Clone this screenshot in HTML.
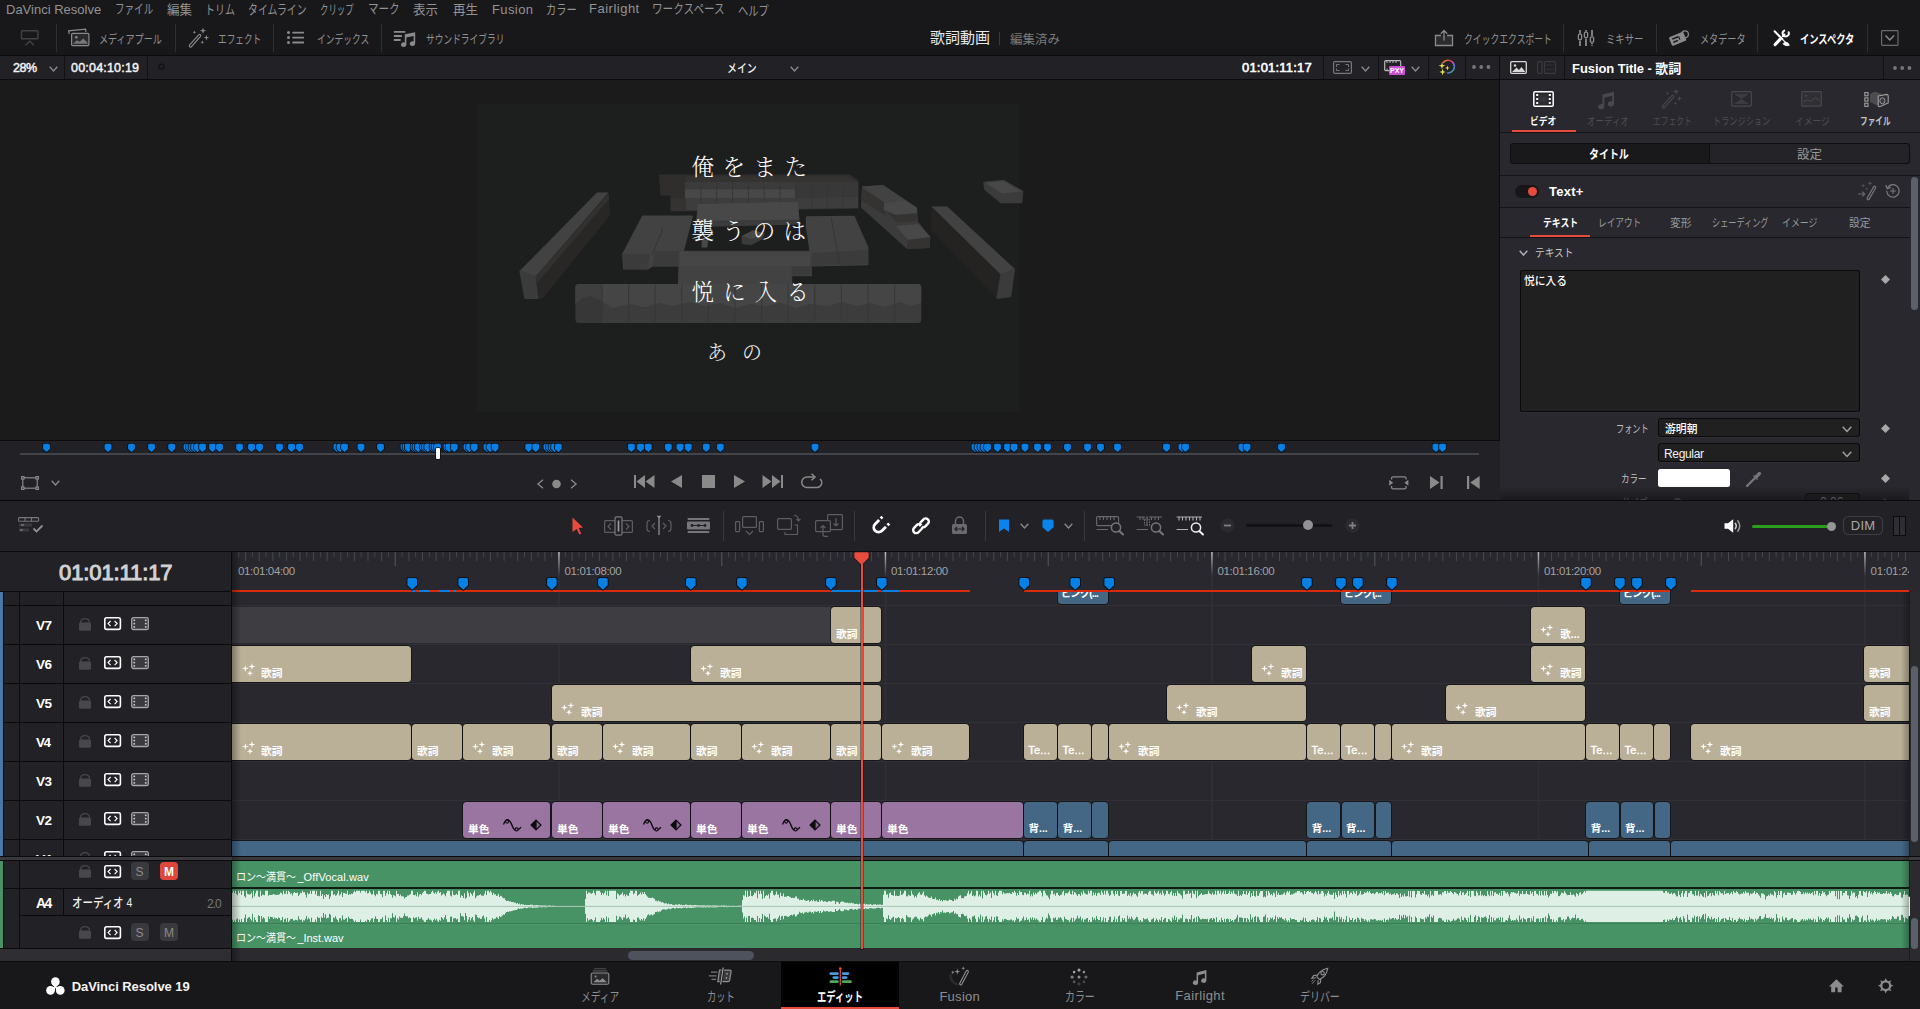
<!DOCTYPE html>
<html lang="ja"><head><meta charset="utf-8"><title>DaVinci Resolve - 歌詞動画</title>
<style>
html,body{margin:0;padding:0;background:#1a1a1a;}
body{width:1920px;height:1009px;overflow:hidden;position:relative;font-family:"Liberation Sans","Noto Sans CJK JP",sans-serif;}
#app{position:absolute;left:0;top:0;width:1920px;height:1009px;overflow:hidden;}
#app div,#app svg,#app span.t{position:absolute;}
#app span.t{white-space:nowrap;display:block;}
#app svg{overflow:visible;}
.clip{border-radius:3px;}
</style></head>
<body><div id="app">
<div style="left:0px;top:0px;width:1920px;height:55px;background:#18181b;"></div>
<div style="left:0px;top:55px;width:1920px;height:1px;background:#0b0b0d;"></div>
<span class="t" id="t1" style="font-size:13px;line-height:21px;height:21px;color:#939393;left:6.00px;top:-1px;transform-origin:0 50%;">DaVinci Resolve</span>
<span class="t" id="t2" style="font-size:13px;line-height:21px;height:21px;color:#939393;left:114.53px;top:-2px;transform-origin:0 50%;transform:scaleX(0.7347);">ファイル</span>
<span class="t" id="t3" style="font-size:13px;line-height:21px;height:21px;color:#939393;left:167.00px;top:-1px;transform-origin:0 50%;transform:scaleX(0.9615);">編集</span>
<span class="t" id="t4" style="font-size:13px;line-height:21px;height:21px;color:#939393;left:204.94px;top:-1px;transform-origin:0 50%;transform:scaleX(0.7647);">トリム</span>
<span class="t" id="t5" style="font-size:13px;line-height:21px;height:21px;color:#939393;left:248.24px;top:-1px;transform-origin:0 50%;transform:scaleX(0.7600);">タイムライン</span>
<span class="t" id="t6" style="font-size:13px;line-height:21px;height:21px;color:#939393;left:320.35px;top:-1px;transform-origin:0 50%;transform:scaleX(0.6471);">クリップ</span>
<span class="t" id="t7" style="font-size:13px;line-height:21px;height:21px;color:#939393;left:368.19px;top:-2px;transform-origin:0 50%;transform:scaleX(0.8108);">マーク</span>
<span class="t" id="t8" style="font-size:13px;line-height:21px;height:21px;color:#939393;left:413.00px;top:-1px;transform-origin:0 50%;transform:scaleX(0.9615);">表示</span>
<span class="t" id="t9" style="font-size:13px;line-height:21px;height:21px;color:#939393;left:453.00px;top:-1px;transform-origin:0 50%;transform:scaleX(0.9615);">再生</span>
<span class="t" id="t10" style="font-size:13px;line-height:21px;height:21px;color:#939393;left:492.00px;top:-1px;transform-origin:0 50%;letter-spacing:0.400px;">Fusion</span>
<span class="t" id="t11" style="font-size:13px;line-height:21px;height:21px;color:#939393;left:546.22px;top:-1px;transform-origin:0 50%;transform:scaleX(0.7838);">カラー</span>
<span class="t" id="t12" style="font-size:13px;line-height:21px;height:21px;color:#939393;left:589.00px;top:-2px;transform-origin:0 50%;letter-spacing:0.500px;">Fairlight</span>
<span class="t" id="t13" style="font-size:13px;line-height:21px;height:21px;color:#939393;left:652.18px;top:-2px;transform-origin:0 50%;transform:scaleX(0.8161);">ワークスペース</span>
<span class="t" id="t14" style="font-size:13px;line-height:21px;height:21px;color:#939393;left:738.21px;top:0px;transform-origin:0 50%;transform:scaleX(0.7895);">ヘルプ</span>
<div style="left:56px;top:24px;width:1px;height:28px;background:#2e2e33;"></div>
<div style="left:175px;top:24px;width:1px;height:28px;background:#2e2e33;"></div>
<div style="left:273px;top:24px;width:1px;height:28px;background:#2e2e33;"></div>
<div style="left:381px;top:24px;width:1px;height:28px;background:#2e2e33;"></div>
<div style="left:1563px;top:24px;width:1px;height:28px;background:#2e2e33;"></div>
<div style="left:1656px;top:24px;width:1px;height:28px;background:#2e2e33;"></div>
<div style="left:1757px;top:24px;width:1px;height:28px;background:#2e2e33;"></div>
<div style="left:1867px;top:24px;width:1px;height:28px;background:#2e2e33;"></div>
<svg style="left:20px;top:29px;" width="20" height="18" viewBox="0 0 20 18"><g fill="none" stroke="#434347" stroke-width="1.4"><rect x="1.5" y="1.7" width="16.5" height="8" rx="0.8"/><path d="M5.5 16.3 L9.8 12.3 L14 16.3"/></g></svg>
<svg style="left:67px;top:28px;" width="23" height="19" viewBox="0 0 23 19"><g fill="none" stroke="#8a8a8a" stroke-width="1.2"><path d="M2.3 6 L1.6 2.8 L18.6 1.2 L18.9 4"/><rect x="4.6" y="5.4" width="17.3" height="12.2" rx="1" fill="#2a2a2e"/><circle cx="9.3" cy="9.2" r="1.3" fill="#8a8a8a" stroke="none"/><path d="M6 15.8 L10 12.2 L12.6 13.8 L16.3 10.6 L20.5 14.8 V15.8 Z" fill="#77777b" stroke="none"/></g></svg>
<span class="t" id="t15" style="font-size:12px;line-height:19px;height:19px;color:#929292;left:99.24px;top:31px;transform-origin:0 50%;transform:scaleX(0.7561);">メディアプール</span>
<svg style="left:188px;top:27px;" width="22" height="22" viewBox="0 0 22 22"><g fill="none" stroke="#8a8a8a" stroke-linecap="round"><path d="M2.6 18.8 L11.6 8.6" stroke-width="3.6"/><path d="M2.6 18.8 L11.6 8.6" stroke="#18181b" stroke-width="1.3"/><path d="M9.3 11.2 L9.4 11.1" stroke-width="3.6" stroke-linecap="butt"/></g><g fill="#8a8a8a"><path d="M15 0.4 L15.8 2.9 L18.3 3.6 L15.8 4.4 L15 6.9 L14.2 4.4 L11.7 3.6 L14.2 2.9 Z"/><path d="M18.4 7.7 L19.1 9.9 L21.3 10.6 L19.1 11.3 L18.4 13.5 L17.7 11.3 L15.5 10.6 L17.7 9.9 Z"/><path d="M6.4 3.5 L6.9 4.8 L8.2 5.2 L6.9 5.7 L6.4 7 L5.9 5.7 L4.6 5.2 L5.9 4.8 Z"/><path d="M14.3 13.4 L14.8 14.8 L16.2 15.3 L14.8 15.8 L14.3 17.2 L13.8 15.8 L12.4 15.3 L13.8 14.8 Z"/></g></svg>
<span class="t" id="t16" style="font-size:12px;line-height:19px;height:19px;color:#929292;left:218.28px;top:31px;transform-origin:0 50%;transform:scaleX(0.7193);">エフェクト</span>
<svg style="left:286px;top:31px;" width="19" height="14" viewBox="0 0 19 14"><g fill="#8a8a8a"><circle cx="2.5" cy="1.6" r="1.5"/><circle cx="2.5" cy="6.6" r="1.5"/><circle cx="2.5" cy="11.5" r="1.5"/><rect x="6.3" y="0.7" width="11.7" height="1.9" rx="0.5"/><rect x="6.3" y="5.7" width="11.7" height="1.9" rx="0.5"/><rect x="6.3" y="10.6" width="11.7" height="1.9" rx="0.5"/></g></svg>
<span class="t" id="t17" style="font-size:12px;line-height:19px;height:19px;color:#929292;left:316.77px;top:31px;transform-origin:0 50%;transform:scaleX(0.7286);">インデックス</span>
<svg style="left:393px;top:30px;" width="23" height="18" viewBox="0 0 23 18"><g fill="#8a8a8a"><rect x="0.8" y="1" width="11.6" height="1.8" rx="0.5"/><rect x="0.8" y="5.1" width="8.2" height="1.8" rx="0.5"/><rect x="0.8" y="9.1" width="6.9" height="1.8" rx="0.5"/><path d="M11.8 4.3 L22.2 2.2 V13.6 A2.7 2.3 0 1 1 20.6 11.5 V5.9 L13.4 7.4 V14.6 A2.7 2.3 0 1 1 11.8 12.5 Z"/></g></svg>
<span class="t" id="t18" style="font-size:12px;line-height:19px;height:19px;color:#929292;left:425.50px;top:31px;transform-origin:0 50%;transform:scaleX(0.7264);">サウンドライブラリ</span>
<span class="t" id="t19" style="font-size:15px;line-height:24px;height:24px;color:#e8e8e8;left:930.00px;top:26px;transform-origin:0 50%;">歌詞動画</span>
<div style="left:999px;top:32px;width:1px;height:13px;background:#3a3a3e;"></div>
<span class="t" id="t20" style="font-size:12.5px;line-height:20px;height:20px;color:#7c7c7c;left:1010.00px;top:30px;transform-origin:0 50%;">編集済み</span>
<svg style="left:1434px;top:29px;" width="20" height="18" viewBox="0 0 20 18"><g fill="none" stroke="#8a8a8a" stroke-width="1.3"><path d="M7 6.5 H1.5 V16.5 H18.5 V6.5 H13" fill="#2b2b2f"/><path d="M10 11.5 V2 M6.8 4.8 L10 1.5 L13.2 4.8"/></g></svg>
<span class="t" id="t21" style="font-size:12px;line-height:19px;height:19px;color:#929292;left:1463.76px;top:31px;transform-origin:0 50%;transform:scaleX(0.7350);">クイックエクスポート</span>
<svg style="left:1577px;top:29px;" width="19" height="18" viewBox="0 0 19 18"><g fill="none" stroke="#8a8a8a" stroke-width="1.3"><path d="M3 1 V4.5 M3 11.5 V17 M9 1 V2.5 M9 9.5 V17 M15 1 V7 M15 14 V15.2 M15 16.3 V17" stroke-width="1.8"/><rect x="1.4" y="5.2" width="3.2" height="5.4" rx="1"/><rect x="7.4" y="3.2" width="3.2" height="5.4" rx="1"/><rect x="13.4" y="7.8" width="3.2" height="5.4" rx="1"/></g></svg>
<span class="t" id="t22" style="font-size:12px;line-height:19px;height:19px;color:#929292;left:1605.94px;top:31px;transform-origin:0 50%;transform:scaleX(0.7778);">ミキサー</span>
<svg style="left:1669px;top:29px;" width="22" height="18" viewBox="0 0 22 18"><g transform="rotate(-22 9 10)"><rect x="1" y="5" width="15.5" height="9.5" rx="1.2" fill="#8a8a8a"/><path d="M3.5 8 H10 M3.5 11.3 H8.5" stroke="#18181b" stroke-width="1.4"/><path d="M10.5 8 V11.3" stroke="#18181b" stroke-width="1.2"/></g><circle cx="16" cy="5.2" r="3.4" fill="none" stroke="#8a8a8a" stroke-width="1.2"/></svg>
<span class="t" id="t23" style="font-size:12px;line-height:19px;height:19px;color:#929292;left:1699.74px;top:31px;transform-origin:0 50%;transform:scaleX(0.7586);">メタデータ</span>
<svg style="left:1772px;top:29px;" width="19" height="18" viewBox="0 0 19 18"><g fill="none" stroke="#fff" stroke-linecap="round"><path d="M2.6 2.2 L10.5 10.3" stroke-width="2"/><path d="M11.5 11.3 L15 14.8" stroke-width="1.2"/><path d="M13 13 Q16.5 13 17.3 16.3 Q14 17.6 11.2 15.2 Z" fill="#fff" stroke-width="0.8"/><path d="M3.2 15.5 L8 10.3" stroke-width="3.2"/><path d="M10.8 7.3 L12.5 5.5" stroke-width="2"/><path d="M16.6 3.2 A3.1 3.1 0 1 1 12.3 1.6" stroke-width="1.9"/></g></svg>
<span class="t" id="t24" style="font-size:12px;line-height:19px;height:19px;color:#ffffff;font-weight:700;left:1800.23px;top:31px;transform-origin:0 50%;transform:scaleX(0.7721);">インスペクタ</span>
<svg style="left:1881px;top:30px;" width="18" height="16" viewBox="0 0 18 16"><g fill="none" stroke="#6a6a6e" stroke-width="1.2"><rect x="0.6" y="0.6" width="16.4" height="14.8" rx="0.8"/><path d="M4.5 5.5 L8.8 10 L13.1 5.5" stroke="#8a8a8a" stroke-width="1.5"/></g></svg>
<div style="left:0px;top:56px;width:1920px;height:23px;background:#212126;"></div>
<div style="left:0px;top:79px;width:1920px;height:1px;background:#0b0b0d;"></div>
<span class="t" id="t25" style="font-size:12.5px;line-height:20px;height:20px;color:#f4f4f4;left:13.00px;top:58px;transform-origin:0 50%;letter-spacing:-0.500px;-webkit-text-stroke:0.45px currentColor;">28%</span>
<svg style="left:49px;top:66px;" width="9" height="6" viewBox="0 0 9 6"><path d="M0.7 0.7 L4.5 5 L8.3 0.7" fill="none" stroke="#8a8a8a" stroke-width="1.4"/></svg>
<div style="left:64px;top:56px;width:1px;height:23px;background:#121214;"></div>
<div style="left:147px;top:56px;width:1px;height:23px;background:#121214;"></div>
<div style="left:1323px;top:56px;width:1px;height:23px;background:#121214;"></div>
<div style="left:1378px;top:56px;width:1px;height:23px;background:#121214;"></div>
<div style="left:1428px;top:56px;width:1px;height:23px;background:#121214;"></div>
<div style="left:1465px;top:56px;width:1px;height:23px;background:#121214;"></div>
<div style="left:1499px;top:56px;width:1px;height:23px;background:#121214;"></div>
<div style="left:1564px;top:56px;width:1px;height:23px;background:#121214;"></div>
<div style="left:1883px;top:56px;width:1px;height:23px;background:#121214;"></div>
<span class="t" id="t26" style="font-size:12.5px;line-height:20px;height:20px;color:#f4f4f4;left:71.00px;top:58px;transform-origin:0 50%;letter-spacing:0.200px;-webkit-text-stroke:0.45px currentColor;">00:04:10:19</span>
<svg style="left:157.5px;top:62.5px;" width="7" height="7" viewBox="0 0 7 7"><circle cx="3.5" cy="3.5" r="2.5" fill="none" stroke="#111113" stroke-width="1.2"/></svg>
<span class="t" id="t27" style="font-size:12px;line-height:19px;height:19px;color:#f0f0f0;font-weight:500;left:727.18px;top:60px;transform-origin:0 50%;transform:scaleX(0.8235);">メイン</span>
<svg style="left:790px;top:66px;" width="9" height="6" viewBox="0 0 9 6"><path d="M0.7 0.7 L4.5 5 L8.3 0.7" fill="none" stroke="#8a8a8a" stroke-width="1.4"/></svg>
<span class="t" id="t28" style="font-size:13px;line-height:21px;height:21px;color:#ffffff;left:1242.00px;top:57px;transform-origin:0 50%;letter-spacing:0.200px;-webkit-text-stroke:0.6px currentColor;">01:01:11:17</span>
<svg style="left:1333px;top:61px;" width="19" height="13" viewBox="0 0 19 13"><g fill="none" stroke="#77777b" stroke-width="1.2"><rect x="0.6" y="0.6" width="17.8" height="11.8" rx="1.2"/><path d="M3.5 6 V3.5 H6.5 M12.5 3.5 H15.5 V6 M15.5 7.5 V9.5 H12.5 M6.5 9.5 H3.5 V7.5" stroke-width="1"/></g></svg>
<svg style="left:1361px;top:66px;" width="9" height="6" viewBox="0 0 9 6"><path d="M0.7 0.7 L4.5 5 L8.3 0.7" fill="none" stroke="#8a8a8a" stroke-width="1.4"/></svg>
<svg style="left:1384px;top:59px;" width="22" height="17" viewBox="0 0 22 17"><g><rect x="0.7" y="1.7" width="16" height="10" rx="1" fill="none" stroke="#b8b8b8" stroke-width="1.2"/><path d="M3 1.7 V4 M6 1.7 V4 M9 1.7 V4 M12 1.7 V4 M3 9.5 V11.7" stroke="#b8b8b8" stroke-width="1"/><rect x="5" y="7" width="16" height="9" rx="1" fill="#c94fd0"/><text x="13" y="14.3" font-size="7" font-weight="700" fill="#fff" text-anchor="middle" font-family="Liberation Sans, sans-serif">PXY</text></g></svg>
<svg style="left:1411px;top:66px;" width="9" height="6" viewBox="0 0 9 6"><path d="M0.7 0.7 L4.5 5 L8.3 0.7" fill="none" stroke="#8a8a8a" stroke-width="1.4"/></svg>
<svg style="left:1438px;top:58px;" width="20" height="18" viewBox="0 0 20 18"><defs><linearGradient id="cg" x1="0" y1="0" x2="1" y2="1"><stop offset="0" stop-color="#f0a030"/><stop offset="0.3" stop-color="#e8403a"/><stop offset="0.55" stop-color="#d050e0"/><stop offset="0.75" stop-color="#4a7be0"/><stop offset="1" stop-color="#3fbf4a"/></linearGradient></defs>
<path d="M5.2 4.6 A6.3 6.3 0 1 1 9.6 14.9" fill="none" stroke="url(#cg)" stroke-width="1.5" stroke-linecap="round"/>
<g fill="#f0e64a"><path d="M4 4.2 L4.8 6.9 L7.5 7.7 L4.8 8.5 L4 11.2 L3.2 8.5 L0.5 7.7 L3.2 6.9 Z"/><path d="M9.4 7.5 L10 9.4 L11.9 10 L10 10.6 L9.4 12.5 L8.8 10.6 L6.9 10 L8.8 9.4 Z"/><path d="M4.6 10.8 L5.4 13.2 L7.8 14 L5.4 14.8 L4.6 17.2 L3.8 14.8 L1.4 14 L3.8 13.2 Z"/></g></svg>
<svg style="left:1472px;top:65px;" width="19" height="4" viewBox="0 0 19 4"><g fill="#77777b"><circle cx="2" cy="2" r="1.9"/><circle cx="9.2" cy="2" r="1.9"/><circle cx="16.4" cy="2" r="1.9"/></g></svg>
<div style="left:0px;top:80px;width:1500px;height:360px;background:#1b1b1b;"></div>
<div style="left:477px;top:104px;width:542px;height:308px;background:#1d1e1e;"></div>
<svg style="left:0px;top:0px;" width="1500" height="440" viewBox="0 0 1500 440"><polygon points="659.7,175.3 850.0,175.3 858.0,181.0 858.0,208.0 671.2,210.8 671.2,194.8 661.0,194.8" fill="#2f2e2c" stroke="#2f2e2c" stroke-width="1.5" stroke-linejoin="round"/><polygon points="686.0,176.5 849.0,176.5 857.0,182.0 686.0,182.0" fill="#343332" /><polygon points="685.0,182.0 795.5,182.0 795.5,198.0 685.0,198.0" fill="#3b3b3b" /><polygon points="685.0,189.6 795.5,189.6 795.5,198.0 685.0,198.0" fill="#484848" /><polygon points="795.5,182.0 858.0,182.0 858.0,196.5 795.5,198.0" fill="#393838" /><polygon points="671.2,198.0 795.5,198.0 858.0,196.5 858.0,208.0 671.2,210.8" fill="#3d3d3d" /><polygon points="671.2,198.0 686.0,198.0 686.0,210.5 671.2,210.8" fill="#343332" /><path d="M701.0 182.5 V209" stroke="#363636" stroke-width="0.9"/><path d="M716.8 182.5 V209" stroke="#363636" stroke-width="0.9"/><path d="M732.6 182.5 V209" stroke="#363636" stroke-width="0.9"/><path d="M748.4 182.5 V209" stroke="#363636" stroke-width="0.9"/><path d="M764.2 182.5 V209" stroke="#363636" stroke-width="0.9"/><path d="M780.0 182.5 V209" stroke="#363636" stroke-width="0.9"/><path d="M795.8 182.5 V209" stroke="#363636" stroke-width="0.9"/><path d="M811.6 182.5 V207" stroke="#363636" stroke-width="0.9"/><path d="M827.4 182.5 V207" stroke="#363636" stroke-width="0.9"/><path d="M843.2 182.5 V207" stroke="#363636" stroke-width="0.9"/><polygon points="698.0,204.0 797.8,201.7 800.0,224.6 695.8,226.9" fill="#3b3b3b" /><polygon points="698.0,204.0 797.8,201.7 799.4,219.5 696.3,221.0" fill="#484848" /><polygon points="862.0,186.6 883.0,185.0 917.0,207.4 917.5,221.0 930.4,237.0 929.4,248.0 907.0,249.0 861.0,207.4" fill="#3b3b3b" /><polygon points="862.0,186.6 883.0,185.0 906.0,200.5 886.0,203.5" fill="#424242" /><polygon points="862.0,188.0 886.0,204.0 886.0,216.0 861.0,200.0" fill="#343332" /><polygon points="884.0,203.0 905.0,200.0 917.0,208.0 917.5,221.0 897.0,223.0 884.0,210.0" fill="#484848" /><polygon points="884.0,210.0 897.0,223.0 917.5,221.0 917.0,213.0 896.0,215.0" fill="#343332" /><polygon points="896.0,226.0 918.0,224.0 930.4,237.0 908.0,240.0" fill="#484848" /><polygon points="908.0,240.0 930.4,237.0 929.4,248.0 907.0,249.0" fill="#343332" /><polygon points="984.0,182.6 1003.8,180.6 1022.6,191.5 1021.6,202.4 1000.8,202.4 985.0,189.5" fill="#3b3b3b" stroke="#3b3b3b" stroke-width="1.5" stroke-linejoin="round"/><polygon points="985.0,182.8 1003.5,181.0 1021.5,191.5 1002.0,193.5" fill="#484848" /><polygon points="519.8,270.8 597.0,192.5 608.6,192.5 535.7,276.7" fill="#424242" /><polygon points="519.8,270.8 535.7,276.7 538.6,298.5 524.8,298.5" fill="#3b3b3b" stroke="#3b3b3b" stroke-width="1" stroke-linejoin="round"/><polygon points="535.7,276.7 608.6,193.5 610.0,215.3 542.6,298.5 538.6,298.5" fill="#282726" /><polygon points="535.7,276.7 608.6,193.5 609.0,199.0 537.0,283.0" fill="#33312f" /><polygon points="931.4,206.4 947.3,206.4 1014.7,268.8 1000.8,274.8" fill="#424242" /><polygon points="931.4,207.4 1000.8,274.8 996.8,298.5 930.4,229.2" fill="#242322" /><polygon points="1000.8,274.8 1014.7,268.8 1010.7,296.6 996.8,298.5" fill="#3b3b3b" stroke="#3b3b3b" stroke-width="1" stroke-linejoin="round"/><polygon points="642.7,216.3 692.2,216.3 679.3,265.8 652.6,265.8 647.6,268.8 623.9,268.8 622.9,254.0" fill="#424242" stroke="#424242" stroke-width="1.5" stroke-linejoin="round"/><polygon points="622.9,254.0 650.0,254.0 647.6,268.8 623.9,268.8" fill="#3b3b3b" /><polygon points="655.0,251.0 682.0,251.0 679.3,265.8 652.6,265.8" fill="#3b3b3b" /><path d="M663 228 L652 255" stroke="#343434" stroke-width="1"/><polygon points="806.6,216.9 854.0,216.6 867.7,247.5 867.7,264.5 812.5,265.8 806.6,227.2" fill="#424242" stroke="#424242" stroke-width="1.5" stroke-linejoin="round"/><polygon points="812.0,253.0 867.7,250.0 867.7,264.5 812.5,265.8" fill="#3b3b3b" /><path d="M831 217 L840 265" stroke="#363636" stroke-width="1"/><polygon points="741.7,236.0 753.1,230.3 764.6,233.8 762.3,239.5 750.8,245.2 741.7,244.0" fill="#3b3b3b" /><polygon points="741.7,236.0 753.1,230.3 764.6,233.8 752.0,239.0" fill="#484848" /><polygon points="701.6,239.5 708.4,239.5 707.3,247.5 701.6,247.5" fill="#484848" /><polygon points="679.5,251.5 810.5,251.5 811.3,275.6 791.5,275.6 791.5,285.0 678.7,285.0" fill="#424242" stroke="#424242" stroke-width="1.5" stroke-linejoin="round"/><polygon points="680.0,252.0 810.0,252.0 810.6,266.0 679.3,266.0" fill="#464646" /><polygon points="791.5,266.0 811.0,266.0 811.3,275.6 791.5,275.6" fill="#3b3b3b" /><rect x="575.4" y="284" width="345.8" height="39" rx="3.5" fill="#3c3c3c"/><path d="M575.4 305 V287.5 Q575.4 284 579 284 H917.7 Q921.2 284 921.2 287.5 V303 L910 306 L900 302 L885 307 L870 303 L858 306 L842 302 L828 306 L810 304 L796 308 L780 303 L766 306 L750 304 L736 308 L720 303 L705 306 L690 302 L672 306 L660 303 L645 307 L630 304 L612 308 L600 300 L590 296 L582 298 Z" fill="#454545"/><path d="M575.4 288 Q575.4 284 579 284 H602 V323 H579 Q575.4 323 575.4 319 Z" fill="#000" fill-opacity="0.08"/><path d="M602.0 284.5 V322.5" stroke="#373737" stroke-width="1"/><path d="M628.6 284.5 V322.5" stroke="#373737" stroke-width="1"/><path d="M655.2 284.5 V322.5" stroke="#373737" stroke-width="1"/><path d="M681.8 284.5 V322.5" stroke="#373737" stroke-width="1"/><path d="M708.4 284.5 V322.5" stroke="#373737" stroke-width="1"/><path d="M735.0 284.5 V322.5" stroke="#373737" stroke-width="1"/><path d="M761.6 284.5 V322.5" stroke="#373737" stroke-width="1"/><path d="M788.2 284.5 V322.5" stroke="#373737" stroke-width="1"/><path d="M814.8 284.5 V322.5" stroke="#373737" stroke-width="1"/><path d="M841.4 284.5 V322.5" stroke="#373737" stroke-width="1"/><path d="M868.0 284.5 V322.5" stroke="#373737" stroke-width="1"/><path d="M894.6 284.5 V322.5" stroke="#373737" stroke-width="1"/></svg>
<span class="t" id="t29" style="font-size:22.5px;line-height:36px;height:36px;color:#ffffff;font-weight:300;font-family:'Liberation Serif','Noto Serif CJK JP','Noto Serif CJK SC',serif;left:691.50px;top:150px;transform-origin:0 50%;letter-spacing:8.500px;">俺をまた</span>
<span class="t" id="t30" style="font-size:22.5px;line-height:36px;height:36px;color:#ffffff;font-weight:300;font-family:'Liberation Serif','Noto Serif CJK JP','Noto Serif CJK SC',serif;left:691.50px;top:214px;transform-origin:0 50%;letter-spacing:8.167px;">襲うのは</span>
<span class="t" id="t31" style="font-size:22.5px;line-height:36px;height:36px;color:#ffffff;font-weight:300;font-family:'Liberation Serif','Noto Serif CJK JP','Noto Serif CJK SC',serif;left:691.50px;top:275px;transform-origin:0 50%;letter-spacing:9.167px;">悦に入る</span>
<span class="t" id="t32" style="font-size:20px;line-height:32px;height:32px;color:#f4f4f4;font-weight:300;font-family:'Liberation Serif','Noto Serif CJK JP','Noto Serif CJK SC',serif;left:707.00px;top:337px;transform-origin:0 50%;letter-spacing:15.000px;">あの</span>
<div style="left:1500px;top:80px;width:420px;height:420px;background:#28282e;"></div>
<div style="left:1499px;top:56px;width:1px;height:445px;background:#0b0b0d;"></div>
<svg style="left:1510px;top:61px;" width="17" height="13" viewBox="0 0 17 13"><g><rect x="0.7" y="0.7" width="15.6" height="11.6" rx="1" fill="none" stroke="#d8d8d8" stroke-width="1.3"/><circle cx="5" cy="4.5" r="1.3" fill="#d8d8d8"/><path d="M2 11 L6.5 6.5 L9 9 L11.5 6 L15 10.5 V11 Z" fill="#d8d8d8"/></g></svg>
<svg style="left:1537px;top:61px;" width="19" height="13" viewBox="0 0 19 13"><g fill="none" stroke="#3a3a3e" stroke-width="1.2"><rect x="0.6" y="0.6" width="4.5" height="11.8" rx="1"/><rect x="7.5" y="0.6" width="11" height="11.8" rx="1"/><path d="M9.5 4 H16.5 M9.5 8.5 H16.5" stroke-dasharray="2 1"/></g></svg>
<span class="t" id="t33" style="font-size:13px;line-height:21px;height:21px;color:#ffffff;font-weight:700;left:1572.00px;top:58px;transform-origin:0 50%;letter-spacing:-0.062px;">Fusion Title - 歌詞</span>
<svg style="left:1893px;top:66px;" width="19" height="4" viewBox="0 0 19 4"><g fill="#77777b"><circle cx="2" cy="2" r="1.9"/><circle cx="9.2" cy="2" r="1.9"/><circle cx="16.4" cy="2" r="1.9"/></g></svg>
<svg style="left:1533px;top:91px;" width="21" height="16" viewBox="0 0 21 16"><defs><radialGradient id="vg" cx="0.5" cy="0.5" r="0.6"><stop offset="0" stop-color="#3a3a3e"/><stop offset="1" stop-color="#222226"/></radialGradient></defs><g><rect x="0.8" y="0.8" width="19.4" height="14.4" rx="1.3" fill="url(#vg)" stroke="#fff" stroke-width="1.5"/><g fill="#fff"><rect x="3.2" y="3" width="2" height="2"/><rect x="3.2" y="7" width="2" height="2"/><rect x="3.2" y="11" width="2" height="2"/><rect x="15.8" y="3" width="2" height="2"/><rect x="15.8" y="7" width="2" height="2"/><rect x="15.8" y="11" width="2" height="2"/></g></g></svg>
<span class="t" id="t34" style="font-size:10.5px;line-height:17px;height:17px;color:#ffffff;font-weight:700;left:1530.37px;top:113px;transform-origin:0 50%;transform:scaleX(0.8333);">ビデオ</span>
<div style="left:1512px;top:130px;width:64px;height:2px;background:#e64b3d;"></div>
<svg style="left:1597px;top:90.5px;" width="19" height="19" viewBox="0 0 19 19"><path d="M5.5 3.6 L17 0.8 V13 A3.1 2.7 0 1 1 15.2 10.6 V4.8 L7.3 6.7 V15.6 A3.1 2.7 0 1 1 5.5 13.2 Z" fill="#48484d"/></svg>
<span class="t" id="t35" style="font-size:10.5px;line-height:17px;height:17px;color:#4e4e53;left:1586.69px;top:113px;transform-origin:0 50%;transform:scaleX(0.8120);">オーディオ</span>
<svg style="left:1661px;top:88px;" width="22" height="22" viewBox="0 0 22 22"><g fill="none" stroke="#48484d" stroke-linecap="round"><path d="M2.6 18.8 L11.6 8.6" stroke-width="3.6"/><path d="M2.6 18.8 L11.6 8.6" stroke="#28282e" stroke-width="1.3"/><path d="M9.3 11.2 L9.4 11.1" stroke-width="3.6" stroke-linecap="butt"/></g><g fill="#48484d"><path d="M15 0.4 L15.8 2.9 L18.3 3.6 L15.8 4.4 L15 6.9 L14.2 4.4 L11.7 3.6 L14.2 2.9 Z"/><path d="M18.4 7.7 L19.1 9.9 L21.3 10.6 L19.1 11.3 L18.4 13.5 L17.7 11.3 L15.5 10.6 L17.7 9.9 Z"/><path d="M6.4 3.5 L6.9 4.8 L8.2 5.2 L6.9 5.7 L6.4 7 L5.9 5.7 L4.6 5.2 L5.9 4.8 Z"/><path d="M14.3 13.4 L14.8 14.8 L16.2 15.3 L14.8 15.8 L14.3 17.2 L13.8 15.8 L12.4 15.3 L13.8 14.8 Z"/></g></svg>
<span class="t" id="t36" style="font-size:10.5px;line-height:17px;height:17px;color:#4e4e53;left:1653.01px;top:113px;transform-origin:0 50%;transform:scaleX(0.7380);">エフェクト</span>
<svg style="left:1731px;top:91px;" width="21" height="16" viewBox="0 0 21 16"><g><rect x="0.7" y="0.7" width="19.6" height="14.4" rx="1" fill="none" stroke="#48484d" stroke-width="1.2"/><path d="M2.8 2.8 H18.2 L10.5 7.9 Z M2.8 13 H18.2 L10.5 7.9 Z" fill="#3b3b40"/></g></svg>
<span class="t" id="t37" style="font-size:10.5px;line-height:17px;height:17px;color:#4e4e53;left:1713.17px;top:113px;transform-origin:0 50%;transform:scaleX(0.7771);">トランジション</span>
<svg style="left:1801px;top:91px;" width="21" height="16" viewBox="0 0 21 16"><g><rect x="0.7" y="0.7" width="19.6" height="14.4" rx="1" fill="#2f2f34" stroke="#48484d" stroke-width="1.2"/><circle cx="5.2" cy="4.8" r="1.1" fill="#48484d"/><path d="M2.6 10.5 L6.5 9.2 L9.5 10.4 L14.5 6.8 L18.5 9.5" fill="none" stroke="#48484d" stroke-width="1"/></g></svg>
<span class="t" id="t38" style="font-size:10.5px;line-height:17px;height:17px;color:#4e4e53;left:1794.87px;top:113px;transform-origin:0 50%;transform:scaleX(0.8300);">イメージ</span>
<svg style="left:1863.5px;top:90.5px;" width="25" height="17" viewBox="0 0 25 17"><g fill="none" stroke="#a0a0a0" stroke-width="1.1"><rect x="0.8" y="1.6" width="3.2" height="3.2"/><rect x="0.8" y="6.9" width="3.2" height="3.2"/><rect x="0.8" y="12.2" width="3.2" height="3.2"/></g><path d="M6 3 L10.5 0.6 L18.5 3.2 L18.5 13 L13 14.6 L6 11 Z" fill="#4c4c50"/><path d="M14.2 5 L22.8 3.4 Q24.2 3.6 24.2 5 V12 L15.6 15.8 Q14.2 15.6 14.2 14.2 Z" fill="#2e2e33" stroke="#a0a0a0" stroke-width="1.1"/><ellipse cx="18.4" cy="9.8" rx="2.6" ry="3" fill="#3a3a3e" stroke="#a0a0a0" stroke-width="0.9"/></svg>
<span class="t" id="t39" style="font-size:10.5px;line-height:17px;height:17px;color:#c4c4c4;font-weight:700;left:1860.27px;top:113px;transform-origin:0 50%;transform:scaleX(0.7268);">ファイル</span>
<div style="left:1500px;top:132px;width:420px;height:1px;background:#141416;"></div>
<div style="left:1510px;top:142.5px;width:400px;height:21.5px;background:#232328;border-radius:3.5px;box-shadow:inset 0 0 0 1px #0e0e10;"></div>
<div style="left:1511px;top:143.5px;width:198px;height:19.5px;background:#19191c;border-radius:2.5px 0 0 2.5px;"></div>
<div style="left:1709px;top:143px;width:1px;height:20.5px;background:#0e0e10;"></div>
<span class="t" id="t40" style="font-size:12px;line-height:19px;height:19px;color:#ffffff;font-weight:700;left:1589.17px;top:146px;transform-origin:0 50%;transform:scaleX(0.8298);">タイトル</span>
<span class="t" id="t41" style="font-size:12px;line-height:19px;height:19px;color:#9a9a9a;left:1797.00px;top:146px;transform-origin:0 50%;transform:scaleX(1.0417);">設定</span>
<div style="left:1500px;top:175px;width:420px;height:1px;background:#141416;"></div>
<div style="left:1515px;top:184.5px;width:24px;height:13.5px;background:#17171a;border-radius:7px;"></div>
<div style="left:1527.5px;top:186.8px;width:9px;height:9px;background:#e64b3d;border-radius:5px;"></div>
<span class="t" id="t42" style="font-size:13px;line-height:21px;height:21px;color:#ffffff;font-weight:700;left:1549.00px;top:181px;transform-origin:0 50%;letter-spacing:0.250px;">Text+</span>
<svg style="left:1857px;top:180px;" width="22" height="22" viewBox="0 0 22 22"><g fill="none" stroke-linecap="round"><path d="M11.2 18.6 L17.6 7.4" stroke="#77777b" stroke-width="3.4"/><path d="M11.2 18.6 L17.6 7.4" stroke="#28282e" stroke-width="1.1"/><path d="M1.5 14 H7.5 M5.5 11.8 L7.7 14 L5.5 16.2" stroke="#6a6a6e" stroke-width="1.2"/></g><g fill="#505055"><path d="M13 0.6 L13.7 2.7 L15.8 3.4 L13.7 4.1 L13 6.2 L12.3 4.1 L10.2 3.4 L12.3 2.7 Z"/><path d="M6.2 3.4 L6.8 5 L8.4 5.6 L6.8 6.2 L6.2 7.8 L5.6 6.2 L4 5.6 L5.6 5 Z"/><path d="M9.8 7 L10.3 8.3 L11.6 8.8 L10.3 9.3 L9.8 10.6 L9.3 9.3 L8 8.8 L9.3 8.3 Z"/></g></svg>
<svg style="left:1885px;top:183px;" width="16" height="16" viewBox="0 0 16 16"><g fill="none" stroke="#77777b" stroke-width="1.3" stroke-linecap="round"><path d="M2.5 5 A6.2 6.2 0 1 1 1.8 8.5"/><path d="M1 2.5 L2.3 5.6 L5.4 4.6" /><path d="M8 5.5 V10.5 M5.5 8 H10.5" stroke-width="1.1"/></g></svg>
<div style="left:1500px;top:207px;width:410px;height:1px;background:#141416;"></div>
<span class="t" id="t43" style="font-size:11px;line-height:18px;height:18px;color:#ffffff;font-weight:700;left:1542.70px;top:214px;transform-origin:0 50%;transform:scaleX(0.8049);">テキスト</span>
<span class="t" id="t44" style="font-size:11px;line-height:18px;height:18px;color:#9a9a9a;left:1598.43px;top:214px;transform-origin:0 50%;transform:scaleX(0.7843);">レイアウト</span>
<span class="t" id="t45" style="font-size:11px;line-height:18px;height:18px;color:#9a9a9a;left:1669.50px;top:214px;transform-origin:0 50%;transform:scaleX(0.9773);">変形</span>
<span class="t" id="t46" style="font-size:11px;line-height:18px;height:18px;color:#9a9a9a;left:1711.76px;top:214px;transform-origin:0 50%;transform:scaleX(0.7400);">シェーディング</span>
<span class="t" id="t47" style="font-size:11px;line-height:18px;height:18px;color:#9a9a9a;left:1782.19px;top:214px;transform-origin:0 50%;transform:scaleX(0.8095);">イメージ</span>
<span class="t" id="t48" style="font-size:11px;line-height:18px;height:18px;color:#9a9a9a;left:1849.00px;top:214px;transform-origin:0 50%;transform:scaleX(0.9773);">設定</span>
<div style="left:1530px;top:235px;width:60px;height:2px;background:#e64b3d;"></div>
<div style="left:1500px;top:237px;width:410px;height:1px;background:#141416;"></div>
<svg style="left:1519px;top:250px;" width="9" height="6" viewBox="0 0 9 6"><path d="M0.7 0.7 L4.5 5 L8.3 0.7" fill="none" stroke="#b0b0b0" stroke-width="1.5"/></svg>
<span class="t" id="t49" style="font-size:11px;line-height:18px;height:18px;color:#c8c8c8;left:1535.12px;top:244px;transform-origin:0 50%;transform:scaleX(0.8780);">テキスト</span>
<div style="left:1520px;top:269.5px;width:340px;height:142.5px;background:#202020;border-radius:2.5px;box-shadow:inset 0 0 0 1px #0a0a0c, 0 1px 0 0 #303036;"></div>
<span class="t" id="t50" style="font-size:11.5px;line-height:18px;height:18px;color:#ffffff;font-weight:500;left:1523.50px;top:272px;transform-origin:0 50%;transform:scaleX(0.9333);">悦に入る</span>
<svg style="left:1881.2px;top:275.0px;" width="9.0" height="9.0" viewBox="0 0 9.0 9.0"><path d="M4.5 0 L9.0 4.5 L4.5 9.0 L0 4.5 Z" fill="#a8a8a8"/></svg>
<span class="t" id="t51" style="font-size:11px;line-height:18px;height:18px;color:#c0c0c0;left:1615.76px;top:420px;transform-origin:0 50%;transform:scaleX(0.7439);">フォント</span>
<div style="left:1657.5px;top:417.9px;width:202.5px;height:19.4px;background:#202020;border-radius:3.5px;box-shadow:inset 0 0 0 1px #0a0a0c, 0 1px 0 0 #303036;"></div>
<span class="t" id="t52" style="font-size:11.5px;line-height:18px;height:18px;color:#ffffff;font-weight:500;left:1665.00px;top:420px;transform-origin:0 50%;transform:scaleX(0.9412);">游明朝</span>
<svg style="left:1842px;top:426px;" width="10" height="6.5" viewBox="0 0 10 6.5"><path d="M0.7 0.7 L5.0 5.5 L9.3 0.7" fill="none" stroke="#a0a0a0" stroke-width="1.5"/></svg>
<svg style="left:1881.2px;top:424.0px;" width="9.0" height="9.0" viewBox="0 0 9.0 9.0"><path d="M4.5 0 L9.0 4.5 L4.5 9.0 L0 4.5 Z" fill="#a8a8a8"/></svg>
<div style="left:1657.5px;top:443px;width:202.5px;height:19.4px;background:#202020;border-radius:3.5px;box-shadow:inset 0 0 0 1px #0a0a0c, 0 1px 0 0 #303036;"></div>
<span class="t" id="t53" style="font-size:12px;line-height:19px;height:19px;color:#f0f0f0;left:1664.00px;top:445px;transform-origin:0 50%;letter-spacing:-0.333px;">Regular</span>
<svg style="left:1842px;top:451px;" width="10" height="6.5" viewBox="0 0 10 6.5"><path d="M0.7 0.7 L5.0 5.5 L9.3 0.7" fill="none" stroke="#a0a0a0" stroke-width="1.5"/></svg>
<span class="t" id="t54" style="font-size:11px;line-height:18px;height:18px;color:#c0c0c0;left:1621.23px;top:470px;transform-origin:0 50%;transform:scaleX(0.7742);">カラー</span>
<div style="left:1657.8px;top:469px;width:72.7px;height:18px;background:#ffffff;border-radius:2.5px;"></div>
<svg style="left:1745px;top:471px;" width="17" height="17" viewBox="0 0 17 17"><g stroke="#77777b" stroke-linecap="round" fill="none"><path d="M2 15 L9.5 7.5" stroke-width="2.4"/><path d="M9 5 L12 8" stroke-width="1.6"/><path d="M11.5 5.5 L14.5 2.5" stroke-width="3.2"/></g></svg>
<svg style="left:1881.2px;top:474.0px;" width="9.0" height="9.0" viewBox="0 0 9.0 9.0"><path d="M4.5 0 L9.0 4.5 L4.5 9.0 L0 4.5 Z" fill="#a8a8a8"/></svg>
<div style="left:1500px;top:486px;width:409px;height:14px;overflow:hidden;">
<div style="left:305px;top:7.3px;width:55px;height:19px;background:#202020;border-radius:3.5px;box-shadow:inset 0 0 0 1px #0a0a0c;"></div>
<span class="t" style="left:320px;top:8px;font-size:12px;line-height:16px;color:#c8c8c8;">0.06</span>
<span class="t" style="left:122px;top:8.5px;font-size:11px;line-height:16px;color:#c0c0c0;transform:scaleX(0.78);transform-origin:0 50%;">サイズ</span>
<div style="left:172.5px;top:11.5px;width:9.5px;height:9.5px;background:#8e8e92;border-radius:5px;"></div>
<div style="left:380.5px;top:13.6px;width:7px;height:7px;background:#a8a8a8;transform:rotate(45deg);"></div>
<div style="left:0px;top:0px;width:409px;height:14px;background:linear-gradient(to bottom, rgba(22,22,25,0), rgba(22,22,25,0.75));"></div>
</div>
<div style="left:1911px;top:177px;width:7px;height:133px;background:#5b606b;border-radius:3.5px;"></div>
<div style="left:0px;top:440px;width:1500px;height:1px;background:#0b0b0d;"></div>
<div style="left:0px;top:441px;width:1500px;height:59px;background:#212126;"></div>
<div style="left:0px;top:500px;width:1920px;height:1px;background:#0b0b0d;"></div>
<div style="left:0px;top:501px;width:1920px;height:50px;background:#212126;"></div>
<div style="left:0px;top:551px;width:1920px;height:1px;background:#0b0b0d;"></div>
<div style="left:20px;top:453.2px;width:1459px;height:1.8px;background:#42444c;"></div>
<svg style="left:0px;top:0px;" width="1500" height="460" viewBox="0 0 1500 460"><path d="M44.6 443.8 H48.4 Q49.9 443.8 49.9 445.3 V448.9 L46.5 452.1 L43.1 448.9 V445.3 Q43.1 443.8 44.6 443.8 Z" fill="#0780e6" stroke="#0a1018" stroke-width="1.7" stroke-linejoin="round" paint-order="stroke"/><path d="M106.1 443.8 H109.9 Q111.4 443.8 111.4 445.3 V448.9 L108.0 452.1 L104.6 448.9 V445.3 Q104.6 443.8 106.1 443.8 Z" fill="#0780e6" stroke="#0a1018" stroke-width="1.7" stroke-linejoin="round" paint-order="stroke"/><path d="M129.6 443.8 H133.4 Q134.9 443.8 134.9 445.3 V448.9 L131.5 452.1 L128.1 448.9 V445.3 Q128.1 443.8 129.6 443.8 Z" fill="#0780e6" stroke="#0a1018" stroke-width="1.7" stroke-linejoin="round" paint-order="stroke"/><path d="M149.6 443.8 H153.4 Q154.9 443.8 154.9 445.3 V448.9 L151.5 452.1 L148.1 448.9 V445.3 Q148.1 443.8 149.6 443.8 Z" fill="#0780e6" stroke="#0a1018" stroke-width="1.7" stroke-linejoin="round" paint-order="stroke"/><path d="M169.8 443.8 H173.6 Q175.1 443.8 175.1 445.3 V448.9 L171.7 452.1 L168.3 448.9 V445.3 Q168.3 443.8 169.8 443.8 Z" fill="#0780e6" stroke="#0a1018" stroke-width="1.7" stroke-linejoin="round" paint-order="stroke"/><path d="M185.1 443.8 H188.9 Q190.4 443.8 190.4 445.3 V448.9 L187.0 452.1 L183.6 448.9 V445.3 Q183.6 443.8 185.1 443.8 Z" fill="#0780e6" stroke="#0a1018" stroke-width="1.7" stroke-linejoin="round" paint-order="stroke"/><path d="M187.6 443.8 H191.4 Q192.9 443.8 192.9 445.3 V448.9 L189.5 452.1 L186.1 448.9 V445.3 Q186.1 443.8 187.6 443.8 Z" fill="#0780e6" stroke="#0a1018" stroke-width="1.7" stroke-linejoin="round" paint-order="stroke"/><path d="M190.1 443.8 H193.9 Q195.4 443.8 195.4 445.3 V448.9 L192.0 452.1 L188.6 448.9 V445.3 Q188.6 443.8 190.1 443.8 Z" fill="#0780e6" stroke="#0a1018" stroke-width="1.7" stroke-linejoin="round" paint-order="stroke"/><path d="M192.6 443.8 H196.4 Q197.9 443.8 197.9 445.3 V448.9 L194.5 452.1 L191.1 448.9 V445.3 Q191.1 443.8 192.6 443.8 Z" fill="#0780e6" stroke="#0a1018" stroke-width="1.7" stroke-linejoin="round" paint-order="stroke"/><path d="M195.6 443.8 H199.4 Q200.9 443.8 200.9 445.3 V448.9 L197.5 452.1 L194.1 448.9 V445.3 Q194.1 443.8 195.6 443.8 Z" fill="#0780e6" stroke="#0a1018" stroke-width="1.7" stroke-linejoin="round" paint-order="stroke"/><path d="M200.6 443.8 H204.4 Q205.9 443.8 205.9 445.3 V448.9 L202.5 452.1 L199.1 448.9 V445.3 Q199.1 443.8 200.6 443.8 Z" fill="#0780e6" stroke="#0a1018" stroke-width="1.7" stroke-linejoin="round" paint-order="stroke"/><path d="M210.6 443.8 H214.4 Q215.9 443.8 215.9 445.3 V448.9 L212.5 452.1 L209.1 448.9 V445.3 Q209.1 443.8 210.6 443.8 Z" fill="#0780e6" stroke="#0a1018" stroke-width="1.7" stroke-linejoin="round" paint-order="stroke"/><path d="M217.6 443.8 H221.4 Q222.9 443.8 222.9 445.3 V448.9 L219.5 452.1 L216.1 448.9 V445.3 Q216.1 443.8 217.6 443.8 Z" fill="#0780e6" stroke="#0a1018" stroke-width="1.7" stroke-linejoin="round" paint-order="stroke"/><path d="M237.6 443.8 H241.4 Q242.9 443.8 242.9 445.3 V448.9 L239.5 452.1 L236.1 448.9 V445.3 Q236.1 443.8 237.6 443.8 Z" fill="#0780e6" stroke="#0a1018" stroke-width="1.7" stroke-linejoin="round" paint-order="stroke"/><path d="M249.6 443.8 H253.4 Q254.9 443.8 254.9 445.3 V448.9 L251.5 452.1 L248.1 448.9 V445.3 Q248.1 443.8 249.6 443.8 Z" fill="#0780e6" stroke="#0a1018" stroke-width="1.7" stroke-linejoin="round" paint-order="stroke"/><path d="M257.6 443.8 H261.4 Q262.9 443.8 262.9 445.3 V448.9 L259.5 452.1 L256.1 448.9 V445.3 Q256.1 443.8 257.6 443.8 Z" fill="#0780e6" stroke="#0a1018" stroke-width="1.7" stroke-linejoin="round" paint-order="stroke"/><path d="M277.6 443.8 H281.4 Q282.9 443.8 282.9 445.3 V448.9 L279.5 452.1 L276.1 448.9 V445.3 Q276.1 443.8 277.6 443.8 Z" fill="#0780e6" stroke="#0a1018" stroke-width="1.7" stroke-linejoin="round" paint-order="stroke"/><path d="M289.6 443.8 H293.4 Q294.9 443.8 294.9 445.3 V448.9 L291.5 452.1 L288.1 448.9 V445.3 Q288.1 443.8 289.6 443.8 Z" fill="#0780e6" stroke="#0a1018" stroke-width="1.7" stroke-linejoin="round" paint-order="stroke"/><path d="M297.6 443.8 H301.4 Q302.9 443.8 302.9 445.3 V448.9 L299.5 452.1 L296.1 448.9 V445.3 Q296.1 443.8 297.6 443.8 Z" fill="#0780e6" stroke="#0a1018" stroke-width="1.7" stroke-linejoin="round" paint-order="stroke"/><path d="M335.1 443.8 H338.9 Q340.4 443.8 340.4 445.3 V448.9 L337.0 452.1 L333.6 448.9 V445.3 Q333.6 443.8 335.1 443.8 Z" fill="#0780e6" stroke="#0a1018" stroke-width="1.7" stroke-linejoin="round" paint-order="stroke"/><path d="M338.1 443.8 H341.9 Q343.4 443.8 343.4 445.3 V448.9 L340.0 452.1 L336.6 448.9 V445.3 Q336.6 443.8 338.1 443.8 Z" fill="#0780e6" stroke="#0a1018" stroke-width="1.7" stroke-linejoin="round" paint-order="stroke"/><path d="M342.6 443.8 H346.4 Q347.9 443.8 347.9 445.3 V448.9 L344.5 452.1 L341.1 448.9 V445.3 Q341.1 443.8 342.6 443.8 Z" fill="#0780e6" stroke="#0a1018" stroke-width="1.7" stroke-linejoin="round" paint-order="stroke"/><path d="M359.1 443.8 H362.9 Q364.4 443.8 364.4 445.3 V448.9 L361.0 452.1 L357.6 448.9 V445.3 Q357.6 443.8 359.1 443.8 Z" fill="#0780e6" stroke="#0a1018" stroke-width="1.7" stroke-linejoin="round" paint-order="stroke"/><path d="M378.6 443.8 H382.4 Q383.9 443.8 383.9 445.3 V448.9 L380.5 452.1 L377.1 448.9 V445.3 Q377.1 443.8 378.6 443.8 Z" fill="#0780e6" stroke="#0a1018" stroke-width="1.7" stroke-linejoin="round" paint-order="stroke"/><path d="M402.1 443.8 H405.9 Q407.4 443.8 407.4 445.3 V448.9 L404.0 452.1 L400.6 448.9 V445.3 Q400.6 443.8 402.1 443.8 Z" fill="#0780e6" stroke="#0a1018" stroke-width="1.7" stroke-linejoin="round" paint-order="stroke"/><path d="M404.1 443.8 H407.9 Q409.4 443.8 409.4 445.3 V448.9 L406.0 452.1 L402.6 448.9 V445.3 Q402.6 443.8 404.1 443.8 Z" fill="#0780e6" stroke="#0a1018" stroke-width="1.7" stroke-linejoin="round" paint-order="stroke"/><path d="M406.4 443.8 H410.2 Q411.7 443.8 411.7 445.3 V448.9 L408.3 452.1 L404.9 448.9 V445.3 Q404.9 443.8 406.4 443.8 Z" fill="#0780e6" stroke="#0a1018" stroke-width="1.7" stroke-linejoin="round" paint-order="stroke"/><path d="M412.1 443.8 H415.9 Q417.4 443.8 417.4 445.3 V448.9 L414.0 452.1 L410.6 448.9 V445.3 Q410.6 443.8 412.1 443.8 Z" fill="#0780e6" stroke="#0a1018" stroke-width="1.7" stroke-linejoin="round" paint-order="stroke"/><path d="M414.1 443.8 H417.9 Q419.4 443.8 419.4 445.3 V448.9 L416.0 452.1 L412.6 448.9 V445.3 Q412.6 443.8 414.1 443.8 Z" fill="#0780e6" stroke="#0a1018" stroke-width="1.7" stroke-linejoin="round" paint-order="stroke"/><path d="M416.4 443.8 H420.2 Q421.7 443.8 421.7 445.3 V448.9 L418.3 452.1 L414.9 448.9 V445.3 Q414.9 443.8 416.4 443.8 Z" fill="#0780e6" stroke="#0a1018" stroke-width="1.7" stroke-linejoin="round" paint-order="stroke"/><path d="M421.6 443.8 H425.4 Q426.9 443.8 426.9 445.3 V448.9 L423.5 452.1 L420.1 448.9 V445.3 Q420.1 443.8 421.6 443.8 Z" fill="#0780e6" stroke="#0a1018" stroke-width="1.7" stroke-linejoin="round" paint-order="stroke"/><path d="M423.6 443.8 H427.4 Q428.9 443.8 428.9 445.3 V448.9 L425.5 452.1 L422.1 448.9 V445.3 Q422.1 443.8 423.6 443.8 Z" fill="#0780e6" stroke="#0a1018" stroke-width="1.7" stroke-linejoin="round" paint-order="stroke"/><path d="M425.9 443.8 H429.7 Q431.2 443.8 431.2 445.3 V448.9 L427.8 452.1 L424.4 448.9 V445.3 Q424.4 443.8 425.9 443.8 Z" fill="#0780e6" stroke="#0a1018" stroke-width="1.7" stroke-linejoin="round" paint-order="stroke"/><path d="M431.1 443.8 H434.9 Q436.4 443.8 436.4 445.3 V448.9 L433.0 452.1 L429.6 448.9 V445.3 Q429.6 443.8 431.1 443.8 Z" fill="#0780e6" stroke="#0a1018" stroke-width="1.7" stroke-linejoin="round" paint-order="stroke"/><path d="M433.1 443.8 H436.9 Q438.4 443.8 438.4 445.3 V448.9 L435.0 452.1 L431.6 448.9 V445.3 Q431.6 443.8 433.1 443.8 Z" fill="#0780e6" stroke="#0a1018" stroke-width="1.7" stroke-linejoin="round" paint-order="stroke"/><path d="M435.6 443.8 H439.4 Q440.9 443.8 440.9 445.3 V448.9 L437.5 452.1 L434.1 448.9 V445.3 Q434.1 443.8 435.6 443.8 Z" fill="#0780e6" stroke="#0a1018" stroke-width="1.7" stroke-linejoin="round" paint-order="stroke"/><path d="M445.1 443.8 H448.9 Q450.4 443.8 450.4 445.3 V448.9 L447.0 452.1 L443.6 448.9 V445.3 Q443.6 443.8 445.1 443.8 Z" fill="#0780e6" stroke="#0a1018" stroke-width="1.7" stroke-linejoin="round" paint-order="stroke"/><path d="M447.1 443.8 H450.9 Q452.4 443.8 452.4 445.3 V448.9 L449.0 452.1 L445.6 448.9 V445.3 Q445.6 443.8 447.1 443.8 Z" fill="#0780e6" stroke="#0a1018" stroke-width="1.7" stroke-linejoin="round" paint-order="stroke"/><path d="M452.3 443.8 H456.1 Q457.6 443.8 457.6 445.3 V448.9 L454.2 452.1 L450.8 448.9 V445.3 Q450.8 443.8 452.3 443.8 Z" fill="#0780e6" stroke="#0a1018" stroke-width="1.7" stroke-linejoin="round" paint-order="stroke"/><path d="M465.1 443.8 H468.9 Q470.4 443.8 470.4 445.3 V448.9 L467.0 452.1 L463.6 448.9 V445.3 Q463.6 443.8 465.1 443.8 Z" fill="#0780e6" stroke="#0a1018" stroke-width="1.7" stroke-linejoin="round" paint-order="stroke"/><path d="M467.6 443.8 H471.4 Q472.9 443.8 472.9 445.3 V448.9 L469.5 452.1 L466.1 448.9 V445.3 Q466.1 443.8 467.6 443.8 Z" fill="#0780e6" stroke="#0a1018" stroke-width="1.7" stroke-linejoin="round" paint-order="stroke"/><path d="M472.3 443.8 H476.1 Q477.6 443.8 477.6 445.3 V448.9 L474.2 452.1 L470.8 448.9 V445.3 Q470.8 443.8 472.3 443.8 Z" fill="#0780e6" stroke="#0a1018" stroke-width="1.7" stroke-linejoin="round" paint-order="stroke"/><path d="M485.1 443.8 H488.9 Q490.4 443.8 490.4 445.3 V448.9 L487.0 452.1 L483.6 448.9 V445.3 Q483.6 443.8 485.1 443.8 Z" fill="#0780e6" stroke="#0a1018" stroke-width="1.7" stroke-linejoin="round" paint-order="stroke"/><path d="M488.1 443.8 H491.9 Q493.4 443.8 493.4 445.3 V448.9 L490.0 452.1 L486.6 448.9 V445.3 Q486.6 443.8 488.1 443.8 Z" fill="#0780e6" stroke="#0a1018" stroke-width="1.7" stroke-linejoin="round" paint-order="stroke"/><path d="M493.1 443.8 H496.9 Q498.4 443.8 498.4 445.3 V448.9 L495.0 452.1 L491.6 448.9 V445.3 Q491.6 443.8 493.1 443.8 Z" fill="#0780e6" stroke="#0a1018" stroke-width="1.7" stroke-linejoin="round" paint-order="stroke"/><path d="M526.8 443.8 H530.6 Q532.1 443.8 532.1 445.3 V448.9 L528.7 452.1 L525.3 448.9 V445.3 Q525.3 443.8 526.8 443.8 Z" fill="#0780e6" stroke="#0a1018" stroke-width="1.7" stroke-linejoin="round" paint-order="stroke"/><path d="M533.9 443.8 H537.7 Q539.2 443.8 539.2 445.3 V448.9 L535.8 452.1 L532.4 448.9 V445.3 Q532.4 443.8 533.9 443.8 Z" fill="#0780e6" stroke="#0a1018" stroke-width="1.7" stroke-linejoin="round" paint-order="stroke"/><path d="M545.1 443.8 H548.9 Q550.4 443.8 550.4 445.3 V448.9 L547.0 452.1 L543.6 448.9 V445.3 Q543.6 443.8 545.1 443.8 Z" fill="#0780e6" stroke="#0a1018" stroke-width="1.7" stroke-linejoin="round" paint-order="stroke"/><path d="M547.6 443.8 H551.4 Q552.9 443.8 552.9 445.3 V448.9 L549.5 452.1 L546.1 448.9 V445.3 Q546.1 443.8 547.6 443.8 Z" fill="#0780e6" stroke="#0a1018" stroke-width="1.7" stroke-linejoin="round" paint-order="stroke"/><path d="M550.1 443.8 H553.9 Q555.4 443.8 555.4 445.3 V448.9 L552.0 452.1 L548.6 448.9 V445.3 Q548.6 443.8 550.1 443.8 Z" fill="#0780e6" stroke="#0a1018" stroke-width="1.7" stroke-linejoin="round" paint-order="stroke"/><path d="M552.6 443.8 H556.4 Q557.9 443.8 557.9 445.3 V448.9 L554.5 452.1 L551.1 448.9 V445.3 Q551.1 443.8 552.6 443.8 Z" fill="#0780e6" stroke="#0a1018" stroke-width="1.7" stroke-linejoin="round" paint-order="stroke"/><path d="M556.4 443.8 H560.2 Q561.7 443.8 561.7 445.3 V448.9 L558.3 452.1 L554.9 448.9 V445.3 Q554.9 443.8 556.4 443.8 Z" fill="#0780e6" stroke="#0a1018" stroke-width="1.7" stroke-linejoin="round" paint-order="stroke"/><path d="M629.4 443.8 H633.2 Q634.7 443.8 634.7 445.3 V448.9 L631.3 452.1 L627.9 448.9 V445.3 Q627.9 443.8 629.4 443.8 Z" fill="#0780e6" stroke="#0a1018" stroke-width="1.7" stroke-linejoin="round" paint-order="stroke"/><path d="M638.6 443.8 H642.4 Q643.9 443.8 643.9 445.3 V448.9 L640.5 452.1 L637.1 448.9 V445.3 Q637.1 443.8 638.6 443.8 Z" fill="#0780e6" stroke="#0a1018" stroke-width="1.7" stroke-linejoin="round" paint-order="stroke"/><path d="M646.4 443.8 H650.2 Q651.7 443.8 651.7 445.3 V448.9 L648.3 452.1 L644.9 448.9 V445.3 Q644.9 443.8 646.4 443.8 Z" fill="#0780e6" stroke="#0a1018" stroke-width="1.7" stroke-linejoin="round" paint-order="stroke"/><path d="M666.4 443.8 H670.2 Q671.7 443.8 671.7 445.3 V448.9 L668.3 452.1 L664.9 448.9 V445.3 Q664.9 443.8 666.4 443.8 Z" fill="#0780e6" stroke="#0a1018" stroke-width="1.7" stroke-linejoin="round" paint-order="stroke"/><path d="M678.1 443.8 H681.9 Q683.4 443.8 683.4 445.3 V448.9 L680.0 452.1 L676.6 448.9 V445.3 Q676.6 443.8 678.1 443.8 Z" fill="#0780e6" stroke="#0a1018" stroke-width="1.7" stroke-linejoin="round" paint-order="stroke"/><path d="M686.4 443.8 H690.2 Q691.7 443.8 691.7 445.3 V448.9 L688.3 452.1 L684.9 448.9 V445.3 Q684.9 443.8 686.4 443.8 Z" fill="#0780e6" stroke="#0a1018" stroke-width="1.7" stroke-linejoin="round" paint-order="stroke"/><path d="M704.4 443.8 H708.2 Q709.7 443.8 709.7 445.3 V448.9 L706.3 452.1 L702.9 448.9 V445.3 Q702.9 443.8 704.4 443.8 Z" fill="#0780e6" stroke="#0a1018" stroke-width="1.7" stroke-linejoin="round" paint-order="stroke"/><path d="M718.4 443.8 H722.2 Q723.7 443.8 723.7 445.3 V448.9 L720.3 452.1 L716.9 448.9 V445.3 Q716.9 443.8 718.4 443.8 Z" fill="#0780e6" stroke="#0a1018" stroke-width="1.7" stroke-linejoin="round" paint-order="stroke"/><path d="M813.1 443.8 H816.9 Q818.4 443.8 818.4 445.3 V448.9 L815.0 452.1 L811.6 448.9 V445.3 Q811.6 443.8 813.1 443.8 Z" fill="#0780e6" stroke="#0a1018" stroke-width="1.7" stroke-linejoin="round" paint-order="stroke"/><path d="M973.1 443.8 H976.9 Q978.4 443.8 978.4 445.3 V448.9 L975.0 452.1 L971.6 448.9 V445.3 Q971.6 443.8 973.1 443.8 Z" fill="#0780e6" stroke="#0a1018" stroke-width="1.7" stroke-linejoin="round" paint-order="stroke"/><path d="M976.1 443.8 H979.9 Q981.4 443.8 981.4 445.3 V448.9 L978.0 452.1 L974.6 448.9 V445.3 Q974.6 443.8 976.1 443.8 Z" fill="#0780e6" stroke="#0a1018" stroke-width="1.7" stroke-linejoin="round" paint-order="stroke"/><path d="M979.1 443.8 H982.9 Q984.4 443.8 984.4 445.3 V448.9 L981.0 452.1 L977.6 448.9 V445.3 Q977.6 443.8 979.1 443.8 Z" fill="#0780e6" stroke="#0a1018" stroke-width="1.7" stroke-linejoin="round" paint-order="stroke"/><path d="M982.1 443.8 H985.9 Q987.4 443.8 987.4 445.3 V448.9 L984.0 452.1 L980.6 448.9 V445.3 Q980.6 443.8 982.1 443.8 Z" fill="#0780e6" stroke="#0a1018" stroke-width="1.7" stroke-linejoin="round" paint-order="stroke"/><path d="M985.6 443.8 H989.4 Q990.9 443.8 990.9 445.3 V448.9 L987.5 452.1 L984.1 448.9 V445.3 Q984.1 443.8 985.6 443.8 Z" fill="#0780e6" stroke="#0a1018" stroke-width="1.7" stroke-linejoin="round" paint-order="stroke"/><path d="M995.6 443.8 H999.4 Q1000.9 443.8 1000.9 445.3 V448.9 L997.5 452.1 L994.1 448.9 V445.3 Q994.1 443.8 995.6 443.8 Z" fill="#0780e6" stroke="#0a1018" stroke-width="1.7" stroke-linejoin="round" paint-order="stroke"/><path d="M1005.6 443.8 H1009.4 Q1010.9 443.8 1010.9 445.3 V448.9 L1007.5 452.1 L1004.1 448.9 V445.3 Q1004.1 443.8 1005.6 443.8 Z" fill="#0780e6" stroke="#0a1018" stroke-width="1.7" stroke-linejoin="round" paint-order="stroke"/><path d="M1012.1 443.8 H1015.9 Q1017.4 443.8 1017.4 445.3 V448.9 L1014.0 452.1 L1010.6 448.9 V445.3 Q1010.6 443.8 1012.1 443.8 Z" fill="#0780e6" stroke="#0a1018" stroke-width="1.7" stroke-linejoin="round" paint-order="stroke"/><path d="M1023.1 443.8 H1026.9 Q1028.4 443.8 1028.4 445.3 V448.9 L1025.0 452.1 L1021.6 448.9 V445.3 Q1021.6 443.8 1023.1 443.8 Z" fill="#0780e6" stroke="#0a1018" stroke-width="1.7" stroke-linejoin="round" paint-order="stroke"/><path d="M1035.6 443.8 H1039.4 Q1040.9 443.8 1040.9 445.3 V448.9 L1037.5 452.1 L1034.1 448.9 V445.3 Q1034.1 443.8 1035.6 443.8 Z" fill="#0780e6" stroke="#0a1018" stroke-width="1.7" stroke-linejoin="round" paint-order="stroke"/><path d="M1045.6 443.8 H1049.4 Q1050.9 443.8 1050.9 445.3 V448.9 L1047.5 452.1 L1044.1 448.9 V445.3 Q1044.1 443.8 1045.6 443.8 Z" fill="#0780e6" stroke="#0a1018" stroke-width="1.7" stroke-linejoin="round" paint-order="stroke"/><path d="M1065.6 443.8 H1069.4 Q1070.9 443.8 1070.9 445.3 V448.9 L1067.5 452.1 L1064.1 448.9 V445.3 Q1064.1 443.8 1065.6 443.8 Z" fill="#0780e6" stroke="#0a1018" stroke-width="1.7" stroke-linejoin="round" paint-order="stroke"/><path d="M1085.6 443.8 H1089.4 Q1090.9 443.8 1090.9 445.3 V448.9 L1087.5 452.1 L1084.1 448.9 V445.3 Q1084.1 443.8 1085.6 443.8 Z" fill="#0780e6" stroke="#0a1018" stroke-width="1.7" stroke-linejoin="round" paint-order="stroke"/><path d="M1098.6 443.8 H1102.4 Q1103.9 443.8 1103.9 445.3 V448.9 L1100.5 452.1 L1097.1 448.9 V445.3 Q1097.1 443.8 1098.6 443.8 Z" fill="#0780e6" stroke="#0a1018" stroke-width="1.7" stroke-linejoin="round" paint-order="stroke"/><path d="M1115.6 443.8 H1119.4 Q1120.9 443.8 1120.9 445.3 V448.9 L1117.5 452.1 L1114.1 448.9 V445.3 Q1114.1 443.8 1115.6 443.8 Z" fill="#0780e6" stroke="#0a1018" stroke-width="1.7" stroke-linejoin="round" paint-order="stroke"/><path d="M1164.6 443.8 H1168.4 Q1169.9 443.8 1169.9 445.3 V448.9 L1166.5 452.1 L1163.1 448.9 V445.3 Q1163.1 443.8 1164.6 443.8 Z" fill="#0780e6" stroke="#0a1018" stroke-width="1.7" stroke-linejoin="round" paint-order="stroke"/><path d="M1180.1 443.8 H1183.9 Q1185.4 443.8 1185.4 445.3 V448.9 L1182.0 452.1 L1178.6 448.9 V445.3 Q1178.6 443.8 1180.1 443.8 Z" fill="#0780e6" stroke="#0a1018" stroke-width="1.7" stroke-linejoin="round" paint-order="stroke"/><path d="M1183.6 443.8 H1187.4 Q1188.9 443.8 1188.9 445.3 V448.9 L1185.5 452.1 L1182.1 448.9 V445.3 Q1182.1 443.8 1183.6 443.8 Z" fill="#0780e6" stroke="#0a1018" stroke-width="1.7" stroke-linejoin="round" paint-order="stroke"/><path d="M1240.1 443.8 H1243.9 Q1245.4 443.8 1245.4 445.3 V448.9 L1242.0 452.1 L1238.6 448.9 V445.3 Q1238.6 443.8 1240.1 443.8 Z" fill="#0780e6" stroke="#0a1018" stroke-width="1.7" stroke-linejoin="round" paint-order="stroke"/><path d="M1245.1 443.8 H1248.9 Q1250.4 443.8 1250.4 445.3 V448.9 L1247.0 452.1 L1243.6 448.9 V445.3 Q1243.6 443.8 1245.1 443.8 Z" fill="#0780e6" stroke="#0a1018" stroke-width="1.7" stroke-linejoin="round" paint-order="stroke"/><path d="M1279.6 443.8 H1283.4 Q1284.9 443.8 1284.9 445.3 V448.9 L1281.5 452.1 L1278.1 448.9 V445.3 Q1278.1 443.8 1279.6 443.8 Z" fill="#0780e6" stroke="#0a1018" stroke-width="1.7" stroke-linejoin="round" paint-order="stroke"/><path d="M1434.1 443.8 H1437.9 Q1439.4 443.8 1439.4 445.3 V448.9 L1436.0 452.1 L1432.6 448.9 V445.3 Q1432.6 443.8 1434.1 443.8 Z" fill="#0780e6" stroke="#0a1018" stroke-width="1.7" stroke-linejoin="round" paint-order="stroke"/><path d="M1440.6 443.8 H1444.4 Q1445.9 443.8 1445.9 445.3 V448.9 L1442.5 452.1 L1439.1 448.9 V445.3 Q1439.1 443.8 1440.6 443.8 Z" fill="#0780e6" stroke="#0a1018" stroke-width="1.7" stroke-linejoin="round" paint-order="stroke"/></svg>
<div style="left:436px;top:447.6px;width:4.2px;height:11.4px;background:#ffffff;border-radius:1px;box-shadow:0 0 0 0.8px #101012;"></div>
<svg style="left:21px;top:476px;" width="18" height="14" viewBox="0 0 18 14"><g fill="none" stroke="#8a8a8a" stroke-width="1.2"><rect x="1.8" y="1.8" width="14.4" height="10.4"/><g fill="#212126"><rect x="0.6" y="0.6" width="2.4" height="2.4"/><rect x="15" y="0.6" width="2.4" height="2.4"/><rect x="0.6" y="11" width="2.4" height="2.4"/><rect x="15" y="11" width="2.4" height="2.4"/></g></g></svg>
<svg style="left:51px;top:480px;" width="9" height="6" viewBox="0 0 9 6"><path d="M0.7 0.7 L4.5 5 L8.3 0.7" fill="none" stroke="#8a8a8a" stroke-width="1.3"/></svg>
<svg style="left:537px;top:479px;" width="40" height="10" viewBox="0 0 40 10"><g fill="none" stroke="#8a8a8a" stroke-width="1.3"><path d="M6 0.7 L0.9 5 L6 9.3"/><path d="M34 0.7 L39.1 5 L34 9.3"/></g><circle cx="19.5" cy="5" r="4.3" fill="#8a8a8a"/></svg>
<svg style="left:634px;top:475px;" width="21" height="13" viewBox="0 0 21 13"><g fill="#8a8a8a"><rect x="0" y="0" width="2" height="13"/><path d="M11 0 V13 L2.5 6.5 Z M20.5 0 V13 L11.5 6.5 Z"/></g></svg>
<svg style="left:671px;top:475px;" width="11" height="13" viewBox="0 0 11 13"><path d="M11 0 V13 L0 6.5 Z" fill="#8a8a8a"/></svg>
<div style="left:702px;top:475px;width:13px;height:13px;background:#8a8a8a;"></div>
<svg style="left:734px;top:475px;" width="11" height="13" viewBox="0 0 11 13"><path d="M0 0 V13 L11 6.5 Z" fill="#8a8a8a"/></svg>
<svg style="left:762px;top:475px;" width="21" height="13" viewBox="0 0 21 13"><g fill="#8a8a8a"><rect x="19" y="0" width="2" height="13"/><path d="M0.5 0 V13 L9.5 6.5 Z M10 0 V13 L18.5 6.5 Z"/></g></svg>
<svg style="left:801px;top:473px;" width="22" height="16" viewBox="0 0 22 16"><g fill="none" stroke="#8a8a8a" stroke-width="1.5"><path d="M13 4 H6 A4.5 4.5 0 0 0 6 14.5 H16 A4.8 4.8 0 0 0 19 6"/><path d="M10.5 0.8 L14 4 L10.5 7.2"/></g></svg>
<svg style="left:1388.8px;top:475.6px;" width="20" height="14" viewBox="0 0 20 14"><g fill="none" stroke="#8a8a8a" stroke-width="1.3"><path d="M2.6 3.6 V2.2 Q2.6 0.8 4 0.8 H15.6 Q17 0.8 17 2.2 V3.6 M2.6 10 V11.4 Q2.6 12.8 4 12.8 H15.6 Q17 12.8 17 11.4 V10"/></g><path d="M0.2 3.8 L4.2 6.8 L0.2 9.8 Z M19.4 3.8 L15.4 6.8 L19.4 9.8 Z" fill="#8a8a8a"/></svg>
<svg style="left:1429.5px;top:476px;" width="13" height="13" viewBox="0 0 13 13"><g fill="#8a8a8a"><path d="M0 0 V13 L9.5 6.5 Z"/><rect x="10.5" y="0" width="2.2" height="13"/></g></svg>
<svg style="left:1466.5px;top:476px;" width="13" height="13" viewBox="0 0 13 13"><g fill="#8a8a8a"><rect x="0" y="0" width="2.2" height="13"/><path d="M12.7 0 V13 L3.2 6.5 Z"/></g></svg>
<svg style="left:18px;top:517px;" width="26" height="17" viewBox="0 0 26 17"><g fill="none" stroke="#77777b" stroke-width="1.1"><rect x="0.6" y="0.6" width="20" height="3.6" rx="0.8"/><path d="M7 0.6 V4.2 M13.5 0.6 V4.2"/><path d="M1 8 H14 M1 13 H11" stroke-width="3" stroke="#3a3a3e"/><path d="M3 8 H6 M2 13 H5" stroke="#909090" stroke-width="1"/><path d="M15.5 11.5 L18.5 14.5 L24.5 8.5" stroke="#909090" stroke-width="1.8"/></g></svg>
<svg style="left:572px;top:517px;" width="12" height="18" viewBox="0 0 12 18"><path d="M0.5 0.5 L11 10.5 L6.6 11 L9.3 16.5 L7.3 17.4 L4.7 11.9 L0.5 15 Z" fill="#e64b3d"/></svg>
<svg style="left:604px;top:516px;" width="29" height="20" viewBox="0 0 29 20"><g fill="none" stroke="#5e5e62" stroke-width="1.2"><rect x="0.6" y="4.6" width="27.8" height="11.8" rx="1"/><rect x="11" y="0.8" width="7" height="18.4" rx="1.5" fill="#212126" stroke="#7a7a7e"/><path d="M14.5 4.5 V15.5" stroke="#a0a0a0" stroke-width="1.6"/><path d="M7 7.5 L4 10.5 L7 13.5 M22 7.5 L25 10.5 L22 13.5"/></g></svg>
<svg style="left:646px;top:515px;" width="26" height="21" viewBox="0 0 26 21"><g fill="none" stroke="#5e5e62" stroke-width="1.2"><path d="M4 5.5 Q1 5.5 1 8.5 V13.5 Q1 16.5 4 16.5 M22 5.5 Q25 5.5 25 8.5 V13.5 Q25 16.5 22 16.5"/><path d="M13 2 V20" stroke="#909090" stroke-width="1.3"/><path d="M10.5 0.8 H15.5 L13 3.5 Z" fill="#909090" stroke="none"/><path d="M9 8 L6 11 L9 14 M17 8 L20 11 L17 14"/></g></svg>
<svg style="left:687px;top:518px;" width="23" height="15" viewBox="0 0 23 15"><g fill="#77777b"><rect x="0.5" y="0" width="22" height="2" rx="1"/><rect x="0.5" y="13" width="22" height="2" rx="1"/><rect x="0" y="3.5" width="23" height="8" rx="1"/></g><g fill="#212126"><circle cx="5" cy="7.5" r="1.4"/><circle cx="11.5" cy="7.5" r="1.4"/><circle cx="18" cy="7.5" r="1.4"/><rect x="5" y="7" width="13" height="1"/></g></svg>
<div style="left:723px;top:511px;width:1px;height:30px;background:#38383d;"></div>
<svg style="left:735px;top:516px;" width="29" height="20" viewBox="0 0 29 20"><g fill="none" stroke="#5e5e62" stroke-width="1.2"><rect x="7.6" y="0.6" width="13.8" height="10.8" rx="1"/><rect x="0.6" y="5.6" width="4" height="10" rx="0.8"/><rect x="24.4" y="5.6" width="4" height="10" rx="0.8"/><path d="M11 15 L14.5 18.5 L18 15"/></g></svg>
<svg style="left:777px;top:514px;" width="24" height="22" viewBox="0 0 24 22"><g fill="none" stroke="#5e5e62" stroke-width="1.2"><rect x="0.6" y="4.6" width="13.8" height="10.8" rx="1"/><path d="M8 18 V20.5 H20.5 V11 H17.5"/><path d="M17 1.5 Q21.5 1.5 21.5 6.5 M19.5 5 L21.5 7 L23.4 5"/></g></svg>
<svg style="left:815px;top:514px;" width="29" height="23" viewBox="0 0 29 23"><g fill="none" stroke="#5e5e62" stroke-width="1.2"><rect x="12.6" y="0.6" width="14.8" height="15" rx="1"/><rect x="0.6" y="6.6" width="14.8" height="11" rx="1" fill="#212126"/><path d="M8 21 V11.5 M5.5 14 L8 11.5 L10.5 14 M8 21 Q8 22.4 11 22.4 H13"/><path d="M21 4 V12 M18.5 9.5 L21 12 L23.5 9.5"/></g></svg>
<div style="left:854px;top:511px;width:1px;height:30px;background:#38383d;"></div>
<svg style="left:868px;top:516px;" width="22" height="22" viewBox="0 0 22 22"><g transform="rotate(45 11 11)" fill="none" stroke="#ffffff" stroke-width="2.8"><path d="M6.2 6 V11.6 A4.8 4.8 0 0 0 15.8 11.6 V6"/><path d="M6.2 1.4 V3.8 M15.8 1.4 V3.8"/></g></svg>
<svg style="left:910.5px;top:516.5px;" width="20" height="18" viewBox="0 0 20 18"><g fill="none" stroke="#ffffff" stroke-width="2.4"><rect x="1.6" y="8.6" width="10" height="6.2" rx="3.1" transform="rotate(-46 6.6 11.7)"/><rect x="8.4" y="2.8" width="10" height="6.2" rx="3.1" transform="rotate(-46 13.4 5.9)"/></g><path d="M8.2 11.6 L11.6 8" stroke="#212126" stroke-width="1.3"/></svg>
<svg style="left:951px;top:516px;" width="17" height="19" viewBox="0 0 17 19"><g><path d="M4.5 8 V5 A4 4 0 0 1 12.5 5 V8" fill="none" stroke="#6a6a6e" stroke-width="1.5"/><rect x="1" y="8" width="15" height="10" rx="1.5" fill="#6a6a6e"/><path d="M4 13 H13 M6 11 L4 13 L6 15 M11 11 L13 13 L11 15" stroke="#212126" stroke-width="1.2" fill="none"/></g></svg>
<div style="left:985px;top:511px;width:1px;height:30px;background:#38383d;"></div>
<svg style="left:998px;top:519px;" width="12" height="14" viewBox="0 0 12 14"><path d="M1 0.5 H11 V13 L6 9.5 L1 13 Z" fill="#0a84ec"/></svg>
<svg style="left:1020px;top:523px;" width="9" height="6" viewBox="0 0 9 6"><path d="M0.7 0.7 L4.5 5 L8.3 0.7" fill="none" stroke="#8a8a8a" stroke-width="1.3"/></svg>
<svg style="left:1042px;top:519px;" width="12" height="14" viewBox="0 0 12 14"><path d="M2.0 0.5 H10.0 Q11.5 0.5 11.5 2.0 V8.2 L6.0 13.0 L0.5 8.2 V2.0 Q0.5 0.5 2.0 0.5 Z" fill="#0a84ec"/></svg>
<svg style="left:1064px;top:523px;" width="9" height="6" viewBox="0 0 9 6"><path d="M0.7 0.7 L4.5 5 L8.3 0.7" fill="none" stroke="#8a8a8a" stroke-width="1.3"/></svg>
<div style="left:1084px;top:511px;width:1px;height:30px;background:#38383d;"></div>
<svg style="left:1096px;top:516px;" width="29" height="20" viewBox="0 0 29 20"><g fill="none" stroke="#6a6a6e" stroke-width="1.1"><rect x="0.6" y="0.6" width="22" height="9" rx="1"/><path d="M4 0.6 V4 M7.5 0.6 V4 M11 0.6 V4 M14.5 0.6 V4 M18 0.6 V4 M0.6 13.5 H12"/></g><circle cx="20" cy="11.5" r="4.6" fill="#212126" stroke="#77777b" stroke-width="1.5"/><path d="M23.3 15 L27 18.5" stroke="#77777b" stroke-width="2" stroke-linecap="round"/></svg>
<svg style="left:1136px;top:516px;" width="29" height="20" viewBox="0 0 29 20"><g fill="none" stroke="#6a6a6e" stroke-width="1.1"><path d="M0.6 1 H9 M13 1 H26 M11 0 V10 M4 1 V4 M7 1 V4 M15.5 1 V4 M19 1 V4 M22.5 1 V4 M0.6 13.5 H12" stroke-dasharray="0"/><rect x="8.5" y="3" width="5" height="6" stroke-dasharray="1.5 1"/></g><circle cx="20" cy="11.5" r="4.6" fill="#212126" stroke="#77777b" stroke-width="1.5"/><path d="M23.3 15 L27 18.5" stroke="#77777b" stroke-width="2" stroke-linecap="round"/></svg>
<svg style="left:1176px;top:516px;" width="29" height="20" viewBox="0 0 29 20"><g fill="none" stroke="#b0b0b0" stroke-width="1.1"><path d="M0.6 1 H26 M3 1 V4.5 M6.5 1 V4.5 M10 1 V4.5 M13.5 1 V4.5 M17 1 V4.5 M20.5 1 V4.5 M24 1 V4.5 M0.6 13.5 H12"/></g><circle cx="20" cy="11.5" r="4.6" fill="#212126" stroke="#f0f0f0" stroke-width="1.5"/><path d="M23.3 15 L27 18.5" stroke="#f0f0f0" stroke-width="2" stroke-linecap="round"/></svg>
<svg style="left:1219.5px;top:517.5px;" width="15" height="15" viewBox="0 0 15 15"><circle cx="7.5" cy="7.5" r="7.2" fill="#2a2a2f"/><path d="M4 7.5 H11" stroke="#808084" stroke-width="1.8"/></svg>
<div style="left:1246px;top:523.7px;width:86px;height:3px;background:#131315;border-radius:1.5px;"></div>
<div style="left:1303px;top:520px;width:10px;height:10px;background:#929296;border-radius:5px;"></div>
<svg style="left:1344.5px;top:517.5px;" width="15" height="15" viewBox="0 0 15 15"><circle cx="7.5" cy="7.5" r="7.2" fill="#2a2a2f"/><path d="M4 7.5 H11 M7.5 4 V11" stroke="#808084" stroke-width="1.8"/></svg>
<svg style="left:1723.5px;top:518.5px;" width="18" height="14" viewBox="0 0 18 14"><g><path d="M0.5 4.2 H4 L9.2 0.3 V13.7 L4 9.8 H0.5 Z" fill="#ffffff"/><path d="M11.3 4.3 Q13.3 7 11.3 9.7" fill="none" stroke="#c8c8c8" stroke-width="1.5" stroke-linecap="round"/><path d="M13.8 1.8 Q17.6 7 13.8 12.2" fill="none" stroke="#9a9a9a" stroke-width="1.5" stroke-linecap="round"/></g></svg>
<div style="left:1752px;top:524.6px;width:76px;height:3.4px;background:#28a01e;border-radius:1.7px;"></div>
<div style="left:1826.7px;top:521.6px;width:9.4px;height:9.4px;background:#969696;border-radius:5px;"></div>
<div style="left:1843.2px;top:516px;width:39.6px;height:18.7px;background:transparent;border-radius:5.5px;box-shadow:inset 0 0 0 1px #3e3e44;"></div>
<span class="t" id="t55" style="font-size:13px;line-height:21px;height:21px;color:#a8a8a8;left:1850.80px;top:515px;transform-origin:0 50%;letter-spacing:0.200px;">DIM</span>
<div style="left:1893px;top:516px;width:13px;height:19.5px;background:#2e2e34;box-shadow:inset 0 0 0 1px #0c0c0e;"></div>
<div style="left:1899px;top:516px;width:1px;height:19.5px;background:#0c0c0e;"></div>
<div style="left:0px;top:552px;width:232px;height:397px;background:#212126;"></div>
<div style="left:232px;top:552px;width:1677px;height:397px;background:#28282e;"></div>
<div style="left:1909px;top:552px;width:11px;height:410px;background:#2a2a2f;"></div>
<div style="left:1909px;top:552px;width:11px;height:40px;background:#28282e;"></div>
<div style="left:1909px;top:592px;width:1px;height:370px;background:#1c1c20;"></div>
<div style="left:231px;top:552px;width:1px;height:410px;background:#0b0b0d;"></div>
<span class="t" id="t56" style="font-size:22px;line-height:35px;height:35px;color:#d2d2d2;left:59.00px;top:555px;transform-origin:0 50%;letter-spacing:-0.100px;-webkit-text-stroke:1px currentColor;">01:01:11:17</span>
<div style="left:0px;top:591px;width:232px;height:1px;background:#0b0b0d;"></div>
<svg style="left:0px;top:0px;" width="1909" height="860" viewBox="0 0 1909 860"><defs><linearGradient id="mtg" x1="0" y1="0" x2="0" y2="1"><stop offset="0" stop-color="#c0c0c4"/><stop offset="0.5" stop-color="#77777c"/><stop offset="1" stop-color="#303036"/></linearGradient></defs><path d="M238.8 552 V557" stroke="#4a4f54" stroke-width="0.8"/><path d="M245.6 552 V561" stroke="#4d5257" stroke-width="0.8"/><path d="M252.4 552 V557" stroke="#4a4f54" stroke-width="0.8"/><path d="M259.2 552 V561" stroke="#4d5257" stroke-width="0.8"/><path d="M266.0 552 V557" stroke="#4a4f54" stroke-width="0.8"/><path d="M272.8 552 V561" stroke="#4d5257" stroke-width="0.8"/><path d="M279.6 552 V557" stroke="#4a4f54" stroke-width="0.8"/><path d="M286.4 552 V561" stroke="#4d5257" stroke-width="0.8"/><path d="M293.2 552 V557" stroke="#4a4f54" stroke-width="0.8"/><path d="M300.0 552 V561" stroke="#4d5257" stroke-width="0.8"/><path d="M306.8 552 V557" stroke="#4a4f54" stroke-width="0.8"/><path d="M313.6 552 V561" stroke="#4d5257" stroke-width="0.8"/><path d="M320.4 552 V557" stroke="#4a4f54" stroke-width="0.8"/><path d="M327.2 552 V561" stroke="#4d5257" stroke-width="0.8"/><path d="M334.0 552 V557" stroke="#4a4f54" stroke-width="0.8"/><path d="M340.8 552 V561" stroke="#4d5257" stroke-width="0.8"/><path d="M347.6 552 V557" stroke="#4a4f54" stroke-width="0.8"/><path d="M354.4 552 V561" stroke="#4d5257" stroke-width="0.8"/><path d="M361.2 552 V557" stroke="#4a4f54" stroke-width="0.8"/><path d="M368.0 552 V561" stroke="#4d5257" stroke-width="0.8"/><path d="M374.8 552 V557" stroke="#4a4f54" stroke-width="0.8"/><path d="M381.6 552 V561" stroke="#4d5257" stroke-width="0.8"/><path d="M388.4 552 V557" stroke="#4a4f54" stroke-width="0.8"/><path d="M395.2 552 V566" stroke="#5a6066" stroke-width="0.9"/><path d="M402.1 552 V557" stroke="#4a4f54" stroke-width="0.8"/><path d="M408.9 552 V561" stroke="#4d5257" stroke-width="0.8"/><path d="M415.7 552 V557" stroke="#4a4f54" stroke-width="0.8"/><path d="M422.5 552 V561" stroke="#4d5257" stroke-width="0.8"/><path d="M429.3 552 V557" stroke="#4a4f54" stroke-width="0.8"/><path d="M436.1 552 V561" stroke="#4d5257" stroke-width="0.8"/><path d="M442.9 552 V557" stroke="#4a4f54" stroke-width="0.8"/><path d="M449.7 552 V561" stroke="#4d5257" stroke-width="0.8"/><path d="M456.5 552 V557" stroke="#4a4f54" stroke-width="0.8"/><path d="M463.3 552 V561" stroke="#4d5257" stroke-width="0.8"/><path d="M470.1 552 V557" stroke="#4a4f54" stroke-width="0.8"/><path d="M476.9 552 V561" stroke="#4d5257" stroke-width="0.8"/><path d="M483.7 552 V557" stroke="#4a4f54" stroke-width="0.8"/><path d="M490.5 552 V561" stroke="#4d5257" stroke-width="0.8"/><path d="M497.3 552 V557" stroke="#4a4f54" stroke-width="0.8"/><path d="M504.1 552 V561" stroke="#4d5257" stroke-width="0.8"/><path d="M510.9 552 V557" stroke="#4a4f54" stroke-width="0.8"/><path d="M517.7 552 V561" stroke="#4d5257" stroke-width="0.8"/><path d="M524.5 552 V557" stroke="#4a4f54" stroke-width="0.8"/><path d="M531.3 552 V561" stroke="#4d5257" stroke-width="0.8"/><path d="M538.1 552 V557" stroke="#4a4f54" stroke-width="0.8"/><path d="M544.9 552 V561" stroke="#4d5257" stroke-width="0.8"/><path d="M551.7 552 V557" stroke="#4a4f54" stroke-width="0.8"/><rect x="558.2" y="552" width="1.5" height="24" fill="url(#mtg)"/><path d="M559.0 576 V591" stroke="#303036" stroke-width="1.5"/><path d="M559.0 592 V856" stroke="#2f2f35" stroke-width="1.7"/><path d="M565.3 552 V557" stroke="#4a4f54" stroke-width="0.8"/><path d="M572.1 552 V561" stroke="#4d5257" stroke-width="0.8"/><path d="M578.9 552 V557" stroke="#4a4f54" stroke-width="0.8"/><path d="M585.7 552 V561" stroke="#4d5257" stroke-width="0.8"/><path d="M592.5 552 V557" stroke="#4a4f54" stroke-width="0.8"/><path d="M599.3 552 V561" stroke="#4d5257" stroke-width="0.8"/><path d="M606.1 552 V557" stroke="#4a4f54" stroke-width="0.8"/><path d="M612.9 552 V561" stroke="#4d5257" stroke-width="0.8"/><path d="M619.7 552 V557" stroke="#4a4f54" stroke-width="0.8"/><path d="M626.5 552 V561" stroke="#4d5257" stroke-width="0.8"/><path d="M633.3 552 V557" stroke="#4a4f54" stroke-width="0.8"/><path d="M640.1 552 V561" stroke="#4d5257" stroke-width="0.8"/><path d="M646.9 552 V557" stroke="#4a4f54" stroke-width="0.8"/><path d="M653.7 552 V561" stroke="#4d5257" stroke-width="0.8"/><path d="M660.5 552 V557" stroke="#4a4f54" stroke-width="0.8"/><path d="M667.3 552 V561" stroke="#4d5257" stroke-width="0.8"/><path d="M674.1 552 V557" stroke="#4a4f54" stroke-width="0.8"/><path d="M680.9 552 V561" stroke="#4d5257" stroke-width="0.8"/><path d="M687.7 552 V557" stroke="#4a4f54" stroke-width="0.8"/><path d="M694.5 552 V561" stroke="#4d5257" stroke-width="0.8"/><path d="M701.3 552 V557" stroke="#4a4f54" stroke-width="0.8"/><path d="M708.1 552 V561" stroke="#4d5257" stroke-width="0.8"/><path d="M714.9 552 V557" stroke="#4a4f54" stroke-width="0.8"/><path d="M721.8 552 V566" stroke="#5a6066" stroke-width="0.9"/><path d="M728.6 552 V557" stroke="#4a4f54" stroke-width="0.8"/><path d="M735.4 552 V561" stroke="#4d5257" stroke-width="0.8"/><path d="M742.2 552 V557" stroke="#4a4f54" stroke-width="0.8"/><path d="M749.0 552 V561" stroke="#4d5257" stroke-width="0.8"/><path d="M755.8 552 V557" stroke="#4a4f54" stroke-width="0.8"/><path d="M762.6 552 V561" stroke="#4d5257" stroke-width="0.8"/><path d="M769.4 552 V557" stroke="#4a4f54" stroke-width="0.8"/><path d="M776.2 552 V561" stroke="#4d5257" stroke-width="0.8"/><path d="M783.0 552 V557" stroke="#4a4f54" stroke-width="0.8"/><path d="M789.8 552 V561" stroke="#4d5257" stroke-width="0.8"/><path d="M796.6 552 V557" stroke="#4a4f54" stroke-width="0.8"/><path d="M803.4 552 V561" stroke="#4d5257" stroke-width="0.8"/><path d="M810.2 552 V557" stroke="#4a4f54" stroke-width="0.8"/><path d="M817.0 552 V561" stroke="#4d5257" stroke-width="0.8"/><path d="M823.8 552 V557" stroke="#4a4f54" stroke-width="0.8"/><path d="M830.6 552 V561" stroke="#4d5257" stroke-width="0.8"/><path d="M837.4 552 V557" stroke="#4a4f54" stroke-width="0.8"/><path d="M844.2 552 V561" stroke="#4d5257" stroke-width="0.8"/><path d="M851.0 552 V557" stroke="#4a4f54" stroke-width="0.8"/><path d="M857.8 552 V561" stroke="#4d5257" stroke-width="0.8"/><path d="M864.6 552 V557" stroke="#4a4f54" stroke-width="0.8"/><path d="M871.4 552 V561" stroke="#4d5257" stroke-width="0.8"/><path d="M878.2 552 V557" stroke="#4a4f54" stroke-width="0.8"/><rect x="884.7" y="552" width="1.5" height="24" fill="url(#mtg)"/><path d="M885.5 576 V591" stroke="#303036" stroke-width="1.5"/><path d="M885.5 592 V856" stroke="#2f2f35" stroke-width="1.7"/><path d="M891.8 552 V557" stroke="#4a4f54" stroke-width="0.8"/><path d="M898.6 552 V561" stroke="#4d5257" stroke-width="0.8"/><path d="M905.4 552 V557" stroke="#4a4f54" stroke-width="0.8"/><path d="M912.2 552 V561" stroke="#4d5257" stroke-width="0.8"/><path d="M919.0 552 V557" stroke="#4a4f54" stroke-width="0.8"/><path d="M925.8 552 V561" stroke="#4d5257" stroke-width="0.8"/><path d="M932.6 552 V557" stroke="#4a4f54" stroke-width="0.8"/><path d="M939.4 552 V561" stroke="#4d5257" stroke-width="0.8"/><path d="M946.2 552 V557" stroke="#4a4f54" stroke-width="0.8"/><path d="M953.0 552 V561" stroke="#4d5257" stroke-width="0.8"/><path d="M959.8 552 V557" stroke="#4a4f54" stroke-width="0.8"/><path d="M966.6 552 V561" stroke="#4d5257" stroke-width="0.8"/><path d="M973.4 552 V557" stroke="#4a4f54" stroke-width="0.8"/><path d="M980.2 552 V561" stroke="#4d5257" stroke-width="0.8"/><path d="M987.0 552 V557" stroke="#4a4f54" stroke-width="0.8"/><path d="M993.8 552 V561" stroke="#4d5257" stroke-width="0.8"/><path d="M1000.6 552 V557" stroke="#4a4f54" stroke-width="0.8"/><path d="M1007.4 552 V561" stroke="#4d5257" stroke-width="0.8"/><path d="M1014.2 552 V557" stroke="#4a4f54" stroke-width="0.8"/><path d="M1021.0 552 V561" stroke="#4d5257" stroke-width="0.8"/><path d="M1027.8 552 V557" stroke="#4a4f54" stroke-width="0.8"/><path d="M1034.6 552 V561" stroke="#4d5257" stroke-width="0.8"/><path d="M1041.4 552 V557" stroke="#4a4f54" stroke-width="0.8"/><path d="M1048.2 552 V566" stroke="#5a6066" stroke-width="0.9"/><path d="M1055.1 552 V557" stroke="#4a4f54" stroke-width="0.8"/><path d="M1061.9 552 V561" stroke="#4d5257" stroke-width="0.8"/><path d="M1068.7 552 V557" stroke="#4a4f54" stroke-width="0.8"/><path d="M1075.5 552 V561" stroke="#4d5257" stroke-width="0.8"/><path d="M1082.3 552 V557" stroke="#4a4f54" stroke-width="0.8"/><path d="M1089.1 552 V561" stroke="#4d5257" stroke-width="0.8"/><path d="M1095.9 552 V557" stroke="#4a4f54" stroke-width="0.8"/><path d="M1102.7 552 V561" stroke="#4d5257" stroke-width="0.8"/><path d="M1109.5 552 V557" stroke="#4a4f54" stroke-width="0.8"/><path d="M1116.3 552 V561" stroke="#4d5257" stroke-width="0.8"/><path d="M1123.1 552 V557" stroke="#4a4f54" stroke-width="0.8"/><path d="M1129.9 552 V561" stroke="#4d5257" stroke-width="0.8"/><path d="M1136.7 552 V557" stroke="#4a4f54" stroke-width="0.8"/><path d="M1143.5 552 V561" stroke="#4d5257" stroke-width="0.8"/><path d="M1150.3 552 V557" stroke="#4a4f54" stroke-width="0.8"/><path d="M1157.1 552 V561" stroke="#4d5257" stroke-width="0.8"/><path d="M1163.9 552 V557" stroke="#4a4f54" stroke-width="0.8"/><path d="M1170.7 552 V561" stroke="#4d5257" stroke-width="0.8"/><path d="M1177.5 552 V557" stroke="#4a4f54" stroke-width="0.8"/><path d="M1184.3 552 V561" stroke="#4d5257" stroke-width="0.8"/><path d="M1191.1 552 V557" stroke="#4a4f54" stroke-width="0.8"/><path d="M1197.9 552 V561" stroke="#4d5257" stroke-width="0.8"/><path d="M1204.7 552 V557" stroke="#4a4f54" stroke-width="0.8"/><rect x="1211.2" y="552" width="1.5" height="24" fill="url(#mtg)"/><path d="M1212.0 576 V591" stroke="#303036" stroke-width="1.5"/><path d="M1212.0 592 V856" stroke="#2f2f35" stroke-width="1.7"/><path d="M1218.3 552 V557" stroke="#4a4f54" stroke-width="0.8"/><path d="M1225.1 552 V561" stroke="#4d5257" stroke-width="0.8"/><path d="M1231.9 552 V557" stroke="#4a4f54" stroke-width="0.8"/><path d="M1238.7 552 V561" stroke="#4d5257" stroke-width="0.8"/><path d="M1245.5 552 V557" stroke="#4a4f54" stroke-width="0.8"/><path d="M1252.3 552 V561" stroke="#4d5257" stroke-width="0.8"/><path d="M1259.1 552 V557" stroke="#4a4f54" stroke-width="0.8"/><path d="M1265.9 552 V561" stroke="#4d5257" stroke-width="0.8"/><path d="M1272.7 552 V557" stroke="#4a4f54" stroke-width="0.8"/><path d="M1279.5 552 V561" stroke="#4d5257" stroke-width="0.8"/><path d="M1286.3 552 V557" stroke="#4a4f54" stroke-width="0.8"/><path d="M1293.1 552 V561" stroke="#4d5257" stroke-width="0.8"/><path d="M1299.9 552 V557" stroke="#4a4f54" stroke-width="0.8"/><path d="M1306.7 552 V561" stroke="#4d5257" stroke-width="0.8"/><path d="M1313.5 552 V557" stroke="#4a4f54" stroke-width="0.8"/><path d="M1320.3 552 V561" stroke="#4d5257" stroke-width="0.8"/><path d="M1327.1 552 V557" stroke="#4a4f54" stroke-width="0.8"/><path d="M1333.9 552 V561" stroke="#4d5257" stroke-width="0.8"/><path d="M1340.7 552 V557" stroke="#4a4f54" stroke-width="0.8"/><path d="M1347.5 552 V561" stroke="#4d5257" stroke-width="0.8"/><path d="M1354.3 552 V557" stroke="#4a4f54" stroke-width="0.8"/><path d="M1361.1 552 V561" stroke="#4d5257" stroke-width="0.8"/><path d="M1367.9 552 V557" stroke="#4a4f54" stroke-width="0.8"/><path d="M1374.8 552 V566" stroke="#5a6066" stroke-width="0.9"/><path d="M1381.6 552 V557" stroke="#4a4f54" stroke-width="0.8"/><path d="M1388.4 552 V561" stroke="#4d5257" stroke-width="0.8"/><path d="M1395.2 552 V557" stroke="#4a4f54" stroke-width="0.8"/><path d="M1402.0 552 V561" stroke="#4d5257" stroke-width="0.8"/><path d="M1408.8 552 V557" stroke="#4a4f54" stroke-width="0.8"/><path d="M1415.6 552 V561" stroke="#4d5257" stroke-width="0.8"/><path d="M1422.4 552 V557" stroke="#4a4f54" stroke-width="0.8"/><path d="M1429.2 552 V561" stroke="#4d5257" stroke-width="0.8"/><path d="M1436.0 552 V557" stroke="#4a4f54" stroke-width="0.8"/><path d="M1442.8 552 V561" stroke="#4d5257" stroke-width="0.8"/><path d="M1449.6 552 V557" stroke="#4a4f54" stroke-width="0.8"/><path d="M1456.4 552 V561" stroke="#4d5257" stroke-width="0.8"/><path d="M1463.2 552 V557" stroke="#4a4f54" stroke-width="0.8"/><path d="M1470.0 552 V561" stroke="#4d5257" stroke-width="0.8"/><path d="M1476.8 552 V557" stroke="#4a4f54" stroke-width="0.8"/><path d="M1483.6 552 V561" stroke="#4d5257" stroke-width="0.8"/><path d="M1490.4 552 V557" stroke="#4a4f54" stroke-width="0.8"/><path d="M1497.2 552 V561" stroke="#4d5257" stroke-width="0.8"/><path d="M1504.0 552 V557" stroke="#4a4f54" stroke-width="0.8"/><path d="M1510.8 552 V561" stroke="#4d5257" stroke-width="0.8"/><path d="M1517.6 552 V557" stroke="#4a4f54" stroke-width="0.8"/><path d="M1524.4 552 V561" stroke="#4d5257" stroke-width="0.8"/><path d="M1531.2 552 V557" stroke="#4a4f54" stroke-width="0.8"/><rect x="1537.7" y="552" width="1.5" height="24" fill="url(#mtg)"/><path d="M1538.5 576 V591" stroke="#303036" stroke-width="1.5"/><path d="M1538.5 592 V856" stroke="#2f2f35" stroke-width="1.7"/><path d="M1544.8 552 V557" stroke="#4a4f54" stroke-width="0.8"/><path d="M1551.6 552 V561" stroke="#4d5257" stroke-width="0.8"/><path d="M1558.4 552 V557" stroke="#4a4f54" stroke-width="0.8"/><path d="M1565.2 552 V561" stroke="#4d5257" stroke-width="0.8"/><path d="M1572.0 552 V557" stroke="#4a4f54" stroke-width="0.8"/><path d="M1578.8 552 V561" stroke="#4d5257" stroke-width="0.8"/><path d="M1585.6 552 V557" stroke="#4a4f54" stroke-width="0.8"/><path d="M1592.4 552 V561" stroke="#4d5257" stroke-width="0.8"/><path d="M1599.2 552 V557" stroke="#4a4f54" stroke-width="0.8"/><path d="M1606.0 552 V561" stroke="#4d5257" stroke-width="0.8"/><path d="M1612.8 552 V557" stroke="#4a4f54" stroke-width="0.8"/><path d="M1619.6 552 V561" stroke="#4d5257" stroke-width="0.8"/><path d="M1626.4 552 V557" stroke="#4a4f54" stroke-width="0.8"/><path d="M1633.2 552 V561" stroke="#4d5257" stroke-width="0.8"/><path d="M1640.0 552 V557" stroke="#4a4f54" stroke-width="0.8"/><path d="M1646.8 552 V561" stroke="#4d5257" stroke-width="0.8"/><path d="M1653.6 552 V557" stroke="#4a4f54" stroke-width="0.8"/><path d="M1660.4 552 V561" stroke="#4d5257" stroke-width="0.8"/><path d="M1667.2 552 V557" stroke="#4a4f54" stroke-width="0.8"/><path d="M1674.0 552 V561" stroke="#4d5257" stroke-width="0.8"/><path d="M1680.8 552 V557" stroke="#4a4f54" stroke-width="0.8"/><path d="M1687.6 552 V561" stroke="#4d5257" stroke-width="0.8"/><path d="M1694.4 552 V557" stroke="#4a4f54" stroke-width="0.8"/><path d="M1701.2 552 V566" stroke="#5a6066" stroke-width="0.9"/><path d="M1708.1 552 V557" stroke="#4a4f54" stroke-width="0.8"/><path d="M1714.9 552 V561" stroke="#4d5257" stroke-width="0.8"/><path d="M1721.7 552 V557" stroke="#4a4f54" stroke-width="0.8"/><path d="M1728.5 552 V561" stroke="#4d5257" stroke-width="0.8"/><path d="M1735.3 552 V557" stroke="#4a4f54" stroke-width="0.8"/><path d="M1742.1 552 V561" stroke="#4d5257" stroke-width="0.8"/><path d="M1748.9 552 V557" stroke="#4a4f54" stroke-width="0.8"/><path d="M1755.7 552 V561" stroke="#4d5257" stroke-width="0.8"/><path d="M1762.5 552 V557" stroke="#4a4f54" stroke-width="0.8"/><path d="M1769.3 552 V561" stroke="#4d5257" stroke-width="0.8"/><path d="M1776.1 552 V557" stroke="#4a4f54" stroke-width="0.8"/><path d="M1782.9 552 V561" stroke="#4d5257" stroke-width="0.8"/><path d="M1789.7 552 V557" stroke="#4a4f54" stroke-width="0.8"/><path d="M1796.5 552 V561" stroke="#4d5257" stroke-width="0.8"/><path d="M1803.3 552 V557" stroke="#4a4f54" stroke-width="0.8"/><path d="M1810.1 552 V561" stroke="#4d5257" stroke-width="0.8"/><path d="M1816.9 552 V557" stroke="#4a4f54" stroke-width="0.8"/><path d="M1823.7 552 V561" stroke="#4d5257" stroke-width="0.8"/><path d="M1830.5 552 V557" stroke="#4a4f54" stroke-width="0.8"/><path d="M1837.3 552 V561" stroke="#4d5257" stroke-width="0.8"/><path d="M1844.1 552 V557" stroke="#4a4f54" stroke-width="0.8"/><path d="M1850.9 552 V561" stroke="#4d5257" stroke-width="0.8"/><path d="M1857.7 552 V557" stroke="#4a4f54" stroke-width="0.8"/><rect x="1864.2" y="552" width="1.5" height="24" fill="url(#mtg)"/><path d="M1865.0 576 V591" stroke="#303036" stroke-width="1.5"/><path d="M1865.0 592 V856" stroke="#2f2f35" stroke-width="1.7"/><path d="M1871.3 552 V557" stroke="#4a4f54" stroke-width="0.8"/><path d="M1878.1 552 V561" stroke="#4d5257" stroke-width="0.8"/><path d="M1884.9 552 V557" stroke="#4a4f54" stroke-width="0.8"/><path d="M1891.7 552 V561" stroke="#4d5257" stroke-width="0.8"/><path d="M1898.5 552 V557" stroke="#4a4f54" stroke-width="0.8"/><path d="M1905.3 552 V561" stroke="#4d5257" stroke-width="0.8"/></svg>
<span class="t" id="t57" style="font-size:11.5px;line-height:18px;height:18px;color:#a2a2a2;left:238.00px;top:562px;transform-origin:0 50%;letter-spacing:-0.350px;">01:01:04:00</span>
<span class="t" id="t58" style="font-size:11.5px;line-height:18px;height:18px;color:#a2a2a2;left:564.50px;top:562px;transform-origin:0 50%;letter-spacing:-0.350px;">01:01:08:00</span>
<span class="t" id="t59" style="font-size:11.5px;line-height:18px;height:18px;color:#a2a2a2;left:891.00px;top:562px;transform-origin:0 50%;letter-spacing:-0.350px;">01:01:12:00</span>
<span class="t" id="t60" style="font-size:11.5px;line-height:18px;height:18px;color:#a2a2a2;left:1217.50px;top:562px;transform-origin:0 50%;letter-spacing:-0.350px;">01:01:16:00</span>
<span class="t" id="t61" style="font-size:11.5px;line-height:18px;height:18px;color:#a2a2a2;left:1544.00px;top:562px;transform-origin:0 50%;letter-spacing:-0.350px;">01:01:20:00</span>
<div style="left:1860px;top:560px;width:49px;height:24px;overflow:hidden;"><span class="t" style="left:10.5px;top:2px;font-size:11.5px;line-height:18px;color:#a2a2a2;letter-spacing:-0.2px;">01:01:24:00</span></div>
<div style="left:232px;top:605px;width:1677px;height:1px;background:#303036;"></div>
<div style="left:0px;top:605px;width:231px;height:1px;background:#0b0b0d;"></div>
<div style="left:0px;top:644px;width:231px;height:1px;background:#0b0b0d;"></div>
<div style="left:232px;top:644px;width:1677px;height:1px;background:#303036;"></div>
<div style="left:0px;top:683px;width:231px;height:1px;background:#0b0b0d;"></div>
<div style="left:232px;top:683px;width:1677px;height:1px;background:#303036;"></div>
<div style="left:0px;top:722px;width:231px;height:1px;background:#0b0b0d;"></div>
<div style="left:232px;top:722px;width:1677px;height:1px;background:#303036;"></div>
<div style="left:0px;top:761px;width:231px;height:1px;background:#0b0b0d;"></div>
<div style="left:232px;top:761px;width:1677px;height:1px;background:#303036;"></div>
<div style="left:0px;top:800px;width:231px;height:1px;background:#0b0b0d;"></div>
<div style="left:232px;top:800px;width:1677px;height:1px;background:#303036;"></div>
<div style="left:0px;top:839px;width:231px;height:1px;background:#0b0b0d;"></div>
<div style="left:232px;top:839px;width:1677px;height:1px;background:#303036;"></div>
<div style="left:0;top:592px;width:231px;height:264px;overflow:hidden;">
<div style="left:0px;top:0px;width:3px;height:264px;background:#4679a8;"></div>
<div style="left:3px;top:0px;width:1px;height:264px;background:#0b0b0d;"></div>
<div style="left:19px;top:0px;width:1px;height:264px;background:#0b0b0d;"></div>
<div style="left:63px;top:0px;width:1px;height:264px;background:#0b0b0d;"></div>
<svg style="left:79px;top:25.5px;" width="13" height="14" viewBox="0 0 13 14"><g><path d="M1.6 5 V4 A4.4 3.4 0 0 1 10.4 4 V4.6" fill="none" stroke="#48484c" stroke-width="1.3"/><rect x="0" y="4.6" width="12" height="8.2" rx="1.4" fill="#48484c"/></g></svg>
<svg style="left:104px;top:25px;" width="18" height="14" viewBox="0 0 18 14"><g><rect x="0.8" y="0.8" width="15.6" height="11.6" rx="1.8" fill="none" stroke="#ffffff" stroke-width="1.6"/><path d="M6.6 4 L4.1 6.6 L6.6 9.2 M10.6 4 L13.1 6.6 L10.6 9.2" fill="none" stroke="#ffffff" stroke-width="1.2"/></g></svg>
<svg style="left:131px;top:25px;" width="18" height="14" viewBox="0 0 18 14"><g><rect x="0.7" y="0.7" width="16.6" height="11.8" rx="1.6" fill="#3a3a3f" stroke="#a6a6a6" stroke-width="1.3"/><g fill="#c8c8c8"><rect x="2.4" y="2.5" width="1.7" height="1.6"/><rect x="2.4" y="5.8" width="1.7" height="1.6"/><rect x="2.4" y="9.1" width="1.7" height="1.6"/><rect x="13.9" y="2.5" width="1.7" height="1.6"/><rect x="13.9" y="5.8" width="1.7" height="1.6"/><rect x="13.9" y="9.1" width="1.7" height="1.6"/></g></g></svg>
<svg style="left:79px;top:64.5px;" width="13" height="14" viewBox="0 0 13 14"><g><path d="M1.6 5 V4 A4.4 3.4 0 0 1 10.4 4 V4.6" fill="none" stroke="#48484c" stroke-width="1.3"/><rect x="0" y="4.6" width="12" height="8.2" rx="1.4" fill="#48484c"/></g></svg>
<svg style="left:104px;top:64px;" width="18" height="14" viewBox="0 0 18 14"><g><rect x="0.8" y="0.8" width="15.6" height="11.6" rx="1.8" fill="none" stroke="#ffffff" stroke-width="1.6"/><path d="M6.6 4 L4.1 6.6 L6.6 9.2 M10.6 4 L13.1 6.6 L10.6 9.2" fill="none" stroke="#ffffff" stroke-width="1.2"/></g></svg>
<svg style="left:131px;top:64px;" width="18" height="14" viewBox="0 0 18 14"><g><rect x="0.7" y="0.7" width="16.6" height="11.8" rx="1.6" fill="#3a3a3f" stroke="#a6a6a6" stroke-width="1.3"/><g fill="#c8c8c8"><rect x="2.4" y="2.5" width="1.7" height="1.6"/><rect x="2.4" y="5.8" width="1.7" height="1.6"/><rect x="2.4" y="9.1" width="1.7" height="1.6"/><rect x="13.9" y="2.5" width="1.7" height="1.6"/><rect x="13.9" y="5.8" width="1.7" height="1.6"/><rect x="13.9" y="9.1" width="1.7" height="1.6"/></g></g></svg>
<svg style="left:79px;top:103.5px;" width="13" height="14" viewBox="0 0 13 14"><g><path d="M1.6 5 V4 A4.4 3.4 0 0 1 10.4 4 V4.6" fill="none" stroke="#48484c" stroke-width="1.3"/><rect x="0" y="4.6" width="12" height="8.2" rx="1.4" fill="#48484c"/></g></svg>
<svg style="left:104px;top:103px;" width="18" height="14" viewBox="0 0 18 14"><g><rect x="0.8" y="0.8" width="15.6" height="11.6" rx="1.8" fill="none" stroke="#ffffff" stroke-width="1.6"/><path d="M6.6 4 L4.1 6.6 L6.6 9.2 M10.6 4 L13.1 6.6 L10.6 9.2" fill="none" stroke="#ffffff" stroke-width="1.2"/></g></svg>
<svg style="left:131px;top:103px;" width="18" height="14" viewBox="0 0 18 14"><g><rect x="0.7" y="0.7" width="16.6" height="11.8" rx="1.6" fill="#3a3a3f" stroke="#a6a6a6" stroke-width="1.3"/><g fill="#c8c8c8"><rect x="2.4" y="2.5" width="1.7" height="1.6"/><rect x="2.4" y="5.8" width="1.7" height="1.6"/><rect x="2.4" y="9.1" width="1.7" height="1.6"/><rect x="13.9" y="2.5" width="1.7" height="1.6"/><rect x="13.9" y="5.8" width="1.7" height="1.6"/><rect x="13.9" y="9.1" width="1.7" height="1.6"/></g></g></svg>
<svg style="left:79px;top:142.5px;" width="13" height="14" viewBox="0 0 13 14"><g><path d="M1.6 5 V4 A4.4 3.4 0 0 1 10.4 4 V4.6" fill="none" stroke="#48484c" stroke-width="1.3"/><rect x="0" y="4.6" width="12" height="8.2" rx="1.4" fill="#48484c"/></g></svg>
<svg style="left:104px;top:142px;" width="18" height="14" viewBox="0 0 18 14"><g><rect x="0.8" y="0.8" width="15.6" height="11.6" rx="1.8" fill="none" stroke="#ffffff" stroke-width="1.6"/><path d="M6.6 4 L4.1 6.6 L6.6 9.2 M10.6 4 L13.1 6.6 L10.6 9.2" fill="none" stroke="#ffffff" stroke-width="1.2"/></g></svg>
<svg style="left:131px;top:142px;" width="18" height="14" viewBox="0 0 18 14"><g><rect x="0.7" y="0.7" width="16.6" height="11.8" rx="1.6" fill="#3a3a3f" stroke="#a6a6a6" stroke-width="1.3"/><g fill="#c8c8c8"><rect x="2.4" y="2.5" width="1.7" height="1.6"/><rect x="2.4" y="5.8" width="1.7" height="1.6"/><rect x="2.4" y="9.1" width="1.7" height="1.6"/><rect x="13.9" y="2.5" width="1.7" height="1.6"/><rect x="13.9" y="5.8" width="1.7" height="1.6"/><rect x="13.9" y="9.1" width="1.7" height="1.6"/></g></g></svg>
<svg style="left:79px;top:181.5px;" width="13" height="14" viewBox="0 0 13 14"><g><path d="M1.6 5 V4 A4.4 3.4 0 0 1 10.4 4 V4.6" fill="none" stroke="#48484c" stroke-width="1.3"/><rect x="0" y="4.6" width="12" height="8.2" rx="1.4" fill="#48484c"/></g></svg>
<svg style="left:104px;top:181px;" width="18" height="14" viewBox="0 0 18 14"><g><rect x="0.8" y="0.8" width="15.6" height="11.6" rx="1.8" fill="none" stroke="#ffffff" stroke-width="1.6"/><path d="M6.6 4 L4.1 6.6 L6.6 9.2 M10.6 4 L13.1 6.6 L10.6 9.2" fill="none" stroke="#ffffff" stroke-width="1.2"/></g></svg>
<svg style="left:131px;top:181px;" width="18" height="14" viewBox="0 0 18 14"><g><rect x="0.7" y="0.7" width="16.6" height="11.8" rx="1.6" fill="#3a3a3f" stroke="#a6a6a6" stroke-width="1.3"/><g fill="#c8c8c8"><rect x="2.4" y="2.5" width="1.7" height="1.6"/><rect x="2.4" y="5.8" width="1.7" height="1.6"/><rect x="2.4" y="9.1" width="1.7" height="1.6"/><rect x="13.9" y="2.5" width="1.7" height="1.6"/><rect x="13.9" y="5.8" width="1.7" height="1.6"/><rect x="13.9" y="9.1" width="1.7" height="1.6"/></g></g></svg>
<svg style="left:79px;top:220.5px;" width="13" height="14" viewBox="0 0 13 14"><g><path d="M1.6 5 V4 A4.4 3.4 0 0 1 10.4 4 V4.6" fill="none" stroke="#48484c" stroke-width="1.3"/><rect x="0" y="4.6" width="12" height="8.2" rx="1.4" fill="#48484c"/></g></svg>
<svg style="left:104px;top:220px;" width="18" height="14" viewBox="0 0 18 14"><g><rect x="0.8" y="0.8" width="15.6" height="11.6" rx="1.8" fill="none" stroke="#ffffff" stroke-width="1.6"/><path d="M6.6 4 L4.1 6.6 L6.6 9.2 M10.6 4 L13.1 6.6 L10.6 9.2" fill="none" stroke="#ffffff" stroke-width="1.2"/></g></svg>
<svg style="left:131px;top:220px;" width="18" height="14" viewBox="0 0 18 14"><g><rect x="0.7" y="0.7" width="16.6" height="11.8" rx="1.6" fill="#3a3a3f" stroke="#a6a6a6" stroke-width="1.3"/><g fill="#c8c8c8"><rect x="2.4" y="2.5" width="1.7" height="1.6"/><rect x="2.4" y="5.8" width="1.7" height="1.6"/><rect x="2.4" y="9.1" width="1.7" height="1.6"/><rect x="13.9" y="2.5" width="1.7" height="1.6"/><rect x="13.9" y="5.8" width="1.7" height="1.6"/><rect x="13.9" y="9.1" width="1.7" height="1.6"/></g></g></svg>
<svg style="left:79px;top:259.5px;" width="13" height="14" viewBox="0 0 13 14"><g><path d="M1.6 5 V4 A4.4 3.4 0 0 1 10.4 4 V4.6" fill="none" stroke="#48484c" stroke-width="1.3"/><rect x="0" y="4.6" width="12" height="8.2" rx="1.4" fill="#48484c"/></g></svg>
<svg style="left:104px;top:259px;" width="18" height="14" viewBox="0 0 18 14"><g><rect x="0.8" y="0.8" width="15.6" height="11.6" rx="1.8" fill="none" stroke="#ffffff" stroke-width="1.6"/><path d="M6.6 4 L4.1 6.6 L6.6 9.2 M10.6 4 L13.1 6.6 L10.6 9.2" fill="none" stroke="#ffffff" stroke-width="1.2"/></g></svg>
<svg style="left:131px;top:259px;" width="18" height="14" viewBox="0 0 18 14"><g><rect x="0.7" y="0.7" width="16.6" height="11.8" rx="1.6" fill="#3a3a3f" stroke="#a6a6a6" stroke-width="1.3"/><g fill="#c8c8c8"><rect x="2.4" y="2.5" width="1.7" height="1.6"/><rect x="2.4" y="5.8" width="1.7" height="1.6"/><rect x="2.4" y="9.1" width="1.7" height="1.6"/><rect x="13.9" y="2.5" width="1.7" height="1.6"/><rect x="13.9" y="5.8" width="1.7" height="1.6"/><rect x="13.9" y="9.1" width="1.7" height="1.6"/></g></g></svg>
</div>
<div style="left:0;top:592px;width:231px;height:264px;overflow:hidden;">
<!--labels-->
</div>
<span class="t" id="t62" style="font-size:13.5px;line-height:22px;height:22px;color:#ffffff;font-weight:700;left:36.00px;top:615px;transform-origin:0 50%;letter-spacing:-0.500px;">V7</span>
<span class="t" id="t63" style="font-size:13.5px;line-height:22px;height:22px;color:#ffffff;font-weight:700;left:36.00px;top:654px;transform-origin:0 50%;letter-spacing:-0.500px;">V6</span>
<span class="t" id="t64" style="font-size:13.5px;line-height:22px;height:22px;color:#ffffff;font-weight:700;left:36.00px;top:693px;transform-origin:0 50%;letter-spacing:-0.500px;">V5</span>
<span class="t" id="t65" style="font-size:13.5px;line-height:22px;height:22px;color:#ffffff;font-weight:700;left:36.00px;top:732px;transform-origin:0 50%;letter-spacing:-1.500px;">V4</span>
<span class="t" id="t66" style="font-size:13.5px;line-height:22px;height:22px;color:#ffffff;font-weight:700;left:36.00px;top:771px;transform-origin:0 50%;letter-spacing:-0.500px;">V3</span>
<span class="t" id="t67" style="font-size:13.5px;line-height:22px;height:22px;color:#ffffff;font-weight:700;left:36.00px;top:810px;transform-origin:0 50%;letter-spacing:-0.500px;">V2</span>
<div style="left:30px;top:850px;width:30px;height:6px;overflow:hidden;">
<span class="t" style="left:6px;top:-0.5px;font-size:14px;line-height:20px;font-weight:700;color:#fff;">V1</span></div>
<div style="left:232px;top:607px;width:599px;height:36px;background:#3d3d42;"></div>
<div style="left:831px;top:607px;width:49.7px;height:36px;background:#bab098;border-radius:3.5px;box-shadow:0 0 0 0.7px #111113;"></div>
<span class="t" id="t68" style="font-size:10.5px;line-height:17px;height:17px;color:#fff;font-weight:700;left:835.50px;top:626px;transform-origin:0 50%;transform:scaleX(1.0238);">歌詞</span>
<div style="left:1531.3px;top:607px;width:53.4px;height:36px;background:#bab098;border-radius:3.5px;box-shadow:0 0 0 0.7px #111113;"></div>
<svg style="left:1540.1px;top:624.3px;" width="14" height="14" viewBox="0 0 14 14"><g fill="#ffffff"><path d="M9.9 0.10000000000000009 L10.65 2.75 L13.3 3.5 L10.65 4.25 L9.9 6.9 L9.15 4.25 L6.5 3.5 L9.15 2.75 Z"/><path d="M3.4 2.3 L4.15 4.85 L6.699999999999999 5.6 L4.15 6.35 L3.4 8.899999999999999 L2.65 6.35 L0.10000000000000009 5.6 L2.65 4.85 Z"/><path d="M8.0 7.200000000000001 L8.75 9.55 L11.1 10.3 L8.75 11.05 L8.0 13.4 L7.25 11.05 L4.9 10.3 L7.25 9.55 Z"/></g></svg>
<span class="t" id="t69" style="font-size:10.5px;line-height:17px;height:17px;color:#fff;font-weight:700;left:1560.30px;top:626px;transform-origin:0 50%;">歌...</span>
<div style="left:232px;top:646px;width:179px;height:36px;background:#bab098;border-radius:0 3.5px 3.5px 0;box-shadow:0 0 0 0.7px #111113;"></div>
<svg style="left:242.3px;top:663.3px;" width="14" height="14" viewBox="0 0 14 14"><g fill="#ffffff"><path d="M9.9 0.10000000000000009 L10.65 2.75 L13.3 3.5 L10.65 4.25 L9.9 6.9 L9.15 4.25 L6.5 3.5 L9.15 2.75 Z"/><path d="M3.4 2.3 L4.15 4.85 L6.699999999999999 5.6 L4.15 6.35 L3.4 8.899999999999999 L2.65 6.35 L0.10000000000000009 5.6 L2.65 4.85 Z"/><path d="M8.0 7.200000000000001 L8.75 9.55 L11.1 10.3 L8.75 11.05 L8.0 13.4 L7.25 11.05 L4.9 10.3 L7.25 9.55 Z"/></g></svg>
<span class="t" id="t70" style="font-size:10.5px;line-height:17px;height:17px;color:#fff;font-weight:700;left:261.00px;top:665px;transform-origin:0 50%;transform:scaleX(1.0238);">歌詞</span>
<div style="left:691px;top:646px;width:189.7px;height:36px;background:#bab098;border-radius:3.5px;box-shadow:0 0 0 0.7px #111113;"></div>
<svg style="left:699.8px;top:663.3px;" width="14" height="14" viewBox="0 0 14 14"><g fill="#ffffff"><path d="M9.9 0.10000000000000009 L10.65 2.75 L13.3 3.5 L10.65 4.25 L9.9 6.9 L9.15 4.25 L6.5 3.5 L9.15 2.75 Z"/><path d="M3.4 2.3 L4.15 4.85 L6.699999999999999 5.6 L4.15 6.35 L3.4 8.899999999999999 L2.65 6.35 L0.10000000000000009 5.6 L2.65 4.85 Z"/><path d="M8.0 7.200000000000001 L8.75 9.55 L11.1 10.3 L8.75 11.05 L8.0 13.4 L7.25 11.05 L4.9 10.3 L7.25 9.55 Z"/></g></svg>
<span class="t" id="t71" style="font-size:10.5px;line-height:17px;height:17px;color:#fff;font-weight:700;left:720.00px;top:665px;transform-origin:0 50%;transform:scaleX(1.0238);">歌詞</span>
<div style="left:1252px;top:646px;width:53.7px;height:36px;background:#bab098;border-radius:3.5px;box-shadow:0 0 0 0.7px #111113;"></div>
<svg style="left:1260.8px;top:663.3px;" width="14" height="14" viewBox="0 0 14 14"><g fill="#ffffff"><path d="M9.9 0.10000000000000009 L10.65 2.75 L13.3 3.5 L10.65 4.25 L9.9 6.9 L9.15 4.25 L6.5 3.5 L9.15 2.75 Z"/><path d="M3.4 2.3 L4.15 4.85 L6.699999999999999 5.6 L4.15 6.35 L3.4 8.899999999999999 L2.65 6.35 L0.10000000000000009 5.6 L2.65 4.85 Z"/><path d="M8.0 7.200000000000001 L8.75 9.55 L11.1 10.3 L8.75 11.05 L8.0 13.4 L7.25 11.05 L4.9 10.3 L7.25 9.55 Z"/></g></svg>
<span class="t" id="t72" style="font-size:10.5px;line-height:17px;height:17px;color:#fff;font-weight:700;left:1281.00px;top:665px;transform-origin:0 50%;transform:scaleX(1.0238);">歌詞</span>
<div style="left:1531.3px;top:646px;width:53.4px;height:36px;background:#bab098;border-radius:3.5px;box-shadow:0 0 0 0.7px #111113;"></div>
<svg style="left:1540.1px;top:663.3px;" width="14" height="14" viewBox="0 0 14 14"><g fill="#ffffff"><path d="M9.9 0.10000000000000009 L10.65 2.75 L13.3 3.5 L10.65 4.25 L9.9 6.9 L9.15 4.25 L6.5 3.5 L9.15 2.75 Z"/><path d="M3.4 2.3 L4.15 4.85 L6.699999999999999 5.6 L4.15 6.35 L3.4 8.899999999999999 L2.65 6.35 L0.10000000000000009 5.6 L2.65 4.85 Z"/><path d="M8.0 7.200000000000001 L8.75 9.55 L11.1 10.3 L8.75 11.05 L8.0 13.4 L7.25 11.05 L4.9 10.3 L7.25 9.55 Z"/></g></svg>
<span class="t" id="t73" style="font-size:10.5px;line-height:17px;height:17px;color:#fff;font-weight:700;left:1560.30px;top:665px;transform-origin:0 50%;transform:scaleX(1.0238);">歌詞</span>
<div style="left:1864px;top:646px;width:45px;height:36px;background:#bab098;border-radius:3.5px 0 0 3.5px;box-shadow:0 0 0 0.7px #111113;"></div>
<span class="t" id="t74" style="font-size:10.5px;line-height:17px;height:17px;color:#fff;font-weight:700;left:1868.50px;top:665px;transform-origin:0 50%;transform:scaleX(1.0238);">歌詞</span>
<div style="left:552.3px;top:685px;width:328.4px;height:36px;background:#bab098;border-radius:3.5px;box-shadow:0 0 0 0.7px #111113;"></div>
<svg style="left:561.0999999999999px;top:702.3px;" width="14" height="14" viewBox="0 0 14 14"><g fill="#ffffff"><path d="M9.9 0.10000000000000009 L10.65 2.75 L13.3 3.5 L10.65 4.25 L9.9 6.9 L9.15 4.25 L6.5 3.5 L9.15 2.75 Z"/><path d="M3.4 2.3 L4.15 4.85 L6.699999999999999 5.6 L4.15 6.35 L3.4 8.899999999999999 L2.65 6.35 L0.10000000000000009 5.6 L2.65 4.85 Z"/><path d="M8.0 7.200000000000001 L8.75 9.55 L11.1 10.3 L8.75 11.05 L8.0 13.4 L7.25 11.05 L4.9 10.3 L7.25 9.55 Z"/></g></svg>
<span class="t" id="t75" style="font-size:10.5px;line-height:17px;height:17px;color:#fff;font-weight:700;left:581.30px;top:704px;transform-origin:0 50%;transform:scaleX(1.0238);">歌詞</span>
<div style="left:1167px;top:685px;width:138.7px;height:36px;background:#bab098;border-radius:3.5px;box-shadow:0 0 0 0.7px #111113;"></div>
<svg style="left:1175.8px;top:702.3px;" width="14" height="14" viewBox="0 0 14 14"><g fill="#ffffff"><path d="M9.9 0.10000000000000009 L10.65 2.75 L13.3 3.5 L10.65 4.25 L9.9 6.9 L9.15 4.25 L6.5 3.5 L9.15 2.75 Z"/><path d="M3.4 2.3 L4.15 4.85 L6.699999999999999 5.6 L4.15 6.35 L3.4 8.899999999999999 L2.65 6.35 L0.10000000000000009 5.6 L2.65 4.85 Z"/><path d="M8.0 7.200000000000001 L8.75 9.55 L11.1 10.3 L8.75 11.05 L8.0 13.4 L7.25 11.05 L4.9 10.3 L7.25 9.55 Z"/></g></svg>
<span class="t" id="t76" style="font-size:10.5px;line-height:17px;height:17px;color:#fff;font-weight:700;left:1196.00px;top:704px;transform-origin:0 50%;transform:scaleX(1.0238);">歌詞</span>
<div style="left:1446px;top:685px;width:138.7px;height:36px;background:#bab098;border-radius:3.5px;box-shadow:0 0 0 0.7px #111113;"></div>
<svg style="left:1454.8px;top:702.3px;" width="14" height="14" viewBox="0 0 14 14"><g fill="#ffffff"><path d="M9.9 0.10000000000000009 L10.65 2.75 L13.3 3.5 L10.65 4.25 L9.9 6.9 L9.15 4.25 L6.5 3.5 L9.15 2.75 Z"/><path d="M3.4 2.3 L4.15 4.85 L6.699999999999999 5.6 L4.15 6.35 L3.4 8.899999999999999 L2.65 6.35 L0.10000000000000009 5.6 L2.65 4.85 Z"/><path d="M8.0 7.200000000000001 L8.75 9.55 L11.1 10.3 L8.75 11.05 L8.0 13.4 L7.25 11.05 L4.9 10.3 L7.25 9.55 Z"/></g></svg>
<span class="t" id="t77" style="font-size:10.5px;line-height:17px;height:17px;color:#fff;font-weight:700;left:1475.00px;top:704px;transform-origin:0 50%;transform:scaleX(1.0238);">歌詞</span>
<div style="left:1864px;top:685px;width:45px;height:36px;background:#bab098;border-radius:3.5px 0 0 3.5px;box-shadow:0 0 0 0.7px #111113;"></div>
<span class="t" id="t78" style="font-size:10.5px;line-height:17px;height:17px;color:#fff;font-weight:700;left:1868.50px;top:704px;transform-origin:0 50%;transform:scaleX(1.0238);">歌詞</span>
<div style="left:232px;top:724px;width:179px;height:36px;background:#bab098;border-radius:0 3.5px 3.5px 0;box-shadow:0 0 0 0.7px #111113;"></div>
<svg style="left:242.3px;top:741.3px;" width="14" height="14" viewBox="0 0 14 14"><g fill="#ffffff"><path d="M9.9 0.10000000000000009 L10.65 2.75 L13.3 3.5 L10.65 4.25 L9.9 6.9 L9.15 4.25 L6.5 3.5 L9.15 2.75 Z"/><path d="M3.4 2.3 L4.15 4.85 L6.699999999999999 5.6 L4.15 6.35 L3.4 8.899999999999999 L2.65 6.35 L0.10000000000000009 5.6 L2.65 4.85 Z"/><path d="M8.0 7.200000000000001 L8.75 9.55 L11.1 10.3 L8.75 11.05 L8.0 13.4 L7.25 11.05 L4.9 10.3 L7.25 9.55 Z"/></g></svg>
<span class="t" id="t79" style="font-size:10.5px;line-height:17px;height:17px;color:#fff;font-weight:700;left:261.00px;top:743px;transform-origin:0 50%;transform:scaleX(1.0238);">歌詞</span>
<div style="left:412.3px;top:724px;width:49.4px;height:36px;background:#bab098;border-radius:3.5px;box-shadow:0 0 0 0.7px #111113;"></div>
<span class="t" id="t80" style="font-size:10.5px;line-height:17px;height:17px;color:#fff;font-weight:700;left:416.80px;top:743px;transform-origin:0 50%;transform:scaleX(1.0238);">歌詞</span>
<div style="left:463.3px;top:724px;width:87.0px;height:36px;background:#bab098;border-radius:3.5px;box-shadow:0 0 0 0.7px #111113;"></div>
<svg style="left:472.1px;top:741.3px;" width="14" height="14" viewBox="0 0 14 14"><g fill="#ffffff"><path d="M9.9 0.10000000000000009 L10.65 2.75 L13.3 3.5 L10.65 4.25 L9.9 6.9 L9.15 4.25 L6.5 3.5 L9.15 2.75 Z"/><path d="M3.4 2.3 L4.15 4.85 L6.699999999999999 5.6 L4.15 6.35 L3.4 8.899999999999999 L2.65 6.35 L0.10000000000000009 5.6 L2.65 4.85 Z"/><path d="M8.0 7.200000000000001 L8.75 9.55 L11.1 10.3 L8.75 11.05 L8.0 13.4 L7.25 11.05 L4.9 10.3 L7.25 9.55 Z"/></g></svg>
<span class="t" id="t81" style="font-size:10.5px;line-height:17px;height:17px;color:#fff;font-weight:700;left:492.30px;top:743px;transform-origin:0 50%;transform:scaleX(1.0238);">歌詞</span>
<div style="left:552.3px;top:724px;width:49.4px;height:36px;background:#bab098;border-radius:3.5px;box-shadow:0 0 0 0.7px #111113;"></div>
<span class="t" id="t82" style="font-size:10.5px;line-height:17px;height:17px;color:#fff;font-weight:700;left:556.80px;top:743px;transform-origin:0 50%;transform:scaleX(1.0238);">歌詞</span>
<div style="left:603.3px;top:724px;width:86.7px;height:36px;background:#bab098;border-radius:3.5px;box-shadow:0 0 0 0.7px #111113;"></div>
<svg style="left:612.0999999999999px;top:741.3px;" width="14" height="14" viewBox="0 0 14 14"><g fill="#ffffff"><path d="M9.9 0.10000000000000009 L10.65 2.75 L13.3 3.5 L10.65 4.25 L9.9 6.9 L9.15 4.25 L6.5 3.5 L9.15 2.75 Z"/><path d="M3.4 2.3 L4.15 4.85 L6.699999999999999 5.6 L4.15 6.35 L3.4 8.899999999999999 L2.65 6.35 L0.10000000000000009 5.6 L2.65 4.85 Z"/><path d="M8.0 7.200000000000001 L8.75 9.55 L11.1 10.3 L8.75 11.05 L8.0 13.4 L7.25 11.05 L4.9 10.3 L7.25 9.55 Z"/></g></svg>
<span class="t" id="t83" style="font-size:10.5px;line-height:17px;height:17px;color:#fff;font-weight:700;left:632.30px;top:743px;transform-origin:0 50%;transform:scaleX(1.0238);">歌詞</span>
<div style="left:691px;top:724px;width:49.7px;height:36px;background:#bab098;border-radius:3.5px;box-shadow:0 0 0 0.7px #111113;"></div>
<span class="t" id="t84" style="font-size:10.5px;line-height:17px;height:17px;color:#fff;font-weight:700;left:695.50px;top:743px;transform-origin:0 50%;transform:scaleX(1.0238);">歌詞</span>
<div style="left:742.3px;top:724px;width:87.4px;height:36px;background:#bab098;border-radius:3.5px;box-shadow:0 0 0 0.7px #111113;"></div>
<svg style="left:751.0999999999999px;top:741.3px;" width="14" height="14" viewBox="0 0 14 14"><g fill="#ffffff"><path d="M9.9 0.10000000000000009 L10.65 2.75 L13.3 3.5 L10.65 4.25 L9.9 6.9 L9.15 4.25 L6.5 3.5 L9.15 2.75 Z"/><path d="M3.4 2.3 L4.15 4.85 L6.699999999999999 5.6 L4.15 6.35 L3.4 8.899999999999999 L2.65 6.35 L0.10000000000000009 5.6 L2.65 4.85 Z"/><path d="M8.0 7.200000000000001 L8.75 9.55 L11.1 10.3 L8.75 11.05 L8.0 13.4 L7.25 11.05 L4.9 10.3 L7.25 9.55 Z"/></g></svg>
<span class="t" id="t85" style="font-size:10.5px;line-height:17px;height:17px;color:#fff;font-weight:700;left:771.30px;top:743px;transform-origin:0 50%;transform:scaleX(1.0238);">歌詞</span>
<div style="left:831px;top:724px;width:49.7px;height:36px;background:#bab098;border-radius:3.5px;box-shadow:0 0 0 0.7px #111113;"></div>
<span class="t" id="t86" style="font-size:10.5px;line-height:17px;height:17px;color:#fff;font-weight:700;left:835.50px;top:743px;transform-origin:0 50%;transform:scaleX(1.0238);">歌詞</span>
<div style="left:882.3px;top:724px;width:86.7px;height:36px;background:#bab098;border-radius:3.5px;box-shadow:0 0 0 0.7px #111113;"></div>
<svg style="left:891.0999999999999px;top:741.3px;" width="14" height="14" viewBox="0 0 14 14"><g fill="#ffffff"><path d="M9.9 0.10000000000000009 L10.65 2.75 L13.3 3.5 L10.65 4.25 L9.9 6.9 L9.15 4.25 L6.5 3.5 L9.15 2.75 Z"/><path d="M3.4 2.3 L4.15 4.85 L6.699999999999999 5.6 L4.15 6.35 L3.4 8.899999999999999 L2.65 6.35 L0.10000000000000009 5.6 L2.65 4.85 Z"/><path d="M8.0 7.200000000000001 L8.75 9.55 L11.1 10.3 L8.75 11.05 L8.0 13.4 L7.25 11.05 L4.9 10.3 L7.25 9.55 Z"/></g></svg>
<span class="t" id="t87" style="font-size:10.5px;line-height:17px;height:17px;color:#fff;font-weight:700;left:911.30px;top:743px;transform-origin:0 50%;transform:scaleX(1.0238);">歌詞</span>
<div style="left:1024px;top:724px;width:32.7px;height:36px;background:#bab098;border-radius:3.5px;box-shadow:0 0 0 0.7px #111113;"></div>
<span class="t" id="t88" style="font-size:11px;line-height:18px;height:18px;color:#fff;left:1028.20px;top:741px;transform-origin:0 50%;letter-spacing:0.250px;-webkit-text-stroke:0.35px currentColor;">Te...</span>
<div style="left:1058.3px;top:724px;width:32.4px;height:36px;background:#bab098;border-radius:3.5px;box-shadow:0 0 0 0.7px #111113;"></div>
<span class="t" id="t89" style="font-size:11px;line-height:18px;height:18px;color:#fff;left:1062.50px;top:741px;transform-origin:0 50%;letter-spacing:0.250px;-webkit-text-stroke:0.35px currentColor;">Te...</span>
<div style="left:1092.3px;top:724px;width:15.4px;height:36px;background:#bab098;border-radius:3.5px;box-shadow:0 0 0 0.7px #111113;"></div>
<div style="left:1109.3px;top:724px;width:196.4px;height:36px;background:#bab098;border-radius:3.5px;box-shadow:0 0 0 0.7px #111113;"></div>
<svg style="left:1118.1px;top:741.3px;" width="14" height="14" viewBox="0 0 14 14"><g fill="#ffffff"><path d="M9.9 0.10000000000000009 L10.65 2.75 L13.3 3.5 L10.65 4.25 L9.9 6.9 L9.15 4.25 L6.5 3.5 L9.15 2.75 Z"/><path d="M3.4 2.3 L4.15 4.85 L6.699999999999999 5.6 L4.15 6.35 L3.4 8.899999999999999 L2.65 6.35 L0.10000000000000009 5.6 L2.65 4.85 Z"/><path d="M8.0 7.200000000000001 L8.75 9.55 L11.1 10.3 L8.75 11.05 L8.0 13.4 L7.25 11.05 L4.9 10.3 L7.25 9.55 Z"/></g></svg>
<span class="t" id="t90" style="font-size:10.5px;line-height:17px;height:17px;color:#fff;font-weight:700;left:1138.30px;top:743px;transform-origin:0 50%;transform:scaleX(1.0238);">歌詞</span>
<div style="left:1307.3px;top:724px;width:32.7px;height:36px;background:#bab098;border-radius:3.5px;box-shadow:0 0 0 0.7px #111113;"></div>
<span class="t" id="t91" style="font-size:11px;line-height:18px;height:18px;color:#fff;left:1311.50px;top:741px;transform-origin:0 50%;letter-spacing:0.250px;-webkit-text-stroke:0.35px currentColor;">Te...</span>
<div style="left:1341.3px;top:724px;width:32.4px;height:36px;background:#bab098;border-radius:3.5px;box-shadow:0 0 0 0.7px #111113;"></div>
<span class="t" id="t92" style="font-size:11px;line-height:18px;height:18px;color:#fff;left:1345.50px;top:741px;transform-origin:0 50%;letter-spacing:0.250px;-webkit-text-stroke:0.35px currentColor;">Te...</span>
<div style="left:1375.3px;top:724px;width:15.4px;height:36px;background:#bab098;border-radius:3.5px;box-shadow:0 0 0 0.7px #111113;"></div>
<div style="left:1392.3px;top:724px;width:192.4px;height:36px;background:#bab098;border-radius:3.5px;box-shadow:0 0 0 0.7px #111113;"></div>
<svg style="left:1401.1px;top:741.3px;" width="14" height="14" viewBox="0 0 14 14"><g fill="#ffffff"><path d="M9.9 0.10000000000000009 L10.65 2.75 L13.3 3.5 L10.65 4.25 L9.9 6.9 L9.15 4.25 L6.5 3.5 L9.15 2.75 Z"/><path d="M3.4 2.3 L4.15 4.85 L6.699999999999999 5.6 L4.15 6.35 L3.4 8.899999999999999 L2.65 6.35 L0.10000000000000009 5.6 L2.65 4.85 Z"/><path d="M8.0 7.200000000000001 L8.75 9.55 L11.1 10.3 L8.75 11.05 L8.0 13.4 L7.25 11.05 L4.9 10.3 L7.25 9.55 Z"/></g></svg>
<span class="t" id="t93" style="font-size:10.5px;line-height:17px;height:17px;color:#fff;font-weight:700;left:1421.30px;top:743px;transform-origin:0 50%;transform:scaleX(1.0238);">歌詞</span>
<div style="left:1586.3px;top:724px;width:32.4px;height:36px;background:#bab098;border-radius:3.5px;box-shadow:0 0 0 0.7px #111113;"></div>
<span class="t" id="t94" style="font-size:11px;line-height:18px;height:18px;color:#fff;left:1590.50px;top:741px;transform-origin:0 50%;letter-spacing:0.250px;-webkit-text-stroke:0.35px currentColor;">Te...</span>
<div style="left:1620.3px;top:724px;width:32.4px;height:36px;background:#bab098;border-radius:3.5px;box-shadow:0 0 0 0.7px #111113;"></div>
<span class="t" id="t95" style="font-size:11px;line-height:18px;height:18px;color:#fff;left:1624.50px;top:741px;transform-origin:0 50%;letter-spacing:0.250px;-webkit-text-stroke:0.35px currentColor;">Te...</span>
<div style="left:1654.3px;top:724px;width:15.4px;height:36px;background:#bab098;border-radius:3.5px;box-shadow:0 0 0 0.7px #111113;"></div>
<div style="left:1691px;top:724px;width:218px;height:36px;background:#bab098;border-radius:3.5px 0 0 3.5px;box-shadow:0 0 0 0.7px #111113;"></div>
<svg style="left:1699.8px;top:741.3px;" width="14" height="14" viewBox="0 0 14 14"><g fill="#ffffff"><path d="M9.9 0.10000000000000009 L10.65 2.75 L13.3 3.5 L10.65 4.25 L9.9 6.9 L9.15 4.25 L6.5 3.5 L9.15 2.75 Z"/><path d="M3.4 2.3 L4.15 4.85 L6.699999999999999 5.6 L4.15 6.35 L3.4 8.899999999999999 L2.65 6.35 L0.10000000000000009 5.6 L2.65 4.85 Z"/><path d="M8.0 7.200000000000001 L8.75 9.55 L11.1 10.3 L8.75 11.05 L8.0 13.4 L7.25 11.05 L4.9 10.3 L7.25 9.55 Z"/></g></svg>
<span class="t" id="t96" style="font-size:10.5px;line-height:17px;height:17px;color:#fff;font-weight:700;left:1720.00px;top:743px;transform-origin:0 50%;transform:scaleX(1.0238);">歌詞</span>
<div style="left:463.3px;top:802px;width:87.0px;height:36px;background:#9b75a1;border-radius:3.5px;box-shadow:0 0 0 0.7px #111113;"></div>
<span class="t" id="t97" style="font-size:10.5px;line-height:17px;height:17px;color:#fff;font-weight:700;left:467.80px;top:821px;transform-origin:0 50%;transform:scaleX(1.0238);">単色</span>
<svg style="left:503.3px;top:817.5px;" width="19" height="15" viewBox="0 0 19 15"><g fill="none" stroke="#0c0c0e" stroke-width="1.4" stroke-linecap="round"><path d="M0.8 6 Q2.6 1.6 4.6 1.8 Q7 2 9 7.2 Q11 12.6 13.4 12.4 Q15.4 12.2 17.6 9.6"/><circle cx="4.1" cy="3.6" r="1.5" fill="#9b75a1" stroke-width="1.1"/><circle cx="13.6" cy="11.4" r="1.5" fill="#9b75a1" stroke-width="1.1"/></g></svg>
<svg style="left:530.1px;top:819.2px;" width="12" height="12" viewBox="0 0 12 12"><path d="M6 0.2 L11.8 6 L6 11.8 L0.2 6 Z" fill="#0c0c0e"/><path d="M6.6 2.6 L10 6 L6.6 9.4 Z" fill="#8a6890"/></svg>
<div style="left:552.3px;top:802px;width:49.4px;height:36px;background:#9b75a1;border-radius:3.5px;box-shadow:0 0 0 0.7px #111113;"></div>
<span class="t" id="t98" style="font-size:10.5px;line-height:17px;height:17px;color:#fff;font-weight:700;left:556.80px;top:821px;transform-origin:0 50%;transform:scaleX(1.0238);">単色</span>
<div style="left:603.3px;top:802px;width:86.7px;height:36px;background:#9b75a1;border-radius:3.5px;box-shadow:0 0 0 0.7px #111113;"></div>
<span class="t" id="t99" style="font-size:10.5px;line-height:17px;height:17px;color:#fff;font-weight:700;left:607.80px;top:821px;transform-origin:0 50%;transform:scaleX(1.0238);">単色</span>
<svg style="left:643.3px;top:817.5px;" width="19" height="15" viewBox="0 0 19 15"><g fill="none" stroke="#0c0c0e" stroke-width="1.4" stroke-linecap="round"><path d="M0.8 6 Q2.6 1.6 4.6 1.8 Q7 2 9 7.2 Q11 12.6 13.4 12.4 Q15.4 12.2 17.6 9.6"/><circle cx="4.1" cy="3.6" r="1.5" fill="#9b75a1" stroke-width="1.1"/><circle cx="13.6" cy="11.4" r="1.5" fill="#9b75a1" stroke-width="1.1"/></g></svg>
<svg style="left:670.0999999999999px;top:819.2px;" width="12" height="12" viewBox="0 0 12 12"><path d="M6 0.2 L11.8 6 L6 11.8 L0.2 6 Z" fill="#0c0c0e"/><path d="M6.6 2.6 L10 6 L6.6 9.4 Z" fill="#8a6890"/></svg>
<div style="left:691px;top:802px;width:49.7px;height:36px;background:#9b75a1;border-radius:3.5px;box-shadow:0 0 0 0.7px #111113;"></div>
<span class="t" id="t100" style="font-size:10.5px;line-height:17px;height:17px;color:#fff;font-weight:700;left:695.50px;top:821px;transform-origin:0 50%;transform:scaleX(1.0238);">単色</span>
<div style="left:742.3px;top:802px;width:87.4px;height:36px;background:#9b75a1;border-radius:3.5px;box-shadow:0 0 0 0.7px #111113;"></div>
<span class="t" id="t101" style="font-size:10.5px;line-height:17px;height:17px;color:#fff;font-weight:700;left:746.80px;top:821px;transform-origin:0 50%;transform:scaleX(1.0238);">単色</span>
<svg style="left:782.3px;top:817.5px;" width="19" height="15" viewBox="0 0 19 15"><g fill="none" stroke="#0c0c0e" stroke-width="1.4" stroke-linecap="round"><path d="M0.8 6 Q2.6 1.6 4.6 1.8 Q7 2 9 7.2 Q11 12.6 13.4 12.4 Q15.4 12.2 17.6 9.6"/><circle cx="4.1" cy="3.6" r="1.5" fill="#9b75a1" stroke-width="1.1"/><circle cx="13.6" cy="11.4" r="1.5" fill="#9b75a1" stroke-width="1.1"/></g></svg>
<svg style="left:809.0999999999999px;top:819.2px;" width="12" height="12" viewBox="0 0 12 12"><path d="M6 0.2 L11.8 6 L6 11.8 L0.2 6 Z" fill="#0c0c0e"/><path d="M6.6 2.6 L10 6 L6.6 9.4 Z" fill="#8a6890"/></svg>
<div style="left:831px;top:802px;width:49.7px;height:36px;background:#9b75a1;border-radius:3.5px;box-shadow:0 0 0 0.7px #111113;"></div>
<span class="t" id="t102" style="font-size:10.5px;line-height:17px;height:17px;color:#fff;font-weight:700;left:835.50px;top:821px;transform-origin:0 50%;transform:scaleX(1.0238);">単色</span>
<div style="left:882.3px;top:802px;width:140.4px;height:36px;background:#9b75a1;border-radius:3.5px;box-shadow:0 0 0 0.7px #111113;"></div>
<span class="t" id="t103" style="font-size:10.5px;line-height:17px;height:17px;color:#fff;font-weight:700;left:886.80px;top:821px;transform-origin:0 50%;transform:scaleX(1.0238);">単色</span>
<div style="left:1024px;top:802px;width:32.7px;height:36px;background:#446786;border-radius:3.5px;box-shadow:0 0 0 0.7px #111113;"></div>
<span class="t" id="t104" style="font-size:10.5px;line-height:17px;height:17px;color:#fff;font-weight:700;left:1028.50px;top:820px;transform-origin:0 50%;">背...</span>
<div style="left:1058.3px;top:802px;width:32.4px;height:36px;background:#446786;border-radius:3.5px;box-shadow:0 0 0 0.7px #111113;"></div>
<span class="t" id="t105" style="font-size:10.5px;line-height:17px;height:17px;color:#fff;font-weight:700;left:1062.80px;top:820px;transform-origin:0 50%;">背...</span>
<div style="left:1092.3px;top:802px;width:15.4px;height:36px;background:#446786;border-radius:3.5px;box-shadow:0 0 0 0.7px #111113;"></div>
<div style="left:1307.3px;top:802px;width:32.7px;height:36px;background:#446786;border-radius:3.5px;box-shadow:0 0 0 0.7px #111113;"></div>
<span class="t" id="t106" style="font-size:10.5px;line-height:17px;height:17px;color:#fff;font-weight:700;left:1311.80px;top:820px;transform-origin:0 50%;">背...</span>
<div style="left:1341.6px;top:802px;width:32.4px;height:36px;background:#446786;border-radius:3.5px;box-shadow:0 0 0 0.7px #111113;"></div>
<span class="t" id="t107" style="font-size:10.5px;line-height:17px;height:17px;color:#fff;font-weight:700;left:1346.10px;top:820px;transform-origin:0 50%;">背...</span>
<div style="left:1375.6px;top:802px;width:15.4px;height:36px;background:#446786;border-radius:3.5px;box-shadow:0 0 0 0.7px #111113;"></div>
<div style="left:1586.3px;top:802px;width:32.7px;height:36px;background:#446786;border-radius:3.5px;box-shadow:0 0 0 0.7px #111113;"></div>
<span class="t" id="t108" style="font-size:10.5px;line-height:17px;height:17px;color:#fff;font-weight:700;left:1590.80px;top:820px;transform-origin:0 50%;">背...</span>
<div style="left:1620.6px;top:802px;width:32.4px;height:36px;background:#446786;border-radius:3.5px;box-shadow:0 0 0 0.7px #111113;"></div>
<span class="t" id="t109" style="font-size:10.5px;line-height:17px;height:17px;color:#fff;font-weight:700;left:1625.10px;top:820px;transform-origin:0 50%;">背...</span>
<div style="left:1654.6px;top:802px;width:15.4px;height:36px;background:#446786;border-radius:3.5px;box-shadow:0 0 0 0.7px #111113;"></div>
<div style="left:232px;top:839px;width:1677px;height:17px;overflow:hidden;">
<div style="left:0px;top:2px;width:790.7px;height:36px;background:#446786;border-radius:0 3.5px 0 0;box-shadow:0 0 0 0.7px #111113;"></div>
<div style="left:792px;top:2px;width:83.7px;height:36px;background:#446786;border-radius:3.5px 3.5px 0 0;box-shadow:0 0 0 0.7px #111113;"></div>
<div style="left:877.3px;top:2px;width:196.4px;height:36px;background:#446786;border-radius:3.5px 3.5px 0 0;box-shadow:0 0 0 0.7px #111113;"></div>
<div style="left:1075.3px;top:2px;width:83.4px;height:36px;background:#446786;border-radius:3.5px 3.5px 0 0;box-shadow:0 0 0 0.7px #111113;"></div>
<div style="left:1160.3px;top:2px;width:195.4px;height:36px;background:#446786;border-radius:3.5px 3.5px 0 0;box-shadow:0 0 0 0.7px #111113;"></div>
<div style="left:1357.3px;top:2px;width:80.4px;height:36px;background:#446786;border-radius:3.5px 3.5px 0 0;box-shadow:0 0 0 0.7px #111113;"></div>
<div style="left:1439.3px;top:2px;width:243.7px;height:36px;background:#446786;border-radius:3.5px 3.5px 0 0;box-shadow:0 0 0 0.7px #111113;"></div>
</div>
<div style="left:232px;top:592px;width:1677px;height:13px;overflow:hidden;">
<div style="left:826.3px;top:-24px;width:49.4px;height:36px;background:#446786;border-radius:3.5px;box-shadow:0 0 0 0.7px #111113;"></div>
<span class="t" style="left:828.9px;top:-6.4px;font-size:10.2px;line-height:16px;font-weight:700;color:#fff;letter-spacing:-0.75px;">ピンク(...</span>
<div style="left:1109.3px;top:-24px;width:49.4px;height:36px;background:#446786;border-radius:3.5px;box-shadow:0 0 0 0.7px #111113;"></div>
<span class="t" style="left:1111.9px;top:-6.4px;font-size:10.2px;line-height:16px;font-weight:700;color:#fff;letter-spacing:-0.75px;">ピンク(...</span>
<div style="left:1388.3px;top:-24px;width:49.4px;height:36px;background:#446786;border-radius:3.5px;box-shadow:0 0 0 0.7px #111113;"></div>
<span class="t" style="left:1390.9px;top:-6.4px;font-size:10.2px;line-height:16px;font-weight:700;color:#fff;letter-spacing:-0.75px;">ピンク(...</span>
</div>
<div style="left:232px;top:590.3px;width:738px;height:2px;background:#dc2b0c;"></div>
<div style="left:1024px;top:590.3px;width:646px;height:2px;background:#dc2b0c;"></div>
<div style="left:1691px;top:590.3px;width:218px;height:2px;background:#dc2b0c;"></div>
<div style="left:411.5px;top:590.3px;width:3.5px;height:2px;background:#0780e6;"></div>
<div style="left:419px;top:590.3px;width:10.5px;height:2px;background:#0780e6;"></div>
<div style="left:439px;top:590.3px;width:10.5px;height:2px;background:#0780e6;"></div>
<div style="left:453px;top:590.3px;width:3px;height:2px;background:#0780e6;"></div>
<div style="left:830.8px;top:590.3px;width:47.200000000000045px;height:2px;background:#0780e6;"></div>
<div style="left:881.8px;top:590.3px;width:17.200000000000045px;height:2px;background:#0780e6;"></div>
<svg style="left:0px;top:0px;" width="1909" height="600" viewBox="0 0 1909 600"><path d="M408.9 578 H415.5 Q417.0 578 417.0 579.5 V585.3 L412.2 589.8 L407.4 585.3 V579.5 Q407.4 578 408.9 578 Z" fill="#0780e6" stroke="#0b0e13" stroke-width="1.8" stroke-linejoin="round" paint-order="stroke"/><path d="M459.9 578 H466.5 Q468.0 578 468.0 579.5 V585.3 L463.2 589.8 L458.4 585.3 V579.5 Q458.4 578 459.9 578 Z" fill="#0780e6" stroke="#0b0e13" stroke-width="1.8" stroke-linejoin="round" paint-order="stroke"/><path d="M548.6 578 H555.2 Q556.7 578 556.7 579.5 V585.3 L551.9 589.8 L547.1 585.3 V579.5 Q547.1 578 548.6 578 Z" fill="#0780e6" stroke="#0b0e13" stroke-width="1.8" stroke-linejoin="round" paint-order="stroke"/><path d="M599.6 578 H606.2 Q607.7 578 607.7 579.5 V585.3 L602.9 589.8 L598.1 585.3 V579.5 Q598.1 578 599.6 578 Z" fill="#0780e6" stroke="#0b0e13" stroke-width="1.8" stroke-linejoin="round" paint-order="stroke"/><path d="M687.5 578 H694.1 Q695.6 578 695.6 579.5 V585.3 L690.8 589.8 L686.0 585.3 V579.5 Q686.0 578 687.5 578 Z" fill="#0780e6" stroke="#0b0e13" stroke-width="1.8" stroke-linejoin="round" paint-order="stroke"/><path d="M738.6 578 H745.2 Q746.7 578 746.7 579.5 V585.3 L741.9 589.8 L737.1 585.3 V579.5 Q737.1 578 738.6 578 Z" fill="#0780e6" stroke="#0b0e13" stroke-width="1.8" stroke-linejoin="round" paint-order="stroke"/><path d="M827.6 578 H834.2 Q835.7 578 835.7 579.5 V585.3 L830.9 589.8 L826.1 585.3 V579.5 Q826.1 578 827.6 578 Z" fill="#0780e6" stroke="#0b0e13" stroke-width="1.8" stroke-linejoin="round" paint-order="stroke"/><path d="M878.5 578 H885.1 Q886.6 578 886.6 579.5 V585.3 L881.8 589.8 L877.0 585.3 V579.5 Q877.0 578 878.5 578 Z" fill="#0780e6" stroke="#0b0e13" stroke-width="1.8" stroke-linejoin="round" paint-order="stroke"/><path d="M1020.9 578 H1027.5 Q1029.0 578 1029.0 579.5 V585.3 L1024.2 589.8 L1019.4 585.3 V579.5 Q1019.4 578 1020.9 578 Z" fill="#0780e6" stroke="#0b0e13" stroke-width="1.8" stroke-linejoin="round" paint-order="stroke"/><path d="M1071.9 578 H1078.5 Q1080.0 578 1080.0 579.5 V585.3 L1075.2 589.8 L1070.4 585.3 V579.5 Q1070.4 578 1071.9 578 Z" fill="#0780e6" stroke="#0b0e13" stroke-width="1.8" stroke-linejoin="round" paint-order="stroke"/><path d="M1105.9 578 H1112.5 Q1114.0 578 1114.0 579.5 V585.3 L1109.2 589.8 L1104.4 585.3 V579.5 Q1104.4 578 1105.9 578 Z" fill="#0780e6" stroke="#0b0e13" stroke-width="1.8" stroke-linejoin="round" paint-order="stroke"/><path d="M1303.6 578 H1310.2 Q1311.7 578 1311.7 579.5 V585.3 L1306.9 589.8 L1302.1 585.3 V579.5 Q1302.1 578 1303.6 578 Z" fill="#0780e6" stroke="#0b0e13" stroke-width="1.8" stroke-linejoin="round" paint-order="stroke"/><path d="M1337.6 578 H1344.2 Q1345.7 578 1345.7 579.5 V585.3 L1340.9 589.8 L1336.1 585.3 V579.5 Q1336.1 578 1337.6 578 Z" fill="#0780e6" stroke="#0b0e13" stroke-width="1.8" stroke-linejoin="round" paint-order="stroke"/><path d="M1354.6 578 H1361.2 Q1362.7 578 1362.7 579.5 V585.3 L1357.9 589.8 L1353.1 585.3 V579.5 Q1353.1 578 1354.6 578 Z" fill="#0780e6" stroke="#0b0e13" stroke-width="1.8" stroke-linejoin="round" paint-order="stroke"/><path d="M1388.6 578 H1395.2 Q1396.7 578 1396.7 579.5 V585.3 L1391.9 589.8 L1387.1 585.3 V579.5 Q1387.1 578 1388.6 578 Z" fill="#0780e6" stroke="#0b0e13" stroke-width="1.8" stroke-linejoin="round" paint-order="stroke"/><path d="M1582.7 578 H1589.3 Q1590.8 578 1590.8 579.5 V585.3 L1586.0 589.8 L1581.2 585.3 V579.5 Q1581.2 578 1582.7 578 Z" fill="#0780e6" stroke="#0b0e13" stroke-width="1.8" stroke-linejoin="round" paint-order="stroke"/><path d="M1616.6 578 H1623.2 Q1624.7 578 1624.7 579.5 V585.3 L1619.9 589.8 L1615.1 585.3 V579.5 Q1615.1 578 1616.6 578 Z" fill="#0780e6" stroke="#0b0e13" stroke-width="1.8" stroke-linejoin="round" paint-order="stroke"/><path d="M1633.6 578 H1640.2 Q1641.7 578 1641.7 579.5 V585.3 L1636.9 589.8 L1632.1 585.3 V579.5 Q1632.1 578 1633.6 578 Z" fill="#0780e6" stroke="#0b0e13" stroke-width="1.8" stroke-linejoin="round" paint-order="stroke"/><path d="M1667.6 578 H1674.2 Q1675.7 578 1675.7 579.5 V585.3 L1670.9 589.8 L1666.1 585.3 V579.5 Q1666.1 578 1667.6 578 Z" fill="#0780e6" stroke="#0b0e13" stroke-width="1.8" stroke-linejoin="round" paint-order="stroke"/></svg>
<div style="left:1911.2px;top:665.5px;width:7.2px;height:176.7px;background:#5a5f6a;border-radius:3.6px;"></div>
<div style="left:0px;top:855.8px;width:1920px;height:5.2px;background:#0b0b0d;"></div>
<div style="left:0px;top:857.4px;width:1920px;height:2.4px;background:#3a3a3e;"></div>
<div style="left:0px;top:861px;width:232px;height:88px;background:#212126;"></div>
<div style="left:231px;top:861px;width:1px;height:101px;background:#0b0b0d;"></div>
<div style="left:0px;top:861px;width:3px;height:88px;background:#479366;"></div>
<div style="left:3px;top:861px;width:1px;height:88px;background:#0b0b0d;"></div>
<div style="left:19px;top:861px;width:1px;height:88px;background:#0b0b0d;"></div>
<div style="left:4px;top:888px;width:227px;height:1px;background:#0b0b0d;"></div>
<div style="left:20px;top:915px;width:211px;height:1px;background:#0b0b0d;"></div>
<div style="left:63px;top:889px;width:1px;height:26px;background:#0b0b0d;"></div>
<div style="left:0px;top:948px;width:232px;height:1px;background:#0b0b0d;"></div>
<div style="left:232px;top:861px;width:1677px;height:27px;background:#479366;"></div>
<div style="left:232px;top:887.3px;width:1677px;height:2px;background:#0e1c14;"></div>
<div style="left:232px;top:889px;width:1677px;height:59px;background:#479366;"></div>
<div style="left:232px;top:923px;width:1677px;height:1px;background:#3c8058;"></div>
<svg style="left:0px;top:0px;" width="1909" height="950" viewBox="0 0 1909 950"><path d="M232 892.7V892.7h1V890.8h1V892.9h1V890.8h1V893.9h1V895.3h1V890.8h1V893h1V890.8h1V895h1V890.8h1V890.8h1V896.2h1V897.4h1V890.8h1V893.7h1V894.3h1V894.7h1V894.1h1V892.7h1V898.3h1V890.8h1V896.4h1V893.2h1V890.8h1V890.8h1V896.5h1V896.9h1V890.8h1V896h1V894.8h1V894.7h1V895.3h1V890.8h1V890.8h1V890.8h1V895.7h1V894.8h1V895h1V895.1h1V894.8h1V893.9h1V894.6h1V894.7h1V894.9h1V894.7h1V894.7h1V894.2h1V892.5h1V893.1h1V894.8h1V890.8h1V893.7h1V893.8h1V890.8h1V894.2h1V890.8h1V892h1V893.9h1V893.3h1V895.5h1V893h1V892.1h1V892.9h1V893h1V892.4h1V896.1h1V894.4h1V892.7h1V893.2h1V890.8h1V892.3h1V892.1h1V894.5h1V897.5h1V892.8h1V894.2h1V893.5h1V890.8h1V894h1V890.8h1V890.8h1V890.8h1V894.3h1V890.8h1V896.1h1V895.6h1V896.3h1V890.8h1V896h1V894h1V899h1V895.1h1V896.9h1V893.9h1V895.1h1V894.6h1V899h1V896.4h1V890.8h1V890.8h1V895.1h1V894.1h1V895.8h1V895.2h1V893.5h1V890.8h1V895.5h1V894.3h1V892.3h1V897h1V893h1V893h1V893.4h1V894.1h1V890.8h1V894.9h1V894h1V894.4h1V893.5h1V894.1h1V892.2h1V890.8h1V892.2h1V890.8h1V890.8h1V890.8h1V890.8h1V892.7h1V890.8h1V890.8h1V890.8h1V890.8h1V892.3h1V890.8h1V893.6h1V892.9h1V890.8h1V892.6h1V894.4h1V894.3h1V890.8h1V894.7h1V896.3h1V893.7h1V894.4h1V890.8h1V890.8h1V893.9h1V894.3h1V897.3h1V890.8h1V890.8h1V895.8h1V893.3h1V890.8h1V894.5h1V890.8h1V894h1V895.1h1V897.7h1V895h1V895.6h1V896.4h1V890.8h1V894h1V893.9h1V896.1h1V894.6h1V896.2h1V896.3h1V896.6h1V898.6h1V897.2h1V897.1h1V895.6h1V895.5h1V894.8h1V894.1h1V890.8h1V890.8h1V895.1h1V895.2h1V894.5h1V896.2h1V892.2h1V896.8h1V894.5h1V894h1V894.9h1V892.9h1V892.1h1V890.8h1V890.8h1V893.5h1V894.1h1V894.6h1V893.9h1V893.9h1V892.3h1V890.8h1V892.6h1V893.8h1V892.3h1V893.8h1V891.8h1V890.8h1V893.1h1V892h1V895.6h1V894.6h1V893.5h1V894.4h1V896.2h1V892.9h1V890.8h1V890.8h1V890.8h1V895.5h1V896.6h1V890.8h1V894.8h1V895.2h1V894.8h1V893.8h1V894.9h1V890.8h1V890.8h1V897.6h1V895.3h1V896.1h1V898h1V893.2h1V898.8h1V897.7h1V890.8h1V893.1h1V896.6h1V892.5h1V893.9h1V895.8h1V892.8h1V890.8h1V898.3h1V896.4h1V895.6h1V895.6h1V895h1V894.3h1V895.5h1V895.7h1V895.7h1V893.8h1V890.8h1V895h1V890.8h1V890.8h1V892.7h1V890.8h1V892.2h1V894.9h1V892.9h1V894.6h1V894.3h1V895.9h1V895.6h1V893.7h1V897h1V895.8h1V896.3h1V897.4h1V898.2h1V898.3h1V900.1h1V900.9h1V900.8h1V900.8h1V901.5h1V901.3h1V902h1V901.9h1V902.2h1V902.7h1V902.4h1V903.8h1V903.1h1V904.3h1V903.6h1V904.7h1V904.1h1V904.5h1V904.5h1V905h1V904.8h1V905.1h1V905.1h1V904.9h1V905h1V904.7h1V904.8h1V904.8h1V905.4h1V905.2h1V905.2h1V905.1h1V905.3h1V905.2h1V905.4h1V905.6h1V905.5h1V905.4h1V905.6h1V905.5h1V905.5h1V905.8h1V905.7h1V905.8h1V905.6h1V905.6h1V905.9h1V905.8h1V905.8h1V905.8h1V905.9h1V905.9h1V905.9h1V906.1h1V906.1h1V906.1h1V906.1h1V906h1V906.1h1V906h1V906h1V906h1V906h1V906.1h1V906.1h1V906h1V906h1V906.1h1V906.1h1V906.1h1V906.1h1V906.1h1V906.1h1V906.1h1V906.1h1V906.1h1V906.1h1V906.1h1V906.1h1V906.1h1V899h1V890.8h1V893.9h1V892.5h1V892.6h1V893.3h1V893.8h1V892.9h1V890.8h1V893.2h1V895.3h1V890.8h1V890.8h1V890.8h1V890.8h1V892.2h1V895h1V893.1h1V894.6h1V892.8h1V890.8h1V895.3h1V890.8h1V896.1h1V890.8h1V890.8h1V890.8h1V890.8h1V890.8h1V890.8h1V890.8h1V899.1h1V893.3h1V894.2h1V895.6h1V894.8h1V894h1V892.3h1V895.6h1V894.3h1V896.6h1V894.6h1V895.4h1V895.9h1V893h1V890.8h1V890.8h1V890.8h1V894.3h1V893.2h1V890.8h1V890.8h1V895.7h1V895.1h1V894h1V892.5h1V894.6h1V892.3h1V894h1V892.1h1V894.1h1V895.4h1V896.8h1V897.8h1V897.7h1V898.1h1V897.9h1V897.6h1V898.3h1V898.8h1V900.7h1V900.7h1V901.4h1V900.5h1V901.4h1V901.4h1V902.5h1V901.9h1V902.8h1V903.5h1V903.2h1V903.2h1V904.3h1V903.5h1V904.2h1V904.2h1V904h1V904.8h1V904.9h1V904.9h1V904.6h1V904.6h1V904.9h1V904.3h1V904.2h1V904.9h1V904.4h1V905.2h1V905.1h1V905.2h1V904.5h1V904.6h1V904.9h1V905.1h1V905.3h1V904.8h1V905.3h1V905.3h1V905.3h1V905.1h1V905.1h1V905.2h1V905.2h1V905.5h1V905.2h1V905.5h1V905.4h1V905.3h1V905.3h1V905.3h1V905.7h1V905.5h1V905.3h1V905.5h1V905.5h1V905.6h1V905.7h1V905.4h1V905.4h1V905.6h1V905.4h1V905.6h1V905.5h1V905.7h1V905.8h1V905.8h1V905.5h1V905.7h1V905.5h1V905.6h1V905.7h1V905.6h1V905.9h1V905.8h1V905.9h1V905.9h1V905.8h1V905.9h1V905.7h1V905.9h1V905.9h1V905.9h1V905.8h1V905.8h1V905.8h1V905.8h1V905.7h1V899.9h1V895.3h1V895.6h1V890.8h1V897.1h1V890.8h1V896.8h1V896h1V890.8h1V895.9h1V896.2h1V895.1h1V892.4h1V893.3h1V890.8h1V898.3h1V890.8h1V894.1h1V890.8h1V893.7h1V899h1V890.8h1V898.1h1V896h1V895h1V895.7h1V894.2h1V898.4h1V893h1V890.8h1V890.8h1V894.7h1V895.6h1V894.6h1V891.5h1V894.4h1V894.8h1V897.7h1V892.7h1V895.9h1V896.2h1V893.5h1V897.1h1V896.5h1V896.8h1V896h1V895.9h1V896.7h1V897.3h1V898h1V897.8h1V898.1h1V898.1h1V896.4h1V896.6h1V898.7h1V898.5h1V900.3h1V899.8h1V899.9h1V900.1h1V898.8h1V900.2h1V900.6h1V901.1h1V900.5h1V900.1h1V901.7h1V901h1V900.1h1V901.3h1V899.4h1V901.2h1V901.2h1V900.6h1V901.7h1V901.9h1V899.8h1V901.5h1V899.9h1V900.8h1V901.7h1V901.3h1V901.2h1V902h1V901.9h1V901.2h1V901.1h1V901.6h1V901.4h1V900.7h1V900.8h1V900.8h1V903.9h1V901.8h1V901.8h1V902.6h1V904h1V902.3h1V901.5h1V901.6h1V901.7h1V902.6h1V902.4h1V903h1V902.6h1V903.2h1V902.8h1V903.3h1V902.8h1V903.3h1V903.3h1V903.7h1V903.9h1V903.8h1V903.9h1V904.4h1V903.4h1V904.2h1V903.4h1V903.5h1V903.7h1V903.7h1V904.7h1V903.9h1V904.6h1V904.4h1V904.6h1V904.1h1V904.8h1V904.9h1V904.6h1V904.2h1V904.2h1V904.9h1V904.5h1V904.7h1V904.6h1V904.4h1V905h1V904.7h1V894.7h1V890.8h1V890.8h1V894.7h1V894.3h1V897.7h1V893.2h1V892.5h1V895.1h1V895.2h1V895.8h1V890.8h1V896.1h1V895.5h1V895.9h1V896h1V895.4h1V890.8h1V895.1h1V894.5h1V893.3h1V890.8h1V890.8h1V896.3h1V896.6h1V894.7h1V895.5h1V895.9h1V890.8h1V894.2h1V895.2h1V897.4h1V896h1V897.5h1V894.5h1V893.1h1V892.2h1V894.4h1V895.1h1V893.6h1V891.4h1V895.6h1V896.8h1V895.6h1V896.5h1V897.5h1V898.1h1V897.7h1V896.4h1V898.8h1V899h1V899.2h1V897.4h1V899.8h1V899.7h1V900.4h1V898.9h1V901.1h1V900.1h1V901.6h1V899.9h1V900.4h1V900.1h1V900.5h1V900.9h1V900.5h1V899.3h1V899.9h1V900.1h1V900.9h1V901.2h1V898.8h1V900.2h1V898.6h1V899.3h1V896.4h1V895.8h1V895.2h1V898.3h1V898h1V898.4h1V896.5h1V896.3h1V895.8h1V893.3h1V890.8h1V894.6h1V893.2h1V890.8h1V895.9h1V895.3h1V896.6h1V895.4h1V890.8h1V890.8h1V896.5h1V894.8h1V896.6h1V890.8h1V898.5h1V890.8h1V893h1V894.9h1V895.6h1V894.2h1V890.8h1V893.7h1V892.4h1V898.1h1V890.8h1V893h1V895.3h1V890.8h1V895.2h1V895.9h1V892.4h1V890.8h1V890.8h1V890.8h1V894.2h1V892.3h1V893.4h1V893.8h1V893.3h1V892.9h1V893.2h1V892.8h1V893.7h1V893.9h1V892h1V892.7h1V890.8h1V892.3h1V895.7h1V893.1h1V895.1h1V890.8h1V892h1V892.1h1V894.8h1V895.2h1V892.6h1V892.9h1V894.8h1V893.4h1V894h1V890.8h1V896.5h1V894.3h1V896.2h1V892.5h1V894.8h1V892.8h1V893.9h1V892.6h1V892.3h1V890.8h1V890.8h1V892.7h1V896.5h1V890.8h1V890.8h1V893.3h1V895.3h1V895.5h1V897.3h1V899.2h1V894.5h1V890.8h1V890.8h1V894.4h1V893.5h1V895.7h1V892.9h1V892.8h1V895h1V896h1V894.9h1V894.7h1V892.3h1V890.8h1V895.5h1V893.3h1V893h1V893.5h1V892.3h1V890.8h1V893.9h1V894.6h1V890.8h1V894.7h1V891.9h1V892.8h1V894.6h1V896.1h1V894.1h1V894.3h1V896h1V892.3h1V894.6h1V890.8h1V893.1h1V893.8h1V894.6h1V894.4h1V890.8h1V893.2h1V890.8h1V890.8h1V895.8h1V892.5h1V895.1h1V892.7h1V896h1V893.4h1V892.6h1V893.1h1V895.1h1V890.8h1V892.8h1V894.8h1V890.8h1V894.5h1V890.8h1V890.8h1V893.6h1V896h1V894.9h1V890.8h1V890.8h1V893.7h1V895.7h1V890.9h1V894h1V890.9h1V895.5h1V896.1h1V891h1V891h1V893.9h1V893.4h1V893.8h1V891.1h1V891.1h1V896.1h1V894.3h1V895.7h1V893.1h1V896.6h1V894.8h1V892.6h1V893.9h1V893.8h1V895.6h1V896.7h1V892.4h1V891.1h1V893.2h1V891h1V891h1V894.6h1V893.8h1V893.7h1V893.8h1V895.1h1V892.5h1V890.9h1V890.9h1V894.2h1V894.4h1V895.7h1V890.8h1V892.7h1V893.8h1V892.4h1V890.8h1V894.3h1V892.8h1V895.1h1V890.8h1V893.3h1V895.8h1V894.2h1V890.8h1V890.8h1V893.8h1V894.3h1V892.2h1V890.8h1V895.4h1V893h1V895.9h1V892.7h1V896h1V890.8h1V892.9h1V893.5h1V894.6h1V895.6h1V898.7h1V890.8h1V890.8h1V894.5h1V893.7h1V893.8h1V890.8h1V893.9h1V893h1V897.9h1V890.8h1V893.4h1V894.3h1V890.8h1V898.2h1V890.8h1V896.3h1V895.1h1V894.2h1V893h1V895h1V894.8h1V894.6h1V894.1h1V894.2h1V893.9h1V890.8h1V893.2h1V893.9h1V894.7h1V892.7h1V894.7h1V894.3h1V890.8h1V894.8h1V890.8h1V890.8h1V893.6h1V890.8h1V894.5h1V892.5h1V890.8h1V893.9h1V890.8h1V894.1h1V893.9h1V893.1h1V890.8h1V894.1h1V891.8h1V893.4h1V890.8h1V893.6h1V894.2h1V894.4h1V896.1h1V890.8h1V896.1h1V894.7h1V896.1h1V894h1V890.9h1V894h1V894.4h1V890.9h1V894.9h1V892.9h1V890.9h1V897.3h1V893.2h1V896.1h1V890.9h1V896.1h1V896.8h1V890.9h1V895.5h1V896h1V893.3h1V890.9h1V890.9h1V890.9h1V897.3h1V896.4h1V897.2h1V890.9h1V895.5h1V890.9h1V892.8h1V895.1h1V893.9h1V895.6h1V892.4h1V893.4h1V896.9h1V890.9h1V894.9h1V893.3h1V895.1h1V895.1h1V894.5h1V894.8h1V893.5h1V892.6h1V894.9h1V892.5h1V890.9h1V892.6h1V890.9h1V895h1V894.3h1V894.5h1V893.5h1V893.4h1V892.4h1V892.6h1V890.9h1V890.9h1V890.9h1V892.8h1V892h1V893.6h1V894.8h1V890.9h1V894h1V892h1V890.9h1V890.9h1V892.1h1V890.9h1V892.8h1V893.1h1V894.2h1V892.7h1V890.9h1V892.4h1V894.6h1V890.9h1V894.2h1V893.6h1V890.9h1V890.9h1V892.5h1V896.5h1V894h1V895.6h1V893h1V890.9h1V894h1V894.7h1V894.8h1V894.8h1V892.8h1V899h1V892.5h1V895.1h1V897h1V890.9h1V895.5h1V893.3h1V895.2h1V890.9h1V894.2h1V890.9h1V893.7h1V897.6h1V890.9h1V890.9h1V894.4h1V892.7h1V892.5h1V894.3h1V890.9h1V892.8h1V893.8h1V890.9h1V895.8h1V895.1h1V893.4h1V890.9h1V894.7h1V894.4h1V894.1h1V892.2h1V893.1h1V892.4h1V890.9h1V892.6h1V890.9h1V892.9h1V894.1h1V893.3h1V893.3h1V894.2h1V893.3h1V892h1V892.1h1V893.7h1V892.9h1V893.2h1V892.3h1V893.7h1V890.9h1V895.3h1V890.9h1V893.3h1V892.8h1V892.2h1V894.2h1V893.5h1V895.1h1V894.3h1V894.3h1V893.2h1V895h1V893.3h1V893.4h1V894.8h1V898.1h1V893.3h1V896.9h1V895.3h1V896.6h1V893.6h1V896.2h1V896.4h1V895.9h1V890.9h1V896.7h1V890.9h1V897.5h1V890.9h1V890.9h1V890.9h1V897.6h1V894.3h1V890.9h1V890.9h1V890.9h1V894.2h1V894.9h1V893h1V893.7h1V890.9h1V894.7h1V894.4h1V896.2h1V894.6h1V897.4h1V890.9h1V895.4h1V894.5h1V896h1V890.9h1V890.9h1V890.9h1V890.9h1V894.8h1V894.4h1V894.1h1V895.3h1V892.2h1V892.4h1V890.9h1V890.9h1V893.7h1V890.9h1V892.7h1V892.6h1V890.9h1V891.9h1V892.9h1V894.3h1V891.9h1V892.6h1V893.6h1V894.1h1V895.4h1V892.9h1V890.9h1V895.3h1V892.5h1V892.2h1V895h1V894.1h1V892.8h1V890.9h1V896h1V890.9h1V897h1V890.9h1V890.9h1V890.9h1V895.7h1V896.2h1V890.9h1V892.8h1V895.4h1V895.2h1V890.9h1V895.8h1V894.4h1V896.3h1V895.1h1V895.9h1V896.2h1V890.9h1V894.4h1V896.2h1V890.9h1V895.5h1V890.9h1V896h1V892.6h1V892.3h1V893.7h1V893.7h1V894.9h1V893h1V895.8h1V890.9h1V895.7h1V890.9h1V890.9h1V892.6h1V893.6h1V892.1h1V894.3h1V896.5h1V893.5h1V891.9h1V892.5h1V892h1V892.8h1V892.9h1V893.7h1V893.3h1V890.9h1V895.8h1V893.8h1V894.1h1V890.9h1V894.3h1V894.3h1V893.5h1V890.9h1V894.1h1V894.6h1V894.7h1V890.9h1V893.8h1V892.1h1V895.9h1V890.9h1V890.9h1V893.8h1V894.1h1V895.6h1V890.9h1V895.5h1V890.9h1V894.5h1V895.5h1V890.9h1V895.6h1V890.9h1V894.9h1V897.5h1V895.7h1V893.5h1V894.1h1V890.9h1V893.2h1V890.9h1V890.9h1V892.5h1V890.9h1V896.3h1V895.9h1V894.7h1V892.6h1V893h1V893.6h1V890.9h1V892.8h1V894.2h1V895.3h1V895.1h1V895.1h1V892.2h1V895h1V894.7h1V894.2h1V895.2h1V896.8h1V893h1V894.1h1V895.5h1V892.7h1V892.3h1V894.4h1V893.8h1V892.2h1V890.9h1V892.6h1V890.8h1V890.8h1V890.8h1V890.8h1V890.8h1V890.8h1V890.8h1V890.8h1V890.8h1V890.8h1V890.8h1V890.8h1V890.8h1V890.8h1V890.8h1V890.8h1V890.8h1V890.8h1V890.8h1V890.8h1V890.8h1V890.8h1V890.8h1V890.8h1V890.8h1V890.8h1V890.8h1V890.8h1V890.8h1V890.8h1V890.8h1V890.8h1V890.8h1V890.8h1V890.8h1V890.8h1V890.8h1V890.8h1V890.8h1V890.8h1V890.8h1V890.8h1V890.8h1V890.8h1V890.8h1V890.8h1V890.8h1V890.8h1V890.8h1V890.8h1V890.8h1V890.8h1V890.8h1V890.8h1V890.8h1V890.8h1V890.8h1V890.8h1V890.8h1V890.8h1V890.8h1V890.8h1V890.8h1V890.8h1V890.8h1V890.8h1V890.8h1V890.8h1V890.8h1V890.8h1V890.8h1V890.8h1V890.8h1V890.8h1V890.8h1V890.8h1V890.8h1V892.5h1V893h1V890.9h1V890.9h1V892.8h1V892.3h1V893.9h1V893.7h1V892.6h1V894.4h1V893.3h1V893h1V894.4h1V896.5h1V896.3h1V890.9h1V895h1V896.9h1V893.3h1V890.9h1V896.8h1V893.6h1V890.9h1V890.9h1V896.9h1V893.3h1V892.8h1V890.9h1V890.9h1V894.2h1V894.4h1V896h1V890.9h1V895.4h1V895.6h1V890.9h1V896.3h1V893.7h1V894.4h1V896.2h1V897h1V893h1V897.6h1V890.9h1V896.3h1V895.7h1V893.8h1V893.1h1V896.3h1V893h1V894.9h1V895.7h1V890.9h1V893.5h1V890.9h1V895.2h1V890.9h1V892.4h1V893.6h1V893.3h1V894.9h1V890.9h1V894h1V893.5h1V893h1V892.7h1V894.6h1V893.3h1V892h1V894.2h1V890.9h1V892.4h1V893h1V890.9h1V891.9h1V893.6h1V894.4h1V894h1V893.6h1V893.7h1V892h1V893.6h1V890.9h1V892.8h1V892.7h1V892.6h1V895.4h1V893.2h1V894.1h1V893.5h1V892.8h1V890.9h1V894.1h1V892.6h1V893.1h1V894.4h1V895.7h1V897.7h1V893.3h1V893.6h1V893.8h1V894.8h1V899.4h1V896.6h1V896.1h1V894.7h1V895.7h1V893.3h1V894.8h1V894.5h1V895.7h1V890.9h1V892.4h1V897.8h1V895h1V890.9h1V895.1h1V890.9h1V890.9h1V897.6h1V893.4h1V892.6h1V894.9h1V894.9h1V892.6h1V892.6h1V893h1V893h1V895.1h1V894.4h1V890.9h1V892.7h1V894.8h1V892.9h1V890.9h1V890.9h1V890.9h1V891.9h1V894.2h1V894.2h1V892.4h1V894.3h1V892.3h1V893.3h1V892.6h1V893.8h1V892.7h1V893.9h1V893.1h1V892.2h1V895.2h1V890.9h1V894.4h1V890.9h1V890.9h1V895.4h1V893h1V896h1V894h1V890.9h1V892.7h1V892.3h1V894.5h1V896.2h1V895.1h1V894.5h1V890.9h1V893.1h1V890.9h1V890.9h1V890.9h1V890.9h1V896.3h1V890.9h1V898.9h1V890.9h1V899.2h1V890.9h1V890.9h1V895.6h1V892.9h1V892.9h1V890.9h1V890.9h1V895.3h1V895.5h1V899h1V895.7h1V890.9h1V893.5h1V892.4h1V892.6h1V897.3h1V895.9h1V898.2h1V894.7h1V890.9h1V890.9h1V895.2h1V896.1h1V890.9h1V892.1h1V892.8h1V890.9h1V896.9h1V892.6h1V890.9h1V893.8h1V892.2h1V894.4h1V893h1V890.9h1V892.1h1V894h1V891.9h1V893.1h1V892.2h1V893.9h1V894.1h1V894h1V893h1V893.4h1V893.2h1V890.9h1V894.1h1V892.8h1V893.9h1V892.1h1V893.4h1V896.1h1V896.4h1V894.4h1V893.9h1V894.7h1V895.3h1V895h1V892.6h1V892.6h1V897.4h1V897.7h1V894.5h1V890.9h1V894.9h1V894.3h1V894.7h1V896.6h1V896.7h1V915.9h-1V916.4h-1V918.9h-1V917.9h-1V917.6h-1V921.9h-1V917.4h-1V915h-1V914.8h-1V920h-1V920.5h-1V916.6h-1V916.6h-1V918.8h-1V918.7h-1V919h-1V917h-1V916h-1V918.8h-1V920.4h-1V919h-1V920.2h-1V919.6h-1V921.9h-1V919.5h-1V918.9h-1V919.6h-1V919.3h-1V918.9h-1V919.6h-1V920.6h-1V919.7h-1V920.7h-1V918.4h-1V920.4h-1V921.9h-1V920.4h-1V919.4h-1V920.6h-1V918.9h-1V921.9h-1V920.6h-1V915h-1V921.9h-1V920.5h-1V920.4h-1V921.9h-1V915.7h-1V917.7h-1V921.9h-1V921.9h-1V917.5h-1V916.4h-1V915.6h-1V915.8h-1V919.8h-1V920.4h-1V919.2h-1V921.9h-1V917.2h-1V914.3h-1V918.5h-1V917.7h-1V921.9h-1V921.9h-1V919.6h-1V919.4h-1V916.9h-1V921.9h-1V921.9h-1V915.5h-1V921.9h-1V915.3h-1V921.9h-1V917h-1V921.9h-1V921.9h-1V921.9h-1V921.9h-1V919.3h-1V921.9h-1V917.5h-1V918.8h-1V917.6h-1V919.1h-1V920.7h-1V919.9h-1V921.9h-1V918.9h-1V917.7h-1V919.8h-1V916.5h-1V921.9h-1V921.9h-1V919.4h-1V921.9h-1V918.6h-1V920.3h-1V919.9h-1V918.8h-1V919.6h-1V918.6h-1V920.2h-1V919.6h-1V920.7h-1V919.3h-1V920.8h-1V919.1h-1V919.5h-1V920.7h-1V921.9h-1V921.9h-1V921.9h-1V920.1h-1V919.2h-1V919.5h-1V921.9h-1V918h-1V918.3h-1V919.3h-1V919.8h-1V920.6h-1V920h-1V917.4h-1V917.7h-1V920.4h-1V919.6h-1V916.4h-1V921.9h-1V921.9h-1V918.5h-1V921.9h-1V917.9h-1V913.9h-1V920.6h-1V921.9h-1V917.9h-1V919.3h-1V917.4h-1V919.1h-1V917.6h-1V918.3h-1V918.1h-1V917.9h-1V914.1h-1V917.3h-1V918.5h-1V918.9h-1V919.2h-1V915.9h-1V916.3h-1V918.5h-1V919.2h-1V920.4h-1V918.4h-1V921.9h-1V919.4h-1V919.2h-1V918.4h-1V919.2h-1V916.8h-1V919.9h-1V920.4h-1V920.1h-1V921.9h-1V918.8h-1V920.8h-1V919.6h-1V919.2h-1V919.1h-1V917.5h-1V918.9h-1V921.1h-1V921.9h-1V919.8h-1V920.1h-1V921.9h-1V918h-1V921.1h-1V919.9h-1V917.1h-1V920.1h-1V920.1h-1V919.2h-1V918h-1V921.9h-1V918.2h-1V918.8h-1V919.1h-1V920.8h-1V921.9h-1V917.3h-1V921.9h-1V919.1h-1V921.9h-1V917.9h-1V918.9h-1V919.5h-1V916.8h-1V919.4h-1V918.5h-1V916.2h-1V918h-1V921.9h-1V913.7h-1V919.3h-1V914.1h-1V915.2h-1V917.5h-1V919.2h-1V916.5h-1V921.9h-1V916h-1V917.1h-1V921.9h-1V915.7h-1V918.6h-1V917.6h-1V921.9h-1V921.9h-1V920h-1V919.8h-1V914.5h-1V921.9h-1V921.9h-1V918.5h-1V916h-1V921.9h-1V919.8h-1V917h-1V918.3h-1V921.9h-1V917.7h-1V916.2h-1V917.9h-1V920.1h-1V920.2h-1V918.6h-1V920h-1V919.8h-1V919.6h-1V920.9h-1V919.6h-1V921.9h-1V921.9h-1V919.4h-1V920.1h-1V922h-1V922h-1V922h-1V922h-1V922h-1V922h-1V922h-1V922h-1V922h-1V922h-1V922h-1V922h-1V922h-1V922h-1V922h-1V922h-1V922h-1V922h-1V922h-1V922h-1V922h-1V922h-1V922h-1V922h-1V922h-1V922h-1V922h-1V922h-1V922h-1V922h-1V922h-1V922h-1V922h-1V922h-1V922h-1V922h-1V922h-1V922h-1V922h-1V922h-1V922h-1V922h-1V922h-1V922h-1V922h-1V922h-1V922h-1V922h-1V922h-1V922h-1V922h-1V922h-1V922h-1V922h-1V922h-1V922h-1V922h-1V922h-1V922h-1V922h-1V922h-1V922h-1V922h-1V922h-1V922h-1V922h-1V922h-1V922h-1V922h-1V922h-1V922h-1V922h-1V922h-1V922h-1V922h-1V922h-1V922h-1V920.7h-1V921.9h-1V920.4h-1V918.7h-1V919h-1V920.2h-1V920.1h-1V917.9h-1V918.1h-1V919.6h-1V914.6h-1V918h-1V918h-1V917.5h-1V918.8h-1V920.3h-1V918.4h-1V916.5h-1V916.6h-1V919.3h-1V919.7h-1V921.9h-1V918.9h-1V920.3h-1V920.3h-1V917.2h-1V917.2h-1V917.6h-1V921.9h-1V920.5h-1V921.9h-1V921.9h-1V919.5h-1V921.9h-1V919h-1V919.3h-1V915.8h-1V913.6h-1V918.3h-1V921.9h-1V916.6h-1V921.9h-1V918.1h-1V917.9h-1V921.9h-1V918.5h-1V921.9h-1V918.6h-1V918.4h-1V918.8h-1V921.9h-1V921.9h-1V916.3h-1V920.7h-1V918.2h-1V921.9h-1V917.9h-1V918.1h-1V918.5h-1V921.9h-1V919.5h-1V919h-1V917.8h-1V921.9h-1V918.4h-1V919.8h-1V915.6h-1V921.9h-1V920h-1V918.6h-1V920.4h-1V920h-1V920.8h-1V920.1h-1V921h-1V919.2h-1V915.2h-1V918.1h-1V920.8h-1V919.9h-1V920.4h-1V921.9h-1V921.9h-1V917.6h-1V921.9h-1V917.3h-1V920.1h-1V917.7h-1V918.5h-1V918.3h-1V920.5h-1V920.3h-1V917.8h-1V921.9h-1V916.9h-1V921.9h-1V915h-1V918.7h-1V921.9h-1V917.8h-1V916.3h-1V917h-1V917.8h-1V917.8h-1V917.2h-1V921.9h-1V917.2h-1V916.2h-1V920.1h-1V921.9h-1V915.3h-1V916.9h-1V921.9h-1V921.9h-1V921.9h-1V914.8h-1V921.9h-1V917.7h-1V921.9h-1V920h-1V918.1h-1V917.4h-1V920.4h-1V920h-1V916.5h-1V921.9h-1V919.3h-1V918.1h-1V918.6h-1V919.8h-1V920.5h-1V920.6h-1V918.8h-1V920.5h-1V920.9h-1V921.9h-1V920.4h-1V919.7h-1V921.9h-1V919.6h-1V921.9h-1V921.9h-1V920.6h-1V920.5h-1V918.4h-1V918.1h-1V917.7h-1V918.4h-1V921.9h-1V921.9h-1V921.9h-1V921.9h-1V915.4h-1V917.8h-1V916.5h-1V921.9h-1V914.3h-1V917.1h-1V916.5h-1V918.6h-1V917.6h-1V921.9h-1V919.2h-1V919.2h-1V919h-1V918.3h-1V921.9h-1V921.9h-1V921.9h-1V918.1h-1V916.5h-1V921.9h-1V921.9h-1V921.9h-1V917h-1V921.9h-1V915.6h-1V921.9h-1V916.6h-1V917.2h-1V915.1h-1V918.5h-1V914.8h-1V917.8h-1V915.8h-1V920.1h-1V914.7h-1V919h-1V919.7h-1V919.4h-1V917.9h-1V919.6h-1V918.1h-1V918.1h-1V918.7h-1V919.2h-1V917.7h-1V920.4h-1V919.6h-1V919.9h-1V921.9h-1V918.5h-1V921.9h-1V919.8h-1V920.7h-1V920.3h-1V920.4h-1V919.9h-1V920.8h-1V920.5h-1V919.2h-1V919h-1V919.6h-1V919.7h-1V919.2h-1V919.3h-1V921.9h-1V920.6h-1V921.9h-1V920.4h-1V919.2h-1V921h-1V919.1h-1V918.7h-1V917.8h-1V921.9h-1V919.8h-1V918h-1V917.6h-1V921.9h-1V919.1h-1V920.1h-1V921.9h-1V918.1h-1V919.9h-1V919.9h-1V917.8h-1V921.9h-1V921.9h-1V916.1h-1V919.7h-1V921.9h-1V918.9h-1V921.9h-1V917.2h-1V919.3h-1V916.7h-1V921.9h-1V917.1h-1V916.8h-1V920.2h-1V911.5h-1V920.2h-1V917.2h-1V918.6h-1V918.2h-1V918.5h-1V921.9h-1V919.9h-1V917.3h-1V918.3h-1V916.5h-1V919.9h-1V921.9h-1V921.9h-1V918.5h-1V918.1h-1V921.9h-1V917h-1V920.2h-1V921.9h-1V920.6h-1V919.4h-1V919.4h-1V920h-1V921.9h-1V920.7h-1V921.9h-1V921.9h-1V921h-1V918.1h-1V921.9h-1V917.4h-1V919.8h-1V920.7h-1V920.1h-1V921.9h-1V921.9h-1V921.9h-1V919.9h-1V920.1h-1V919.3h-1V918.9h-1V919h-1V919.5h-1V917.8h-1V921.9h-1V920.3h-1V921.9h-1V920.6h-1V918.2h-1V920.5h-1V919.3h-1V919h-1V917.3h-1V917.8h-1V917.2h-1V918.9h-1V917.2h-1V921.9h-1V915.5h-1V919h-1V920.2h-1V917.4h-1V918.7h-1V917.8h-1V920.2h-1V921.9h-1V917.7h-1V921.9h-1V914.5h-1V916.5h-1V916.8h-1V921.9h-1V921.9h-1V921.9h-1V919.7h-1V917.2h-1V916.7h-1V921.9h-1V916h-1V917.1h-1V921.9h-1V917.6h-1V919.4h-1V914.2h-1V921.9h-1V919.4h-1V918.1h-1V921.9h-1V918h-1V918.1h-1V921.9h-1V918h-1V917.5h-1V917.4h-1V917.4h-1V922h-1V915.1h-1V917.6h-1V919.1h-1V919.8h-1V922h-1V920.1h-1V921.1h-1V919.1h-1V922h-1V919.2h-1V918.6h-1V918.9h-1V922h-1V918.8h-1V922h-1V919.9h-1V917.8h-1V922h-1V920h-1V922h-1V922h-1V917.2h-1V922h-1V918.8h-1V918h-1V920.1h-1V918h-1V918.6h-1V919.4h-1V922h-1V918.7h-1V919.3h-1V919h-1V919h-1V918.9h-1V918.4h-1V919.6h-1V919.2h-1V917.7h-1V915.9h-1V922h-1V916.7h-1V922h-1V917.8h-1V919h-1V922h-1V915.1h-1V919.5h-1V919.1h-1V922h-1V919.2h-1V918.5h-1V918.7h-1V922h-1V922h-1V914.7h-1V918.4h-1V918.1h-1V919.5h-1V919.4h-1V922h-1V917.2h-1V920.1h-1V915.4h-1V919.6h-1V917.4h-1V922h-1V920.9h-1V919.5h-1V919h-1V922h-1V922h-1V918.1h-1V918.2h-1V919.7h-1V922h-1V917h-1V920.4h-1V919.4h-1V922h-1V920.1h-1V918.5h-1V920.6h-1V922h-1V917.8h-1V919h-1V919.4h-1V921.9h-1V921.9h-1V920.5h-1V918.6h-1V918.8h-1V919.3h-1V919.3h-1V918h-1V921.8h-1V921.8h-1V920h-1V921.7h-1V920.3h-1V917.2h-1V916.7h-1V918.6h-1V919.7h-1V920.3h-1V918.5h-1V916.5h-1V919.2h-1V917.5h-1V919h-1V915.6h-1V921.7h-1V921.7h-1V918.3h-1V919.9h-1V918.1h-1V921.8h-1V921.8h-1V915.5h-1V916.2h-1V921.9h-1V919.2h-1V921.9h-1V916.4h-1V919.7h-1V922h-1V922h-1V916.7h-1V916.7h-1V920h-1V922h-1V922h-1V917.9h-1V922h-1V917.6h-1V920.4h-1V922h-1V917h-1V919.9h-1V920.2h-1V919h-1V915.9h-1V920.2h-1V918h-1V919.8h-1V917h-1V922h-1V922h-1V919.9h-1V922h-1V918h-1V918.2h-1V919.4h-1V919.6h-1V922h-1V918.6h-1V920.5h-1V916.6h-1V918.2h-1V918.5h-1V915.8h-1V918.6h-1V919.5h-1V921.2h-1V917.7h-1V922h-1V917.7h-1V919.5h-1V922h-1V920.3h-1V920.1h-1V919.2h-1V919.1h-1V916.8h-1V922h-1V920.4h-1V918.5h-1V917.1h-1V918.2h-1V917.6h-1V919.8h-1V920h-1V917.2h-1V918.6h-1V917.7h-1V922h-1V922h-1V918.3h-1V915.6h-1V913.5h-1V918.5h-1V917.7h-1V919.6h-1V922h-1V922h-1V916.9h-1V919.9h-1V922h-1V922h-1V920.8h-1V919.8h-1V918.6h-1V919.8h-1V917.9h-1V920h-1V917.2h-1V919.4h-1V917.5h-1V922h-1V919.5h-1V919.9h-1V917.5h-1V920.1h-1V920.5h-1V916.4h-1V918.4h-1V920.6h-1V920.9h-1V922h-1V918.5h-1V919.1h-1V917.2h-1V920.3h-1V922h-1V920.3h-1V920.8h-1V919.4h-1V919.6h-1V920.3h-1V920.2h-1V919.9h-1V919.4h-1V919h-1V918.9h-1V920.8h-1V919.3h-1V922h-1V922h-1V922h-1V920.1h-1V916.4h-1V916.3h-1V922h-1V917.1h-1V920.3h-1V922h-1V916.4h-1V920.1h-1V918.8h-1V922h-1V918.9h-1V916.1h-1V916.8h-1V919.4h-1V922h-1V916.6h-1V922h-1V914.8h-1V919.2h-1V916.9h-1V922h-1V922h-1V918.8h-1V915.6h-1V916.4h-1V916.4h-1V922h-1V919.6h-1V918.1h-1V922h-1V918.8h-1V915.6h-1V916.2h-1V915.9h-1V914.2h-1V913.7h-1V914.1h-1V917.6h-1V917h-1V916.4h-1V914h-1V914.2h-1V912.8h-1V914h-1V910.9h-1V912.3h-1V912.4h-1V912.8h-1V913.5h-1V912.1h-1V912h-1V912.3h-1V912.9h-1V912.4h-1V912.8h-1V910.6h-1V912.5h-1V912h-1V913.9h-1V912.1h-1V913.3h-1V912.8h-1V915.4h-1V913.2h-1V913.7h-1V914.3h-1V916.4h-1V914.8h-1V914.2h-1V915.5h-1V916.5h-1V916.9h-1V916.6h-1V917.5h-1V921.4h-1V919.3h-1V918.9h-1V917.7h-1V920.6h-1V919.3h-1V918.5h-1V916.8h-1V916.6h-1V917.2h-1V918.5h-1V919.4h-1V922h-1V917.2h-1V917.4h-1V917.3h-1V916.5h-1V915.1h-1V922h-1V922h-1V919.3h-1V917.8h-1V918.7h-1V922h-1V918.1h-1V917h-1V918.1h-1V918.4h-1V918h-1V922h-1V916.7h-1V917.4h-1V918.6h-1V919.9h-1V919h-1V915.2h-1V919.2h-1V918.6h-1V922h-1V922h-1V917h-1V908.1h-1V907.8h-1V908.4h-1V908.1h-1V907.7h-1V907.7h-1V907.9h-1V908.5h-1V908.4h-1V908.6h-1V908.4h-1V908.2h-1V908.1h-1V908.2h-1V909h-1V908.7h-1V908.8h-1V908.2h-1V909h-1V909.2h-1V908.7h-1V908.9h-1V909.2h-1V908.5h-1V908.6h-1V909.6h-1V909.8h-1V909.1h-1V909.2h-1V910.1h-1V909.3h-1V908.8h-1V909.1h-1V909.5h-1V910.4h-1V910.3h-1V909.8h-1V909.8h-1V909.2h-1V911.1h-1V911.2h-1V911.3h-1V910.5h-1V909h-1V910.1h-1V911.1h-1V910.9h-1V909h-1V912h-1V912h-1V912.1h-1V911.4h-1V911.2h-1V911.8h-1V911.7h-1V911.1h-1V910.9h-1V911.8h-1V911.3h-1V910.6h-1V912h-1V912.9h-1V911h-1V913h-1V911h-1V911.6h-1V912h-1V911.4h-1V911.4h-1V913.4h-1V911.9h-1V912.7h-1V911.8h-1V911.5h-1V912.6h-1V912.7h-1V911.8h-1V912.3h-1V912.8h-1V914h-1V912.5h-1V913.2h-1V912.7h-1V911.7h-1V914h-1V914.6h-1V916.2h-1V916.4h-1V914.3h-1V914.6h-1V915.4h-1V914.7h-1V915h-1V915.9h-1V916.9h-1V916.6h-1V916.3h-1V915.7h-1V915.9h-1V919.3h-1V915.9h-1V916.3h-1V920.1h-1V915.6h-1V917.5h-1V919.1h-1V921.3h-1V918.4h-1V918.5h-1V919h-1V922h-1V922h-1V920h-1V913.7h-1V918.8h-1V917.1h-1V917.5h-1V916.6h-1V915.5h-1V922h-1V914h-1V918.9h-1V922h-1V918.1h-1V922h-1V915.9h-1V922h-1V920.1h-1V920.1h-1V918.2h-1V917.4h-1V917.8h-1V922h-1V915.9h-1V916.1h-1V922h-1V917.4h-1V922h-1V916.5h-1V918.5h-1V912.4h-1V906.9h-1V906.8h-1V906.8h-1V907.1h-1V907h-1V907.1h-1V906.9h-1V906.9h-1V906.9h-1V907.1h-1V907.1h-1V907.1h-1V907.1h-1V907h-1V907.2h-1V906.9h-1V907h-1V907.2h-1V907h-1V907.1h-1V907h-1V907h-1V907.1h-1V907h-1V907.3h-1V907.2h-1V907.4h-1V907.3h-1V907.4h-1V907.2h-1V907.2h-1V907.3h-1V907.4h-1V907.3h-1V907.3h-1V907.2h-1V907.4h-1V907.3h-1V907.5h-1V907.3h-1V907.6h-1V907.3h-1V907.2h-1V907.3h-1V907.3h-1V907.3h-1V907.4h-1V907.4h-1V907.8h-1V907.8h-1V908h-1V907.9h-1V907.9h-1V907.5h-1V907.7h-1V908.2h-1V907.6h-1V907.8h-1V907.6h-1V908.1h-1V908.4h-1V907.9h-1V907.9h-1V908.3h-1V908.1h-1V907.8h-1V908.5h-1V908.4h-1V908h-1V908.1h-1V908.4h-1V909.3h-1V908.8h-1V908.6h-1V909.2h-1V909.4h-1V909.8h-1V909.3h-1V909.3h-1V909.5h-1V910.2h-1V911.4h-1V911.4h-1V912.3h-1V911.3h-1V911.9h-1V912.1h-1V914h-1V914.6h-1V915.5h-1V914.5h-1V914.8h-1V915.5h-1V914.2h-1V915.3h-1V917.4h-1V918.9h-1V920.7h-1V918.2h-1V920.5h-1V919h-1V920.6h-1V919.5h-1V917.5h-1V917.8h-1V922h-1V922h-1V920.1h-1V919.5h-1V922h-1V922h-1V922h-1V919.2h-1V917h-1V918.3h-1V918.8h-1V914.5h-1V917.6h-1V917.3h-1V920h-1V918.5h-1V917h-1V916.5h-1V919.3h-1V920.2h-1V915.8h-1V922h-1V922h-1V922h-1V922h-1V922h-1V922h-1V922h-1V917.7h-1V922h-1V916.5h-1V922h-1V919.6h-1V917.9h-1V919.7h-1V917.7h-1V920.6h-1V922h-1V922h-1V922h-1V922h-1V917.5h-1V920.2h-1V922h-1V920.2h-1V919h-1V919.2h-1V919.7h-1V920.8h-1V918.2h-1V922h-1V913.7h-1V906.7h-1V906.7h-1V906.7h-1V906.7h-1V906.7h-1V906.7h-1V906.7h-1V906.7h-1V906.7h-1V906.7h-1V906.7h-1V906.8h-1V906.7h-1V906.7h-1V906.7h-1V906.7h-1V906.8h-1V906.8h-1V906.7h-1V906.7h-1V906.7h-1V906.8h-1V906.8h-1V906.8h-1V906.8h-1V906.8h-1V906.7h-1V906.8h-1V906.9h-1V906.8h-1V906.9h-1V907h-1V907.1h-1V907.1h-1V906.9h-1V907h-1V907.1h-1V907.1h-1V907.2h-1V907.3h-1V907.3h-1V907h-1V907.3h-1V907.4h-1V907.1h-1V907.2h-1V907.2h-1V907.6h-1V907.7h-1V907.8h-1V907.6h-1V907.8h-1V907.9h-1V907.5h-1V907.5h-1V907.6h-1V907.6h-1V908.1h-1V908.3h-1V907.7h-1V907.8h-1V908.3h-1V908.6h-1V908.7h-1V908.4h-1V908.9h-1V908.3h-1V909.3h-1V910h-1V910.1h-1V910.3h-1V910.6h-1V910.7h-1V911.1h-1V911.4h-1V911.3h-1V912h-1V911.8h-1V912h-1V913.1h-1V914.8h-1V914.4h-1V915.3h-1V916.6h-1V917h-1V916h-1V919.1h-1V917.7h-1V916.9h-1V918.4h-1V918.9h-1V919.6h-1V918h-1V920.3h-1V922h-1V920h-1V922h-1V922h-1V917h-1V922h-1V918.6h-1V915.6h-1V916.5h-1V918.7h-1V919.1h-1V917.7h-1V918.2h-1V917.3h-1V915h-1V914.6h-1V922h-1V920.5h-1V917.1h-1V918.2h-1V920.6h-1V916.9h-1V919.6h-1V922h-1V916.1h-1V913h-1V920.3h-1V916.7h-1V916h-1V916.3h-1V913.2h-1V922h-1V922h-1V918.7h-1V919.5h-1V917.9h-1V918.4h-1V918.3h-1V922h-1V916.4h-1V916.8h-1V922h-1V922h-1V922h-1V919.3h-1V915.1h-1V917.4h-1V919.7h-1V918.2h-1V917h-1V920.8h-1V919.8h-1V922h-1V920.8h-1V918.9h-1V920.2h-1V918.5h-1V920.1h-1V922h-1V920.4h-1V919.6h-1V919.8h-1V918.1h-1V919.6h-1V919.9h-1V922h-1V922h-1V920.5h-1V919.6h-1V917.2h-1V918.5h-1V919h-1V916.8h-1V920.5h-1V917.3h-1V917.8h-1V918.6h-1V917.3h-1V922h-1V922h-1V917.9h-1V917.4h-1V918.2h-1V916.3h-1V916.5h-1V915.9h-1V913.4h-1V916.2h-1V918h-1V917.8h-1V917.8h-1V916.6h-1V919.5h-1V918.2h-1V922h-1V915.6h-1V917.5h-1V917.3h-1V913.2h-1V918.2h-1V918.2h-1V922h-1V917.8h-1V922h-1V919.9h-1V915.6h-1V922h-1V922h-1V917.3h-1V919h-1V919.3h-1V922h-1V922h-1V918.9h-1V918.8h-1V916.6h-1V918.9h-1V922h-1V918.2h-1V918.5h-1V920.5h-1V922h-1V920.1h-1V919.6h-1V922h-1V920.7h-1V922h-1V922h-1V922h-1V922h-1V919.5h-1V922h-1V922h-1V922h-1V922h-1V920.4h-1V922h-1V920.6h-1V919h-1V918.8h-1V919.1h-1V918.4h-1V916.7h-1V922h-1V918.1h-1V918.7h-1V919.7h-1V919.4h-1V915.3h-1V920.6h-1V918.3h-1V918.3h-1V922h-1V919.9h-1V918.8h-1V916.3h-1V918.2h-1V917.6h-1V922h-1V922h-1V914.8h-1V913.8h-1V917.8h-1V918.1h-1V918.6h-1V914.3h-1V917.4h-1V913h-1V918h-1V916.8h-1V922h-1V917.8h-1V917.9h-1V916.8h-1V922h-1V919.5h-1V922h-1V922h-1V922h-1V917.8h-1V922h-1V919.3h-1V917.8h-1V919.5h-1V915.9h-1V918.8h-1V920.5h-1V920.3h-1V922h-1V919.4h-1V919.9h-1V919.3h-1V916.3h-1V920.5h-1V920h-1V919.8h-1V920.5h-1V920.4h-1V918.7h-1V919h-1V919.2h-1V920.7h-1V922h-1V918h-1V922h-1V918.5h-1V919.3h-1V922h-1V917h-1V920.1h-1V920.6h-1V917.9h-1V917.4h-1V919h-1V917.9h-1V918.6h-1V917.5h-1V919h-1V917.3h-1V917h-1V916.7h-1V918.9h-1V916.6h-1V922h-1V922h-1V922h-1V918.6h-1V917.2h-1V918.7h-1V916h-1V922h-1V915.9h-1V915.3h-1V922h-1V922h-1V920h-1V917.6h-1V922h-1V913.7h-1V920.4h-1V918.9h-1V917.1h-1V917.6h-1V918.5h-1V922h-1V914.6h-1V918.1h-1V922h-1V922h-1V918.9h-1V922h-1V919.6h-1V922h-1V918.6h-1V919.3h-1V922h-1V920.5h-1V922h-1V919.8h-1Z" fill="#def0e5"/><path d="M232 906.4 H1909" stroke="#9dbfab" stroke-width="0.9"/></svg>
<span class="t" id="t110" style="font-size:11px;line-height:18px;height:18px;color:#ffffff;left:236.49px;top:868px;transform-origin:0 50%;transform:scaleX(0.9108);">ロン～満貫～</span>
<span class="t" id="t111" style="font-size:11px;line-height:18px;height:18px;color:#ffffff;left:297.40px;top:868px;transform-origin:0 50%;letter-spacing:0.108px;">_OffVocal.wav</span>
<span class="t" id="t112" style="font-size:11px;line-height:18px;height:18px;color:#ffffff;left:236.49px;top:929px;transform-origin:0 50%;transform:scaleX(0.9108);">ロン～満貫～</span>
<span class="t" id="t113" style="font-size:11px;line-height:18px;height:18px;color:#ffffff;left:297.40px;top:929px;transform-origin:0 50%;letter-spacing:-0.037px;">_Inst.wav</span>
<svg style="left:79px;top:865px;" width="13" height="14" viewBox="0 0 13 14"><g><path d="M1.6 5 V4 A4.4 3.4 0 0 1 10.4 4 V4.6" fill="none" stroke="#48484c" stroke-width="1.3"/><rect x="0" y="4.6" width="12" height="8.2" rx="1.4" fill="#48484c"/></g></svg>
<svg style="left:104px;top:864.5px;" width="18" height="14" viewBox="0 0 18 14"><g><rect x="0.8" y="0.8" width="15.6" height="11.6" rx="1.8" fill="none" stroke="#ffffff" stroke-width="1.6"/><path d="M6.6 4 L4.1 6.6 L6.6 9.2 M10.6 4 L13.1 6.6 L10.6 9.2" fill="none" stroke="#ffffff" stroke-width="1.2"/></g></svg>
<div style="left:131px;top:862.2px;width:18px;height:17.6px;background:#3a3a3e;border-radius:4px;"></div>
<span class="t" id="t114" style="font-size:12px;line-height:19px;height:19px;color:#8a8a8a;left:135.50px;top:863px;transform-origin:0 50%;">S</span>
<div style="left:160px;top:862.2px;width:18px;height:17.6px;background:#e0463a;border-radius:4px;"></div>
<span class="t" id="t115" style="font-size:12px;line-height:19px;height:19px;color:#ffffff;font-weight:700;left:164.00px;top:863px;transform-origin:0 50%;">M</span>
<svg style="left:79px;top:926px;" width="13" height="14" viewBox="0 0 13 14"><g><path d="M1.6 5 V4 A4.4 3.4 0 0 1 10.4 4 V4.6" fill="none" stroke="#48484c" stroke-width="1.3"/><rect x="0" y="4.6" width="12" height="8.2" rx="1.4" fill="#48484c"/></g></svg>
<svg style="left:104px;top:925.5px;" width="18" height="14" viewBox="0 0 18 14"><g><rect x="0.8" y="0.8" width="15.6" height="11.6" rx="1.8" fill="none" stroke="#ffffff" stroke-width="1.6"/><path d="M6.6 4 L4.1 6.6 L6.6 9.2 M10.6 4 L13.1 6.6 L10.6 9.2" fill="none" stroke="#ffffff" stroke-width="1.2"/></g></svg>
<div style="left:131px;top:923.2px;width:18px;height:17.6px;background:#3a3a3e;border-radius:4px;"></div>
<span class="t" id="t116" style="font-size:12px;line-height:19px;height:19px;color:#8a8a8a;left:135.50px;top:924px;transform-origin:0 50%;">S</span>
<div style="left:160px;top:923.2px;width:18px;height:17.6px;background:#3a3a3e;border-radius:4px;"></div>
<span class="t" id="t117" style="font-size:12px;line-height:19px;height:19px;color:#8a8a8a;left:164.00px;top:924px;transform-origin:0 50%;">M</span>
<span class="t" id="t118" style="font-size:14px;line-height:22px;height:22px;color:#ffffff;font-weight:700;left:36.00px;top:892px;transform-origin:0 50%;letter-spacing:-1.500px;">A4</span>
<span class="t" id="t119" style="font-size:13px;line-height:21px;height:21px;color:#f0f0f0;font-weight:500;left:71.70px;top:892px;transform-origin:0 50%;transform:scaleX(0.8041);">オーディオ 4</span>
<span class="t" id="t120" style="font-size:12px;line-height:19px;height:19px;color:#77777b;left:207.00px;top:895px;transform-origin:0 50%;letter-spacing:-1.000px;">2.0</span>
<div style="left:0px;top:949px;width:231px;height:12px;background:#2e2e33;"></div>
<div style="left:232px;top:949px;width:1677px;height:12px;background:#2a2a2f;"></div>
<div style="left:628px;top:951px;width:126px;height:9px;background:#4d525d;border-radius:4.5px;"></div>
<div style="left:0px;top:961px;width:1920px;height:1px;background:#0b0b0d;"></div>
<div style="left:1911.2px;top:917.8px;width:7.2px;height:31.4px;background:#5a5f6a;border-radius:3.6px;"></div>
<div style="left:232px;top:552px;width:9px;height:409px;background:linear-gradient(to right, rgba(0,0,0,0.32), rgba(0,0,0,0));"></div>
<div style="left:1901px;top:592px;width:8px;height:357px;background:linear-gradient(to right, rgba(0,0,0,0), rgba(0,0,0,0.28));"></div>
<div style="left:860.7px;top:552px;width:2px;height:397px;background:#e84c3d;box-shadow:0 0 0 0.8px rgba(10,10,12,0.45);"></div>
<svg style="left:853px;top:551px;" width="17" height="16" viewBox="0 0 17 16"><path d="M2.4 1.2 H14.6 Q15.7 1.2 15.7 2.3 V6.8 L8.7 14 L1.3 6.8 V2.3 Q1.3 1.2 2.4 1.2 Z" fill="#e84c3d" stroke="#141416" stroke-width="1.3" paint-order="stroke" stroke-linejoin="round"/></svg>
<div style="left:860.7px;top:560px;width:2px;height:20px;background:#e84c3d;"></div>
<div style="left:0px;top:962px;width:1920px;height:47px;background:#18181b;"></div>
<div style="left:781px;top:962px;width:118px;height:47px;background:#000000;"></div>
<div style="left:781px;top:1007px;width:118px;height:2px;background:#e64b3d;"></div>
<span class="t" id="t121" style="font-size:13px;line-height:21px;height:21px;color:#8e8e8e;left:580.80px;top:986px;transform-origin:0 50%;transform:scaleX(0.7500);">メディア</span>
<span class="t" id="t122" style="font-size:13px;line-height:21px;height:21px;color:#8e8e8e;left:706.64px;top:986px;transform-origin:0 50%;transform:scaleX(0.7139);">カット</span>
<span class="t" id="t123" style="font-size:13px;line-height:21px;height:21px;color:#ffffff;font-weight:700;left:817.48px;top:986px;transform-origin:0 50%;transform:scaleX(0.7180);">エディット</span>
<span class="t" id="t124" style="font-size:13px;line-height:21px;height:21px;color:#8e8e8e;left:939.40px;top:986px;transform-origin:0 50%;letter-spacing:0.280px;">Fusion</span>
<span class="t" id="t125" style="font-size:13px;line-height:21px;height:21px;color:#8e8e8e;left:1065.14px;top:986px;transform-origin:0 50%;transform:scaleX(0.7622);">カラー</span>
<span class="t" id="t126" style="font-size:13px;line-height:21px;height:21px;color:#8e8e8e;left:1175.30px;top:985px;transform-origin:0 50%;letter-spacing:0.375px;">Fairlight</span>
<span class="t" id="t127" style="font-size:13px;line-height:21px;height:21px;color:#8e8e8e;left:1300.08px;top:986px;transform-origin:0 50%;transform:scaleX(0.7660);">デリバー</span>
<svg style="left:590px;top:968px;" width="20" height="17" viewBox="0 0 20 17"><g fill="none" stroke="#8e8e8e" stroke-width="1.1"><path d="M4 0.8 H16 M2.8 2.9 H17.2" stroke="#4e4e52"/><rect x="1.2" y="5" width="17.6" height="11.2" rx="1.5" fill="#2a2a2e"/><circle cx="5.6" cy="8.6" r="1" fill="#8e8e8e" stroke="none"/><path d="M3.5 14.3 L7.2 10.8 L9.6 12.8 L12.6 10.2 L16.8 14.3 Z" fill="#8e8e8e" stroke="none"/></g></svg>
<svg style="left:706px;top:967px;" width="27" height="18" viewBox="0 0 27 18"><g fill="none" stroke="#8e8e8e" stroke-width="1.2"><path d="M5 5.2 H11.5 M2.8 8.8 H10.5 M5.5 12.4 H10" stroke="#77777b" stroke-width="1.3"/><path d="M13.5 3.2 H24 Q25.4 3.2 25.1 4.6 L23.6 13.4 Q23.4 14.6 22.2 14.6 H11.8 Z" fill="#3a3a3e"/><path d="M17.2 0.5 L14.6 17.5" stroke="#18181b" stroke-width="2.6"/><path d="M17.2 0.5 L14.6 17.5" stroke="#a8a8a8" stroke-width="1.1"/><path d="M21 6.8 V6.9 M20.4 10.8 V10.9" stroke="#b0b0b0" stroke-width="1.5" stroke-linecap="round"/></g></svg>
<svg style="left:829px;top:967px;" width="23" height="20" viewBox="0 0 23 20"><g><rect x="0.5" y="5.2" width="9.3" height="2.7" rx="1.3" fill="#4a9be0"/><rect x="3.5" y="9.2" width="6.3" height="2.7" rx="1.3" fill="#4a9be0"/><rect x="12.8" y="5.2" width="7.5" height="2.7" rx="1.3" fill="#4a9be0"/><rect x="12.8" y="9.2" width="5.6" height="2.7" rx="1.3" fill="#4a9be0"/><rect x="0.5" y="13.3" width="9.3" height="2.7" rx="1.3" fill="#4fa85a"/><rect x="12.8" y="13.3" width="10" height="2.7" rx="1.3" fill="#4fa85a"/><path d="M11.3 2 V18.5" stroke="#e64b3d" stroke-width="1.2"/><circle cx="11.3" cy="1.6" r="1.3" fill="#e64b3d"/></g></svg>
<svg style="left:948px;top:966px;" width="24" height="21" viewBox="0 0 24 21"><g fill="none" stroke-linecap="round"><path d="M12.8 17.8 L19.2 5.6" stroke="#8e8e8e" stroke-width="3.4"/><path d="M12.8 17.8 L19.2 5.6" stroke="#18181b" stroke-width="1.2"/><path d="M2.5 9 Q2.5 16.5 9.5 18.2" stroke="#2a2a2e" stroke-width="2.6"/></g><g fill="#8e8e8e"><path d="M9.3 2.6 L10 4.9 L12.3 5.6 L10 6.3 L9.3 8.6 L8.6 6.3 L6.3 5.6 L8.6 4.9 Z"/><path d="M15.2 0.2 L15.7 1.7 L17.2 2.2 L15.7 2.7 L15.2 4.2 L14.7 2.7 L13.2 2.2 L14.7 1.7 Z"/><path d="M4.8 4.4 L5.3 5.8 L6.7 6.3 L5.3 6.8 L4.8 8.2 L4.3 6.8 L2.9 6.3 L4.3 5.8 Z"/></g></svg>
<svg style="left:1070px;top:967.5px;" width="18" height="18" viewBox="0 0 18 18"><circle cx="9.0" cy="2.1" r="1.6" fill="#a0a0a0"/><circle cx="13.9" cy="4.1" r="1.3" fill="#909090"/><circle cx="15.9" cy="9.0" r="1.6" fill="#6a6a6e"/><circle cx="13.9" cy="13.9" r="1.3" fill="#4a4a4e"/><circle cx="9.0" cy="15.9" r="1.6" fill="#3e3e42"/><circle cx="4.1" cy="13.9" r="1.3" fill="#5a5a5e"/><circle cx="2.1" cy="9.0" r="1.6" fill="#808080"/><circle cx="4.1" cy="4.1" r="1.3" fill="#a8a8a8"/><circle cx="9" cy="9" r="1.5" fill="#8e8e8e"/></svg>
<svg style="left:1192px;top:968.5px;" width="16" height="17" viewBox="0 0 16 17"><path d="M4.6 3.4 L14.4 1 V11.6 A2.6 2.3 0 1 1 12.9 9.5 V4.6 L6.1 6.2 V13.8 A2.6 2.3 0 1 1 4.6 11.7 Z" fill="#8e8e8e"/></svg>
<svg style="left:1310px;top:967px;" width="19" height="19" viewBox="0 0 19 19"><g fill="none" stroke="#8e8e8e" stroke-width="1.1"><path d="M6.8 9.8 Q9 3.2 17.8 1.2 Q16.4 10 9.4 12.4 Z"/><circle cx="12.6" cy="6.2" r="1.7"/><path d="M7.6 8 L3.6 8.6 L1.8 11.4 L5.8 10.8 M10.8 11.6 L10.4 15.6 L7.8 17.2 L8.2 13.2"/><path d="M5.2 13.4 L2 16.8 M3.4 12.6 L1.6 14.4" stroke-width="0.9"/></g></svg>
<svg style="left:45.5px;top:976.5px;" width="19" height="18" viewBox="0 0 19 18"><g fill="#ffffff"><circle cx="9.4" cy="4.6" r="4.3"/><path d="M5.32 5.96 L9.4 11.2 L13.48 5.96 Z"/><circle cx="4.5" cy="13.4" r="4.3"/><path d="M7.87 16.08 L9.4 10.2 L3.40 9.24 Z"/><circle cx="14.3" cy="13.4" r="4.3"/><path d="M15.40 9.24 L9.4 10.2 L10.93 16.08 Z"/></g></svg>
<span class="t" id="t128" style="font-size:13px;line-height:21px;height:21px;color:#f4f4f4;font-weight:700;left:71.70px;top:976px;transform-origin:0 50%;letter-spacing:-0.059px;">DaVinci Resolve 19</span>
<svg style="left:1829px;top:979px;" width="15" height="14" viewBox="0 0 15 14"><path d="M7.4 0.2 L14.8 7.6 H12.6 V13.2 H8.6 V8.6 H6.2 V13.2 H2.2 V7.6 H0 Z" fill="#8c8c8c"/></svg>
<svg style="left:1877.7px;top:977.7px;" width="16" height="16" viewBox="0 0 16 16"><g fill="#8c8c8c"><path d="M6.3 3 L7.7 -0.1 L9.1 3 Z" transform="rotate(0 7.7 7.7)"/><path d="M6.3 3 L7.7 -0.1 L9.1 3 Z" transform="rotate(45 7.7 7.7)"/><path d="M6.3 3 L7.7 -0.1 L9.1 3 Z" transform="rotate(90 7.7 7.7)"/><path d="M6.3 3 L7.7 -0.1 L9.1 3 Z" transform="rotate(135 7.7 7.7)"/><path d="M6.3 3 L7.7 -0.1 L9.1 3 Z" transform="rotate(180 7.7 7.7)"/><path d="M6.3 3 L7.7 -0.1 L9.1 3 Z" transform="rotate(225 7.7 7.7)"/><path d="M6.3 3 L7.7 -0.1 L9.1 3 Z" transform="rotate(270 7.7 7.7)"/><path d="M6.3 3 L7.7 -0.1 L9.1 3 Z" transform="rotate(315 7.7 7.7)"/></g><circle cx="7.7" cy="7.7" r="4.4" fill="none" stroke="#8c8c8c" stroke-width="2.2"/></svg>
</div></body></html>
